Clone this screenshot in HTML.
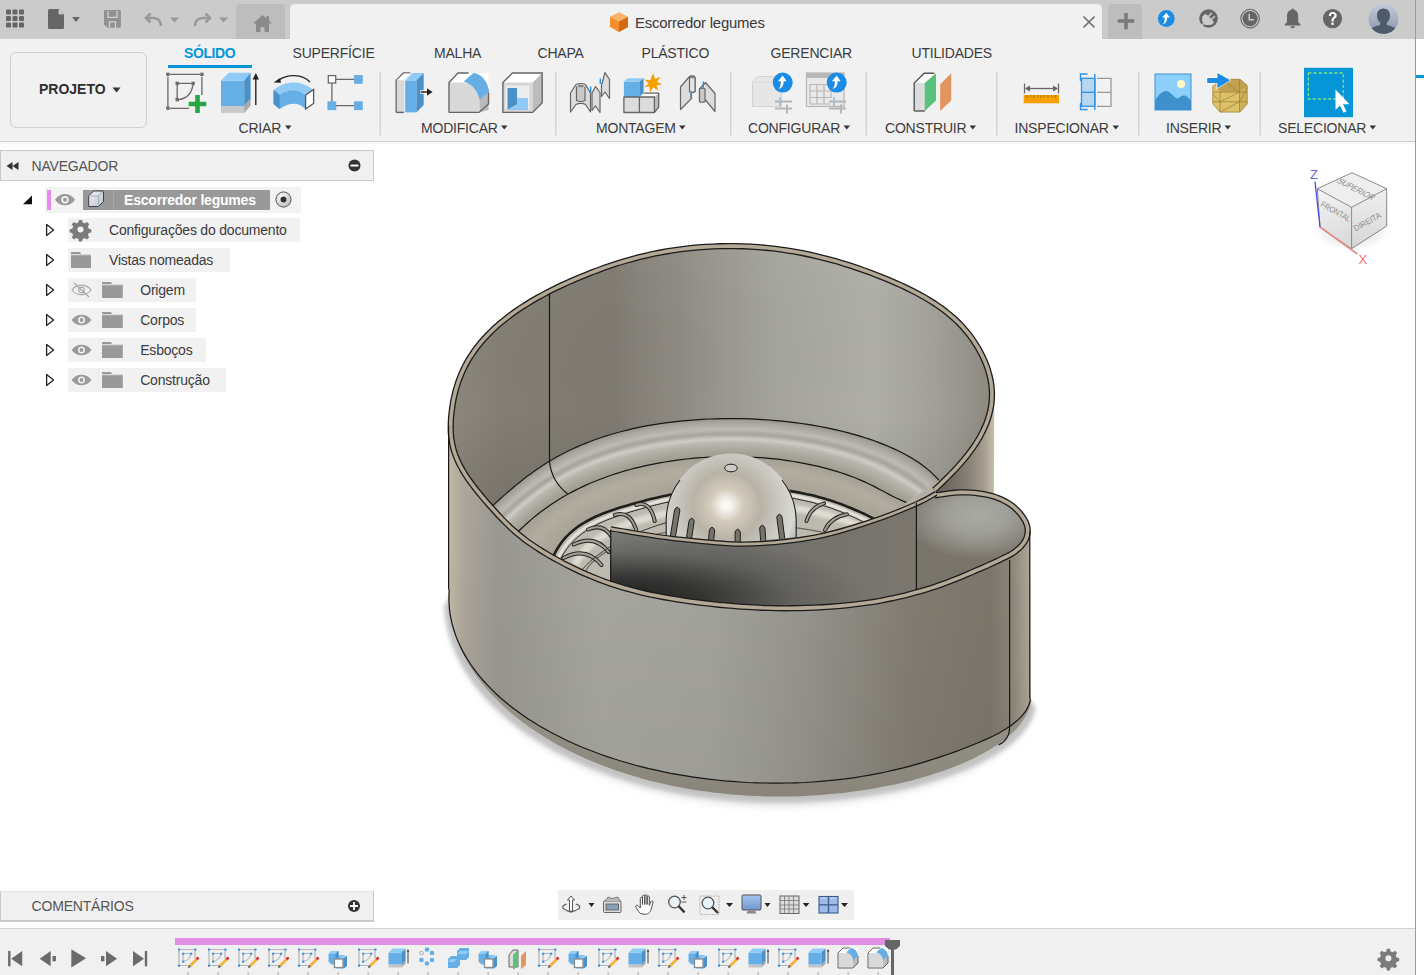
<!DOCTYPE html>
<html><head><meta charset="utf-8">
<style>
*{margin:0;padding:0;box-sizing:border-box}
html,body{width:1424px;height:975px;overflow:hidden;background:#fff;font-family:"Liberation Sans",sans-serif;color:#3c3c3c}
.a{position:absolute}
.t{position:absolute;white-space:nowrap;font-size:14px;letter-spacing:-0.2px;line-height:16px}
svg{position:absolute;overflow:visible}
</style></head><body>
<!-- top bar -->
<div class="a" style="left:0;top:0;width:1415px;height:39px;background:#cbcbcb"></div>
<div class="a" style="left:1416px;top:0;width:8px;height:39px;background:#cbcbcb"></div>
<div class="a" style="left:236px;top:4px;width:49px;height:35px;background:#bdbdbd;border-radius:4px 4px 0 0"></div>
<div class="a" style="left:290px;top:4px;width:812px;height:35px;background:#f1f1f1;border-radius:5px 5px 0 0"></div>
<div class="a" style="left:1108px;top:4px;width:34px;height:35px;background:#bdbdbd;border-radius:4px 4px 0 0"></div>
<!-- toolbar -->
<div class="a" style="left:0;top:39px;width:1415px;height:102px;background:#f1f1f1"></div>
<div class="a" style="left:0;top:141px;width:1415px;height:1px;background:#cdcdcd"></div>
<div class="a" style="left:0;top:142px;width:1415px;height:2px;background:#f7f7f7"></div>
<!-- right thin line -->
<div class="a" style="left:1415px;top:0;width:1px;height:975px;background:#9a9a9a"></div>
<div class="a" style="left:1416px;top:75px;width:8px;height:2.5px;background:#0696d7"></div>
<!-- top bar icons -->
<svg style="left:0;top:0" width="300" height="38">
 <g fill="#666">
  <rect x="6" y="9.5" width="5" height="5" rx="1"/><rect x="12.5" y="9.5" width="5" height="5" rx="1"/><rect x="19" y="9.5" width="5" height="5" rx="1"/>
  <rect x="6" y="16" width="5" height="5" rx="1"/><rect x="12.5" y="16" width="5" height="5" rx="1"/><rect x="19" y="16" width="5" height="5" rx="1"/>
  <rect x="6" y="22.5" width="5" height="5" rx="1"/><rect x="12.5" y="22.5" width="5" height="5" rx="1"/><rect x="19" y="22.5" width="5" height="5" rx="1"/>
  <path d="M48 10.5a1.5 1.5 0 0 1 1.5-1.5H59l5 5v13.5a1.5 1.5 0 0 1-1.5 1.5h-13a1.5 1.5 0 0 1-1.5-1.5z"/>
  <path d="M72 17h8l-4 5z"/>
 </g>
 <path d="M59 9v5h5" fill="#cbcbcb" stroke="#cbcbcb" stroke-width="0.8"/>
 <path d="M104 11.2a1.2 1.2 0 0 1 1.2-1.2h14.5a1.2 1.2 0 0 1 1.2 1.2v15.4a1.2 1.2 0 0 1-1.2 1.2H107.5L104 24.3z" fill="#919191"/>
 <path d="M108 11v6.3h9V11" fill="none" stroke="#cfcfcf" stroke-width="1.3"/>
 <path d="M109.5 27.8v-6h6v6" fill="none" stroke="#cfcfcf" stroke-width="1.3"/>
 <g fill="#999"><path d="M170 17.5h9l-4.5 5z"/><path d="M219 17.5h9l-4.5 5z"/></g>
 <g fill="none" stroke="#999" stroke-width="2.6" stroke-linejoin="miter">
  <path d="M161 26c0-5-3-8-8-8h-6"/><path d="M150.5 13.5l-4.5 4.5 4.5 4.5"/>
  <path d="M195 26c0-5 3-8 8-8h6"/><path d="M205.5 13.5l4.5 4.5-4.5 4.5"/>
 </g>
 <path fill="#8a8a8a" d="M262.5 15l-9.5 8.5h3v8.5h4.5v-5h4v5h4.5v-8.5h3l-3-2.7v-4.8h-2.5v2.6z"/>
</svg>
<!-- tab title -->
<svg style="left:600px;top:8px" width="40" height="30">
 <path d="M19 4.5l9 4.5v10l-9 5-9-5v-10z" fill="#f28e2b"/>
 <path d="M10 9l9 4.7 9-4.7-9-4.5z" fill="#fbb26a"/>
 <path d="M19 13.7v10.3l9-5v-10z" fill="#d46a12"/>
</svg>
<div class="t" style="left:635px;top:14px;font-size:14.9px;line-height:18px;color:#3a3a3a">Escorredor legumes</div>
<svg style="left:1080px;top:13px" width="20" height="20">
 <path d="M3.5 3.5l11 11M14.5 3.5l-11 11" stroke="#707070" stroke-width="1.7"/>
</svg>
<svg style="left:1108px;top:4px" width="316" height="34">
 <path d="M9.7 17h16.5M18 9v16.2" stroke="#7a7a7a" stroke-width="3.6"/>
 <circle cx="58.3" cy="14.5" r="8.4" fill="#1a8ce6"/>
 <path d="M58.3 8.8l-4.2 4.8h2.6c0 3-0.4 5-2 7 3-0.8 4.5-3.5 4.5-7h2.6z" fill="#fff"/>
 <circle cx="100.5" cy="14.5" r="9.3" fill="#666"/>
 <path d="M96.9 10l2.6 1.3 5 5 1.2 1.5c-0.3 2.2-1.5 3.2-4.7 3.2h-4l-2.7-3.2c-0.2-1.5-0.2-3.5 0-5z" fill="#cbcbcb"/>
 <path d="M100.5 12.5l3-3.3M103.3 15.5l3.2-3" stroke="#cbcbcb" stroke-width="1.5" stroke-linecap="round"/>
 <path d="M93 22.3l3-3" stroke="#cbcbcb" stroke-width="1.6"/>
 <circle cx="142.1" cy="14.6" r="9.3" fill="none" stroke="#666" stroke-width="1.1"/>
 <circle cx="142.1" cy="14.6" r="7.6" fill="#666"/>
 <path d="M141.2 9.8v5.9h4.8" fill="none" stroke="#cbcbcb" stroke-width="1.5"/>
 <path d="M183.6 5.5c0-0.6 0.5-1 1.1-1s1.1 0.4 1.1 1c3 0.8 4.4 3.2 4.4 6.6v5.8l2.3 2.6v0.9h-15.8v-0.9l2.3-2.6v-5.8c0-3.4 1.5-5.8 4.6-6.6z M182.3 22.2h4.8a2.4 2 0 0 1-4.8 0z" fill="#666"/>
 <circle cx="224.5" cy="14.6" r="9.6" fill="#666"/>
 <path d="M220.8 12c0-2.6 1.7-4.1 3.9-4.1 2.4 0 4 1.4 4 3.6 0 2.8-3.1 3-3.1 5.3v0.6h-2.1v-1c0-3.1 2.9-3.1 2.9-4.9 0-1-0.7-1.7-1.7-1.7-1.1 0-1.8 0.8-1.8 2.2z" fill="#fff"/>
 <rect x="223.4" y="18.6" width="2.3" height="2.3" fill="#fff"/>
 <defs><linearGradient id="av" x1="0" y1="0" x2="0" y2="1"><stop offset="0" stop-color="#c3cbd8"/><stop offset="1" stop-color="#8795ac"/></linearGradient>
 <clipPath id="avc"><circle cx="275.5" cy="15" r="15"/></clipPath></defs>
 <circle cx="275.5" cy="15" r="15" fill="url(#av)"/>
 <g clip-path="url(#avc)" fill="#4f5a6b">
  <path d="M275.5 4.5c-4.2 0-6.5 3-6.5 7 0 3 1.2 5.6 3.2 7.3v2.2c-4.5 1-9 2.5-10 5.5v5h26.6v-5c-1-3-5.5-4.5-10-5.5v-2.2c2-1.7 3.2-4.3 3.2-7.3 0-4-2.3-7-6.5-7z"/>
 </g>
</svg>

<!-- PROJETO -->
<div class="a" style="left:10px;top:52px;width:137px;height:76px;border:1.3px solid #cfcfcf;border-radius:6px;background:#f1f1f1"></div>
<div class="t" style="left:39px;top:81px;font-weight:bold;font-size:14px;color:#2f2f2f;letter-spacing:0px">PROJETO</div>
<svg style="left:0;top:0" width="10" height="10"><path d="M112.5 87.5h8l-4 5z" fill="#333"/></svg>

<!-- tabs -->
<div class="t" style="left:184px;top:45px;font-weight:bold;color:#0696d7;letter-spacing:-0.4px">SÓLIDO</div>
<div class="a" style="left:168px;top:64.5px;width:84px;height:3.5px;background:#0696d7"></div>
<div class="t" style="left:292.5px;top:45px">SUPERFÍCIE</div>
<div class="t" style="left:434px;top:45px">MALHA</div>
<div class="t" style="left:537.5px;top:45px">CHAPA</div>
<div class="t" style="left:641.5px;top:45px">PLÁSTICO</div>
<div class="t" style="left:770.5px;top:45px">GERENCIAR</div>
<div class="t" style="left:911.5px;top:45px">UTILIDADES</div>

<!-- group labels -->
<div class="t" style="left:238.5px;top:120px">CRIAR</div>
<div class="t" style="left:421px;top:120px">MODIFICAR</div>
<div class="t" style="left:596px;top:120px">MONTAGEM</div>
<div class="t" style="left:748px;top:120px">CONFIGURAR</div>
<div class="t" style="left:885px;top:120px">CONSTRUIR</div>
<div class="t" style="left:1014.5px;top:120px">INSPECIONAR</div>
<div class="t" style="left:1166px;top:120px">INSERIR</div>
<div class="t" style="left:1278px;top:120px">SELECIONAR</div>
<svg style="left:0;top:0" width="10" height="10"><g fill="#333">
 <path d="M285 125.5h6.5l-3.25 4z"/><path d="M501 125.5h6.5l-3.25 4z"/><path d="M679 125.5h6.5l-3.25 4z"/>
 <path d="M843.5 125.5h6.5l-3.25 4z"/><path d="M969.5 125.5h6.5l-3.25 4z"/><path d="M1112.5 125.5h6.5l-3.25 4z"/>
 <path d="M1224.5 125.5h6.5l-3.25 4z"/><path d="M1369.5 125.5h6.5l-3.25 4z"/>
</g>
<g fill="#d4d4d4">
 <rect x="379.5" y="72" width="1.5" height="63.5"/><rect x="555" y="72" width="1.5" height="63.5"/><rect x="730" y="72" width="1.5" height="63.5"/>
 <rect x="865.5" y="72" width="1.5" height="63.5"/><rect x="996" y="72" width="1.5" height="63.5"/><rect x="1138" y="72" width="1.5" height="63.5"/>
 <rect x="1259.5" y="72" width="1.5" height="63.5"/>
</g></svg>

<svg style="left:0;top:0" width="1424" height="145">
<defs>
 <linearGradient id="selg" x1="0" y1="0" x2="0" y2="1"><stop offset="0" stop-color="#0a9be0"/><stop offset="1" stop-color="#0590d4"/></linearGradient>
</defs>
<!-- CRIAR: sketch -->
<g fill="none" stroke="#6a6a6a" stroke-width="1.3">
 <path d="M170 74.4h30M167.9 77v29.5M170 108.3h19M201.9 77v18"/>
 <path d="M179 83.4h12.4M177.2 85v13M179 99.6c7-1 12.5-6 14-14.5"/>
</g>
<g fill="#6a6a6a">
 <rect x="166.2" y="72.7" width="3.4" height="3.4"/><rect x="200.2" y="72.7" width="3.4" height="3.4"/><rect x="166.2" y="106.4" width="3.4" height="3.4"/>
 <rect x="175.5" y="81.7" width="3.4" height="3.4"/><rect x="191.4" y="81.7" width="3.4" height="3.4"/><rect x="175.5" y="97.9" width="3.4" height="3.4"/>
</g>
<path d="M195.2 95h4.6v6.7h6.5v4.6h-6.5v6.7h-4.6v-6.7h-6.5v-4.6h6.5z" fill="#25a745"/>
<!-- extrude -->
<path d="M221 106h23.2v6.9H221z" fill="#c9c9c9"/>
<path d="M244.2 106l6.4-7.5v7l-6.4 7.4z" fill="#a9a9a9"/>
<path d="M221 80.5h23.2V106H221z" fill="#65aee6"/>
<path d="M221 80.5l8-7.8h21.6l-6.4 7.8z" fill="#8fcbf6"/>
<path d="M244.2 80.5l6.4-7.8v25.8l-6.4 7.5z" fill="#4b91c9"/>
<path d="M255.8 77v28" stroke="#222" stroke-width="1.4"/><path d="M252.6 79.5l3.2-6.5 3.2 6.5z" fill="#222"/>
<!-- revolve -->
<path d="M310 82c-8-8-22-8.5-32-1.5" fill="none" stroke="#222" stroke-width="1.3"/>
<path d="M273.6 82.5l6.5-4.5 0.8 4.8z" fill="#222"/>
<path d="M273.6 90c12-10 28-10 40 0v8c-12-8-28-8-40 0z" fill="#8fcbf6"/>
<path d="M273.6 90v14l6 5c10-7 19-7 26 0v-14c-8-6-17-6-26 0z" fill="#65aee6"/>
<path d="M273.6 90v14l6 5v-14z" fill="#4b91c9"/>
<path d="M305.6 95l8-5.5v14l-8 5.5z" fill="#fff" stroke="#555" stroke-width="1.3"/>
<!-- pattern -->
<g stroke="#6a6a6a" stroke-width="1.3" fill="none"><path d="M336 79.3h18M331.9 83.5v18M336 105.7h18"/></g>
<rect x="328.3" y="75.6" width="7.4" height="7.4" fill="#fff" stroke="#6a6a6a" stroke-width="1.3"/>
<g fill="#65aee6" stroke="#5aa0d8" stroke-width="0.6"><rect x="354.3" y="75.3" width="8" height="8"/><rect x="327.9" y="101.8" width="8" height="8"/><rect x="354.3" y="101.8" width="8" height="8"/></g>

<!-- MODIFICAR: press pull -->
<path d="M396.2 112.4V80.4l7.3-7.4h6.7" fill="none" stroke="#666" stroke-width="1.4"/>
<path d="M396.9 80.4h7.3v31.5h-7.3z" fill="#d9d9d9"/><path d="M396.2 112.4h7.8" stroke="#666" stroke-width="1.4"/>
<path d="M397 80l7-6.5h6l-6 6.5z" fill="#fff"/>
<path d="M405.2 80.4h11.2v32h-11.2z" fill="#65aee6"/>
<path d="M405.2 80.4l7.2-7.4h11.3l-7.3 7.4z" fill="#8fcbf6"/>
<path d="M416.4 80.4l7.3-7.4v32l-7.3 7.4z" fill="#4b91c9"/>
<path d="M420 92h8" stroke="#fff" stroke-width="3.4"/>
<path d="M420.5 92h7" stroke="#222" stroke-width="1.5"/><path d="M427 88.3l5.5 3.7-5.5 3.7z" fill="#222"/>
<!-- fillet -->
<path d="M449 82.5l9-9h30.5v25l-9.5 13.9H449z" fill="#fff"/>
<path d="M449.5 82.5h15c9 0 15 6 15 15v15h-30z" fill="#d9d9d9"/>
<path d="M479.5 97.5l9-7.5v20l-9 2.4z" fill="#b9b9b9"/>
<path d="M463.7 81.5c4-3.5 7.5-7 10-8.5 9 1 15 11 15.3 18.8l-9.5 8c-1.5-9-7.5-16-15.8-18.3z" fill="#65aee6"/>
<path d="M449 112.4V82.5l9-9.5h10.5M449 112.4h30l9.5-8.5V92.5" fill="none" stroke="#666" stroke-width="1.4"/>
<!-- shell -->
<path d="M502.9 82.6l9.5-9.6h29.8v29.8l-9.5 9.6h-29.8z" fill="#fff"/>
<path d="M502.9 82.6h29.8v29.8h-29.8z" fill="#d6d6d6"/>
<path d="M532.7 82.6l9.5-9.6v29.8l-9.5 9.6z" fill="#bcbcbc"/>
<path d="M505.5 85.5h24v24h-24z" fill="#ececec"/>
<path d="M507.5 88h9.5v16.5h11v5h-20.5z" fill="#4b91c9"/>
<path d="M517 98h11v6.5h-11v-6.5zM507.5 109.5l9.5-5.5h11v5.5z" fill="#8fcbf6"/>
<path d="M502.9 82.6l9.5-9.6h29.8v29.8l-9.5 9.6h-29.8z" fill="none" stroke="#666" stroke-width="1.4"/>

<!-- MONTAGEM joint -->
<g stroke="#666" stroke-width="1.2" stroke-linejoin="round" fill="#dcdcdc">
 <path d="M570.5 112V93l5.5-8.5c2.5-1.3 7-1.3 9.5 0l5 8.5v19l-5-7.5c-2.5-1.5-7-1.5-9.5 0z"/>
 <path d="M576.5 86.5v14c2.5 1.3 6.5 1.3 8.5 0v-14" fill="#c9c9c9"/>
 <path d="M592 93l3.5-6.5 4.5 6v20l-4.5-6.5-3.5 4.5z"/>
 <path d="M601.5 85.5l3.5-13 4.5 7v19l-4.5-6.5-3.5 4.5z"/>
</g>
<ellipse cx="580.7" cy="86" rx="3.2" ry="1.3" fill="#888"/>
<path d="M590.7 86.5v5.5M600.3 78.5v5.5" stroke="#1b8ee8" stroke-width="1.3"/>
<!-- new component -->
<path d="M623.9 81.6h15.5V97h-15.5z" fill="#65aee6"/>
<path d="M623.9 81.6l3.9-3.4h15.8l-4.2 3.4z" fill="#8fcbf6"/>
<path d="M639.4 81.6l4.2-3.4v15l-4.2 3.8z" fill="#4b91c9"/>
<path d="M639.4 97l4.2-3.8h15.1l-4.3 3.8z" fill="#fff"/>
<path d="M654.4 97l4.3-3.8v14l-4.3 5.3z" fill="#bcbcbc"/>
<path d="M623.9 97h30.5v15.5h-30.5z" fill="#dcdcdc"/>
<path d="M623.9 97h30.5v15.5h-30.5zM639.4 97v15.5M654.4 112.5l4.3-5.3v-14h-15.1" fill="none" stroke="#666" stroke-width="1.3" stroke-linejoin="round"/>
<path d="M653.2 73l1.8 6 5.5-2.3-3.5 5 5.3 2.5-5.8 1 1.8 5.5-5-3.5-3.2 5-0.5-6-5.5 1 4.5-3.8-4.2-4 5.8 0.8z" fill="#f5a000"/>
<!-- joint 2 -->
<g stroke="#666" stroke-width="1.2" stroke-linejoin="round" fill="#dcdcdc">
 <path d="M680.5 109.5V87l8.5-10c1.5-1.5 5-1.5 6 0v14.5c-1.5 1-3 1-4 0.5V99z"/>
 <path d="M689.5 77.5c1.3-1.5 4.5-1.5 5.5 0v14c-1.3 1-4.2 1-5.5 0z" fill="#e6e6e6"/>
 <path d="M699.5 89l6-6.5 9.5 11v18l-9.5-11.5-2.5 0.5c-1.5 1-3 1-3.5 0z"/>
 <path d="M699.5 89c1-1 4-1 5.5 0v12.5c-1.5 1-4.5 1-5.5 0z" fill="#c9c9c9"/>
</g>
<ellipse cx="692.3" cy="77.5" rx="2.4" ry="1" fill="#888"/>
<path d="M703.3 81.5v7M691.5 91.5v7.5" stroke="#1b8ee8" stroke-width="1.3"/>
<!-- CONFIGURAR -->
<path d="M752.5 81.5l5-5h24v30h-29z" fill="#e6e6e6" stroke="#d3d3d3" stroke-width="1"/>
<path d="M753 82h28" stroke="#ddd" stroke-width="1"/>
<circle cx="782.7" cy="82.6" r="10" fill="#1a8ce6"/>
<path d="M782.7 75.5l-4.8 5.7h2.9c0 3.4-0.3 5.5-2.2 7.8 3.5-0.9 5.1-4 5.1-7.8h2.9z" fill="#fff"/>
<path d="M775 101.5h17M775 108.5h17M780 97.5v8.5M787 104.5v9" stroke="#b5b5b5" stroke-width="2"/>
<path d="M780 98v7" stroke="#9ccaf0" stroke-width="1.5"/>
<rect x="806.5" y="73" width="37.5" height="33.5" fill="#e9e9e9" stroke="#b8b8b8" stroke-width="1.2"/>
<rect x="806.5" y="73" width="37.5" height="5" fill="#b8b8b8"/>
<g stroke="#b8b8b8" stroke-width="1.2" fill="none"><path d="M810 84.5h25M810 91h25M810 97.5h22M810 104h20M810 84v20M817 84v20M824 84v20M831 84v14"/></g>
<circle cx="836.7" cy="82.6" r="10" fill="#1a8ce6"/>
<path d="M836.7 75.5l-4.8 5.7h2.9c0 3.4-0.3 5.5-2.2 7.8 3.5-0.9 5.1-4 5.1-7.8h2.9z" fill="#fff"/>
<path d="M829 101.5h17M829 108.5h17M834 97.5v8.5M841 104.5v9" stroke="#b5b5b5" stroke-width="2"/>
<path d="M834 98v7" stroke="#9ccaf0" stroke-width="1.5"/>

<!-- CONSTRUIR plane -->
<path d="M914.2 83l10-9.7h11v27l-10.4 10.7h-10.6z" fill="#dcdcdc"/>
<path d="M914.2 83l10-9.7h11l-10.4 9.7z" fill="#fff"/>
<path d="M914.2 111V83l10-9.7h10" fill="none" stroke="#555" stroke-width="1.4"/><path d="M914.2 111h10.6" stroke="#555" stroke-width="1.4"/>
<path d="M924.8 83l11.2-9.7v27.2l-11.2 10.5z" fill="#58c27a"/>
<path d="M940.2 84.3l11-11v27.2l-11 10.5z" fill="#e39560"/>

<!-- INSPECIONAR measure -->
<path d="M1024.5 83.5v10M1058.5 83.5v10" stroke="#666" stroke-width="1.2"/>
<path d="M1026 88.5h31" stroke="#666" stroke-width="1.3"/>
<path d="M1025 88.5l5-3v6zM1058 88.5l-5-3v6z" fill="#666"/>
<rect x="1023.7" y="95" width="35.3" height="8.3" fill="#f5a000"/>
<path d="M1027 95v3M1030.5 95v2M1034 95v3M1037.5 95v2M1041 95v3M1044.5 95v2M1048 95v3M1051.5 95v2M1055 95v3" stroke="#8a6a20" stroke-width="0.8"/>
<!-- section -->
<rect x="1081.5" y="78.3" width="13.3" height="28" fill="#b7d6f0" stroke="#2c93e6" stroke-width="1.3"/>
<path d="M1081.5 92.3h13.3" stroke="#2c93e6" stroke-width="1.3"/>
<path d="M1094.8 74v36" stroke="#2c93e6" stroke-width="1.4"/>
<path d="M1080.5 81v-7h7M1080.5 103v6.5h7" fill="none" stroke="#2c93e6" stroke-width="1.4"/>
<path d="M1097 78.3h14v28h-14M1097 92.3h14" fill="none" stroke="#999" stroke-width="1.3"/>

<!-- INSERIR image -->
<rect x="1155" y="74" width="36" height="36" fill="#8ccffa"/>
<path d="M1155 101c4-7 9-12 14-9 5 3 7 9 11 5 4-3 8-1 11 4v9h-36z" fill="#3f91cd"/>
<rect x="1155" y="74" width="36" height="36" fill="none" stroke="#3f91cd" stroke-width="1"/>
<circle cx="1181" cy="84" r="4" fill="#fffbc7"/>
<!-- mesh -->
<path d="M1212.8 85.4V103.9l7.2 8.2h20l7.2-8.2V85.4l-7.2-6.1h-9.2z" fill="#dcc06a"/>
<path d="M1214 84l16.8-4.7h9.2l7.2 6.1-7.7 6.7h-19.5z" fill="#c1a14f"/>
<path d="M1239.5 92.1l7.7-6.7v18.5l-7.7 8.2z" fill="#cdb058"/>
<g fill="none" stroke="#9f8437" stroke-width="0.75">
 <path d="M1212.8 85.4V103.9l7.2 8.2h20l7.2-8.2V85.4l-7.2-6.1h-9.2"/>
 <path d="M1220 92.1v20M1239.5 79.3v32.8M1212.8 92.1h34.4M1212.8 101.8h34.4M1220 101.8l19.5-9.7M1220 112.1l19.5-10.3M1226.7 83.4l12.8 8.7M1212.8 94l7.2 7.8M1247.2 87.5l-7.7 14.3"/>
</g>
<path d="M1206.2 77h10.2v-5.6l14.9 8.9-14.9 8.9v-5.6h-10.2z" fill="#fff" opacity="0.9"/>
<path d="M1207.2 78h10.2v-5.1l12.9 7.4-12.9 7.7v-5.1h-10.2z" fill="#1a8ce6"/>

<!-- SELECIONAR -->
<rect x="1304" y="67.8" width="49" height="49.4" fill="#0696d7"/>
<rect x="1308.3" y="73" width="35" height="26" fill="none" stroke="#7ee37e" stroke-width="1.3" stroke-dasharray="3.2 2"/>
<path d="M1335.5 89.5v20.5l4.5-4.5 3.5 7.3 3-1.5-3.5-7h6.5z" fill="#fff"/>
</svg>

<!-- navigator header -->
<div class="a" style="left:0;top:150px;width:374px;height:30.5px;background:#f0f0f0;border:1.3px solid #c9c9c9"></div>
<svg style="left:0;top:0" width="10" height="10">
 <path d="M6.5 166l6-4v8zM12.5 166l6-4v8z" fill="#333"/>
 <circle cx="354.5" cy="165.5" r="6" fill="#333"/><rect x="350.5" y="164.6" width="8" height="1.9" fill="#fff"/>
</svg>
<div class="t" style="left:31.5px;top:157.5px;color:#555">NAVEGADOR</div>
<!-- root row -->
<div class="a" style="left:45px;top:187.3px;width:256px;height:25.4px;background:#f3f3f3"></div>
<div class="a" style="left:47.4px;top:190px;width:3.6px;height:19.7px;background:#e58be8"></div>
<div class="a" style="left:82.6px;top:190.3px;width:187px;height:19.4px;background:#999"></div>
<div class="a" style="left:113px;top:190.3px;width:1px;height:19.4px;background:#a8a8a8"></div>
<div class="t" style="left:124px;top:192px;color:#fff;font-weight:bold">Escorredor legumes</div>
<svg style="left:0;top:0" width="10" height="10">
 <defs><linearGradient id="cubeg" x1="0" y1="0" x2="1" y2="1"><stop offset="0" stop-color="#f2f4f8"/><stop offset="1" stop-color="#b9c0cc"/></linearGradient>
 <radialGradient id="radg" cx="0.4" cy="0.35" r="0.7"><stop offset="0" stop-color="#fff"/><stop offset="1" stop-color="#bbb"/></radialGradient></defs>
 <path d="M23 204.3l9-8.7v8.7z" fill="#111"/>
 <path d="M55 199.7c5-7.5 15-7.5 20 0c-5 7.5-15 7.5-20 0z" fill="#9a9a9a"/>
 <circle cx="65" cy="199.7" r="3.7" fill="#f3f3f3"/><circle cx="65" cy="199.7" r="2" fill="#9a9a9a"/>
 <path d="M88.7 196l5-5h9.8v10.5l-5 5h-9.8z" fill="url(#cubeg)" stroke="#333" stroke-width="0.9"/>
 <path d="M88.7 196h9.8l5-5M98.5 196v10.5" fill="none" stroke="#9aa2ae" stroke-width="0.8"/>
 <circle cx="283.5" cy="199.5" r="7.6" fill="url(#radg)" stroke="#555" stroke-width="1"/>
 <circle cx="283.5" cy="199.5" r="3" fill="#333"/>
</svg>
<!-- child rows -->
<div class="a" style="left:67.7px;top:217.5px;width:232.5px;height:24.6px;background:#f1f1f1"></div>
<div class="a" style="left:67.7px;top:247.6px;width:162px;height:24.6px;background:#f1f1f1"></div>
<div class="a" style="left:67.7px;top:277.7px;width:128.5px;height:24.6px;background:#f1f1f1"></div>
<div class="a" style="left:67.7px;top:307.7px;width:128.5px;height:24.6px;background:#f1f1f1"></div>
<div class="a" style="left:67.7px;top:337.7px;width:138.5px;height:24.6px;background:#f1f1f1"></div>
<div class="a" style="left:67.7px;top:367.7px;width:158.5px;height:24.6px;background:#f1f1f1"></div>
<svg style="left:0;top:0" width="10" height="10">
 <g fill="#ececec"><rect x="98" y="217.5" width="1" height="24.6"/><rect x="98" y="247.6" width="1" height="24.6"/><rect x="98" y="277.7" width="1" height="24.6"/><rect x="98" y="307.7" width="1" height="24.6"/><rect x="98" y="337.7" width="1" height="24.6"/><rect x="98" y="367.7" width="1" height="24.6"/></g>
 <g fill="none" stroke="#222" stroke-width="1.3" stroke-linejoin="round">
  <path d="M46.6 224.5v11l7-5.5z"/><path d="M46.6 254.5v11l7-5.5z"/><path d="M46.6 284.5v11l7-5.5z"/>
  <path d="M46.6 314.5v11l7-5.5z"/><path d="M46.6 344.5v11l7-5.5z"/><path d="M46.6 374.5v11l7-5.5z"/>
 </g>
 <!-- gear -->
 <g transform="translate(80.5 229.5)">
  <path fill="#7b7b7b" d="M-1.6-9.5h3.2l0.5 2.6a7 7 0 0 1 2.2 0.9l2.2-1.5 2.3 2.3-1.5 2.2a7 7 0 0 1 0.9 2.2l2.6 0.5v3.2l-2.6 0.5a7 7 0 0 1-0.9 2.2l1.5 2.2-2.3 2.3-2.2-1.5a7 7 0 0 1-2.2 0.9l-0.5 2.6h-3.2l-0.5-2.6a7 7 0 0 1-2.2-0.9l-2.2 1.5-2.3-2.3 1.5-2.2a7 7 0 0 1-0.9-2.2l-2.6-0.5v-3.2l2.6-0.5a7 7 0 0 1 0.9-2.2l-1.5-2.2 2.3-2.3 2.2 1.5a7 7 0 0 1 2.2-0.9z"/>
  <circle r="3" fill="#f1f1f1"/>
 </g>
 <!-- folders -->
 <g fill="#999">
  <path d="M71 252h9l1 2h10v14H71z"/>
  <path d="M102 282h9l1 2h10.8v14H102z"/><path d="M102 312h9l1 2h10.8v14H102z"/>
  <path d="M102 342h9l1 2h10.8v14H102z"/><path d="M102 372h9l1 2h10.8v14H102z"/>
 </g>
 <g fill="#f1f1f1"><rect x="71" y="254.3" width="20" height="0.9"/><rect x="102" y="284.3" width="20.8" height="0.9"/><rect x="102" y="314.3" width="20.8" height="0.9"/><rect x="102" y="344.3" width="20.8" height="0.9"/><rect x="102" y="374.3" width="20.8" height="0.9"/></g>
 <!-- eyes -->
 <g fill="#9a9a9a">
  <path d="M71.5 320c5-7 15-7 20 0c-5 7-15 7-20 0z"/><path d="M71.5 350c5-7 15-7 20 0c-5 7-15 7-20 0z"/><path d="M71.5 380c5-7 15-7 20 0c-5 7-15 7-20 0z"/>
 </g>
 <g fill="#f1f1f1"><circle cx="81.5" cy="320" r="3.5"/><circle cx="81.5" cy="350" r="3.5"/><circle cx="81.5" cy="380" r="3.5"/></g>
 <g fill="#9a9a9a"><circle cx="81.5" cy="320" r="1.9"/><circle cx="81.5" cy="350" r="1.9"/><circle cx="81.5" cy="380" r="1.9"/></g>
 <!-- eye hidden -->
 <path d="M72 290c5-6.5 14-6.5 19 0c-5 6.5-14 6.5-19 0z" fill="none" stroke="#aaa" stroke-width="1.2"/>
 <circle cx="81.5" cy="290" r="2.8" fill="none" stroke="#aaa" stroke-width="1.2"/>
 <path d="M74 283l15 14" stroke="#aaa" stroke-width="1.3"/>
</svg>
<div class="t" style="left:109px;top:222px">Configurações do documento</div>
<div class="t" style="left:109px;top:252px">Vistas nomeadas</div>
<div class="t" style="left:140.2px;top:282px">Origem</div>
<div class="t" style="left:140.2px;top:312px">Corpos</div>
<div class="t" style="left:140.2px;top:342px">Esboços</div>
<div class="t" style="left:140.2px;top:372px">Construção</div>

<svg style="left:0;top:0" width="1424" height="975">
<defs>
<linearGradient id="gBack" x1="448" y1="0" x2="994" y2="0" gradientUnits="userSpaceOnUse">
 <stop offset="0" stop-color="#8d887e"/><stop offset="0.1" stop-color="#837e74"/><stop offset="0.3" stop-color="#7f7a71"/><stop offset="0.42" stop-color="#8e8a82"/>
 <stop offset="0.6" stop-color="#a4a49d"/><stop offset="0.78" stop-color="#afafa8"/><stop offset="0.9" stop-color="#a09f97"/><stop offset="1" stop-color="#8c887f"/>
</linearGradient>
<linearGradient id="gBackV" x1="0" y1="250" x2="0" y2="520" gradientUnits="userSpaceOnUse">
 <stop offset="0" stop-color="#fff" stop-opacity="0.03"/><stop offset="0.6" stop-color="#000" stop-opacity="0"/><stop offset="1" stop-color="#000" stop-opacity="0.1"/>
</linearGradient>
<linearGradient id="gFront" x1="448" y1="0" x2="1030" y2="0" gradientUnits="userSpaceOnUse">
 <stop offset="0" stop-color="#c6bcab"/><stop offset="0.03" stop-color="#aea89c"/><stop offset="0.09" stop-color="#9c9a94"/>
 <stop offset="0.26" stop-color="#aaaaa3"/><stop offset="0.45" stop-color="#a7a7a0"/><stop offset="0.62" stop-color="#98968f"/>
 <stop offset="0.8" stop-color="#857f74"/><stop offset="0.93" stop-color="#7f786d"/><stop offset="0.97" stop-color="#8f897d"/><stop offset="1" stop-color="#b3ab9c"/>
</linearGradient>
<linearGradient id="gFrontV" x1="0" y1="520" x2="0" y2="790" gradientUnits="userSpaceOnUse">
 <stop offset="0" stop-color="#000" stop-opacity="0.02"/><stop offset="1" stop-color="#000" stop-opacity="0.06"/>
</linearGradient>
<linearGradient id="gDark" x1="610" y1="0" x2="936" y2="0" gradientUnits="userSpaceOnUse">
 <stop offset="0" stop-color="#7d7d7b"/><stop offset="0.4" stop-color="#71706c"/><stop offset="0.75" stop-color="#77746d"/><stop offset="1" stop-color="#7e786e"/>
</linearGradient>
<radialGradient id="gDarkV" cx="615" cy="600" r="230" gradientUnits="userSpaceOnUse" gradientTransform="translate(615 600) scale(1.1 0.3) translate(-615 -600)">
 <stop offset="0" stop-color="#000" stop-opacity="0.8"/><stop offset="0.35" stop-color="#000" stop-opacity="0.55"/><stop offset="0.7" stop-color="#000" stop-opacity="0.15"/><stop offset="1" stop-color="#000" stop-opacity="0"/>
</radialGradient>
<radialGradient id="gEnd" cx="978" cy="515" r="75" gradientUnits="userSpaceOnUse" gradientTransform="translate(978 515) scale(1 0.6) rotate(-15) translate(-978 -515)">
 <stop offset="0" stop-color="#a9aaa4"/><stop offset="0.4" stop-color="#a09f99"/><stop offset="0.75" stop-color="#8b877e"/><stop offset="1" stop-color="#79746a"/>
</radialGradient>
<linearGradient id="gRight" x1="945" y1="0" x2="994" y2="0" gradientUnits="userSpaceOnUse">
 <stop offset="0" stop-color="#6c675e"/><stop offset="0.45" stop-color="#857f74"/><stop offset="0.8" stop-color="#a59d8e"/><stop offset="1" stop-color="#c6bdab"/>
</linearGradient>
<linearGradient id="gBase" x1="0" y1="700" x2="0" y2="795" gradientUnits="userSpaceOnUse">
 <stop offset="0" stop-color="#99948a"/><stop offset="1" stop-color="#8a857b"/>
</linearGradient>
<linearGradient id="gTorus" x1="0" y1="418" x2="0" y2="470" gradientUnits="userSpaceOnUse">
 <stop offset="0" stop-color="#9f9c94"/><stop offset="0.15" stop-color="#c9c8c2"/><stop offset="0.3" stop-color="#e3e3de"/><stop offset="0.45" stop-color="#c2bfb6"/><stop offset="0.75" stop-color="#a9a59b"/><stop offset="1" stop-color="#b3afa5"/>
</linearGradient>
<radialGradient id="gDome" cx="728" cy="506" r="75" gradientUnits="userSpaceOnUse" fx="726" fy="505">
 <stop offset="0" stop-color="#ffffff"/><stop offset="0.08" stop-color="#f2f0ea"/><stop offset="0.22" stop-color="#d3cabb"/><stop offset="0.45" stop-color="#b9b3a7"/><stop offset="0.7" stop-color="#cac9c3"/><stop offset="0.88" stop-color="#d9d9d5"/><stop offset="1" stop-color="#b5b3ab"/>
</radialGradient>
<filter id="blur6" x="-20%" y="-50%" width="140%" height="200%"><feGaussianBlur stdDeviation="4"/></filter>
<filter id="blur2" x="-10%" y="-10%" width="120%" height="120%"><feGaussianBlur stdDeviation="2"/></filter>
<filter id="blur1" x="-10%" y="-10%" width="120%" height="120%"><feGaussianBlur stdDeviation="1.5"/></filter>
<clipPath id="cpTorus"><path d="M492.2 506.1 L494.9 503.6 L497.5 501.2 L500.2 498.8 L502.9 496.4 L505.5 494.1 L508.2 491.8 L510.9 489.5 L513.5 487.2 L516.3 484.9 L519.0 482.7 L521.8 480.5 L524.6 478.2 L527.5 476.1 L530.5 473.9 L533.5 471.7 L536.6 469.5 L539.8 467.4 L543.0 465.2 L546.4 463.1 L549.8 461.0 L553.3 458.9 L557.0 456.8 L560.8 454.8 L564.6 452.8 L568.6 450.8 L572.8 448.8 L577.0 446.9 L581.4 445.0 L586.0 443.1 L590.6 441.3 L595.4 439.5 L600.4 437.8 L605.4 436.1 L610.6 434.5 L616.0 433.0 L621.5 431.5 L627.1 430.1 L632.8 428.7 L638.7 427.4 L644.7 426.2 L650.8 425.1 L656.9 424.1 L663.2 423.2 L669.6 422.3 L676.0 421.6 L682.5 420.9 L689.0 420.3 L695.6 419.8 L702.3 419.4 L709.0 419.0 L715.7 418.8 L722.4 418.6 L729.1 418.6 L735.8 418.6 L742.5 418.7 L749.2 418.9 L755.9 419.2 L762.6 419.6 L769.2 420.0 L775.7 420.6 L782.2 421.2 L788.7 421.9 L795.0 422.6 L801.4 423.5 L807.6 424.4 L813.7 425.4 L819.8 426.5 L825.8 427.6 L831.6 428.9 L837.4 430.1 L843.0 431.5 L848.5 432.9 L853.9 434.4 L859.2 435.9 L864.4 437.5 L869.4 439.1 L874.3 440.8 L879.0 442.6 L883.6 444.4 L888.1 446.2 L892.4 448.1 L896.6 450.0 L900.6 452.0 L904.5 454.0 L908.2 456.0 L911.7 458.1 L915.1 460.2 L918.4 462.3 L921.5 464.5 L924.4 466.7 L927.2 468.9 L929.8 471.1 L932.3 473.4 L934.6 475.6 L936.8 477.9 L938.8 480.2 L906.2 502.4 L902.6 500.9 L899.2 499.3 L895.8 497.8 L892.6 496.2 L889.5 494.6 L886.4 493.0 L883.4 491.3 L880.3 489.7 L877.2 488.1 L874.1 486.4 L870.8 484.8 L867.5 483.2 L864.1 481.6 L860.5 480.1 L856.8 478.5 L853.0 477.0 L849.1 475.6 L845.1 474.1 L840.9 472.8 L836.6 471.4 L832.3 470.1 L827.8 468.8 L823.2 467.6 L818.5 466.4 L813.6 465.3 L808.7 464.3 L803.7 463.3 L798.6 462.3 L793.4 461.5 L788.1 460.6 L782.7 459.9 L777.3 459.2 L771.8 458.6 L766.2 458.1 L760.6 457.6 L755.0 457.3 L749.3 457.0 L743.5 456.7 L737.8 456.6 L732.0 456.6 L726.2 456.6 L720.5 456.7 L714.7 456.9 L709.0 457.2 L703.3 457.5 L697.7 457.9 L692.1 458.4 L686.5 459.0 L681.0 459.7 L675.6 460.4 L670.2 461.1 L664.9 462.0 L659.7 462.9 L654.6 463.9 L649.5 464.9 L644.6 465.9 L639.7 467.1 L634.9 468.2 L630.2 469.5 L625.7 470.7 L621.2 472.0 L616.8 473.4 L612.5 474.8 L608.3 476.2 L604.2 477.7 L600.3 479.2 L596.4 480.7 L592.6 482.2 L588.9 483.8 L585.3 485.4 L581.8 487.1 L578.3 488.7 L575.0 490.4 L571.7 492.1 L568.6 493.8 L565.5 495.6 L562.4 497.3 L559.5 499.1 L556.6 500.9 L553.8 502.7 L551.0 504.6 L548.3 506.4 L545.7 508.3 L543.1 510.2 L540.5 512.1 L538.0 514.0 L535.6 516.0 L533.2 517.9 L530.8 519.9 L528.5 522.0 L526.2 524.0 L523.9 526.1 L521.7 528.2 L519.5 530.3 L517.3 532.5 Z"/></clipPath>
</defs>
<path d="M448.7 609.0 L449.0 613.8 L449.5 618.5 L450.2 623.2 L451.1 628.0 L452.1 632.7 L453.3 637.4 L454.7 642.0 L456.2 646.7 L457.9 651.3 L459.9 655.9 L461.9 660.5 L464.2 665.0 L466.6 669.5 L469.2 674.0 L472.0 678.4 L474.9 682.8 L478.1 687.2 L481.4 691.5 L484.8 695.7 L488.4 700.0 L492.2 704.1 L496.2 708.3 L500.3 712.3 L504.6 716.3 L509.0 720.3 L513.6 724.2 L518.4 728.0 L523.3 731.8 L528.4 735.5 L533.6 739.1 L539.0 742.6 L544.5 746.1 L550.1 749.5 L556.0 752.9 L561.9 756.1 L568.0 759.2 L574.2 762.3 L580.6 765.3 L587.1 768.2 L593.7 771.0 L600.5 773.7 L607.3 776.3 L614.3 778.9 L621.5 781.3 L628.7 783.6 L636.0 785.8 L643.5 787.9 L651.0 789.9 L658.6 791.8 L666.4 793.5 L674.2 795.2 L682.1 796.7 L690.1 798.2 L698.2 799.5 L706.4 800.6 L714.6 801.7 L722.9 802.6 L731.3 803.4 L739.7 804.1 L748.1 804.7 L756.7 805.1 L765.2 805.4 L773.8 805.5 L782.4 805.5 L791.1 805.4 L799.7 805.2 L808.4 804.8 L817.1 804.3 L825.8 803.6 L834.5 802.8 L843.2 801.9 L851.9 800.8 L860.5 799.6 L869.2 798.2 L877.8 796.8 L886.3 795.1 L894.9 793.4 L903.3 791.4 L911.7 789.4 L920.1 787.1 L928.3 784.7 L936.4 782.1 L944.4 779.4 L952.3 776.5 L960.0 773.4 L967.5 770.2 L974.8 766.7 L981.9 763.1 L988.7 759.3 L995.2 755.3 L1001.3 751.1 L1007.0 746.7 L1012.3 742.0 L1017.1 737.2 L1021.3 732.1 L1024.8 726.8 L1027.7 721.4 L1029.9 715.7 L1031.2 709.9 L1020 690 L760 700 L455 590 Z" fill="#e0e0e0" filter="url(#blur6)"/>
<path d="M444.3 606.0 L444.6 610.8 L445.1 615.5 L445.8 620.2 L446.7 625.0 L447.7 629.7 L448.9 634.4 L450.3 639.0 L451.9 643.7 L453.7 648.3 L455.6 652.9 L457.7 657.5 L460.0 662.0 L462.5 666.5 L465.1 671.0 L468.0 675.4 L470.9 679.8 L474.1 684.2 L477.5 688.5 L481.0 692.7 L484.6 697.0 L488.5 701.1 L492.5 705.3 L496.7 709.3 L501.0 713.3 L505.5 717.3 L510.2 721.2 L515.0 725.0 L520.0 728.8 L525.1 732.5 L530.5 736.1 L535.9 739.6 L541.5 743.1 L547.3 746.5 L553.2 749.9 L559.2 753.1 L565.4 756.2 L571.7 759.3 L578.2 762.3 L584.8 765.2 L591.5 768.0 L598.3 770.7 L605.3 773.3 L612.4 775.9 L619.6 778.3 L627.0 780.6 L634.4 782.8 L642.0 784.9 L649.6 786.9 L657.4 788.8 L665.3 790.5 L673.2 792.2 L681.3 793.7 L689.4 795.2 L697.6 796.5 L705.9 797.6 L714.2 798.7 L722.6 799.6 L731.1 800.4 L739.7 801.1 L748.2 801.7 L756.9 802.1 L765.6 802.4 L774.3 802.5 L783.0 802.5 L791.8 802.4 L800.6 802.2 L809.4 801.8 L818.2 801.3 L827.1 800.6 L835.9 799.8 L844.7 798.9 L853.5 797.8 L862.3 796.6 L871.1 795.2 L879.8 793.8 L888.5 792.1 L897.2 790.4 L905.8 788.4 L914.3 786.4 L922.7 784.1 L931.1 781.7 L939.3 779.1 L947.5 776.4 L955.4 773.5 L963.2 770.4 L970.9 767.2 L978.3 763.7 L985.5 760.1 L992.4 756.3 L999.0 752.3 L1005.2 748.1 L1011.0 743.7 L1016.4 739.0 L1021.2 734.2 L1025.4 729.1 L1029.1 723.8 L1032.0 718.4 L1034.2 712.7 L1035.6 706.9 L1020 690 L760 700 L455 590 Z" fill="#c2c2c2" filter="url(#blur2)"/>
<path d="M934.6 493.0 L939.6 492.4 L944.6 491.7 L949.6 491.0 L954.6 490.4 L959.6 490.1 L964.6 490.0 L969.8 490.2 L975.1 490.6 L980.5 491.3 L985.7 492.1 L990.7 493.2 L995.4 494.6 L999.2 496.0 L1002.8 497.5 L1006.2 499.2 L1009.5 501.1 L1012.5 503.2 L1015.4 505.4 L1017.9 507.7 L1020.3 510.2 L1022.6 512.9 L1024.6 515.6 L1026.3 518.2 L1027.7 520.8 L1028.5 522.6 L1029.1 524.4 L1029.5 526.2 L1029.8 528.0 L1030.0 529.7 L1030.0 531.5 L1029.9 533.3 L1029.6 535.2 L1029.1 537.0 L1028.5 538.8 L1027.8 540.6 L1026.9 542.3 L1025.7 544.2 L1024.2 546.1 L1022.5 548.0 L1020.7 549.7 L1018.8 551.4 L1016.9 553.0 L1014.9 554.5 L1012.7 555.8 L1010.5 557.0 L1008.2 558.2 L1005.7 559.5 L1003.0 560.8 L998.6 562.9 L993.7 565.2 L988.4 567.6 L983.0 570.0 L977.6 572.3 L972.3 574.6 L967.2 576.8 L962.1 578.9 L956.9 581.0 L951.8 583.1 L946.7 585.0 L941.5 586.9 L936.4 588.6 L931.3 590.3 L926.3 591.9 L921.2 593.4 L916.0 594.8 L910.8 596.2 L905.3 597.6 L899.8 598.9 L894.1 600.2 L888.5 601.4 L883.1 602.5 L877.9 603.5 L873.7 604.2 L869.7 604.8 L865.8 605.3 L861.9 605.8 L858.0 606.3 L854.1 606.8 L846.2 607.6 L838.4 608.4 L830.5 609.0 L822.8 609.5 L815.0 609.9 L807.3 610.2 L799.7 610.4 L792.1 610.5 L784.5 610.5 L777.0 610.5 L769.5 610.3 L762.1 610.1 L754.8 609.7 L747.5 609.3 L740.2 608.9 L733.0 608.3 L725.8 607.7 L718.7 607.0 L711.6 606.3 L704.5 605.5 L697.5 604.6 L690.5 603.7 L683.6 602.8 L676.6 601.7 L669.8 600.6 L662.9 599.4 L656.1 598.1 L649.3 596.7 L642.6 595.2 L636.0 593.6 L629.4 591.8 L622.9 590.0 L616.5 588.0 L610.1 586.0 L603.9 583.8 L597.7 581.4 L591.7 579.0 L585.7 576.5 L579.9 573.9 L574.1 571.2 L568.5 568.4 L562.9 565.6 L557.4 562.7 L552.0 559.7 L546.6 556.6 L541.4 553.5 L536.3 550.2 L531.3 546.9 L526.4 543.5 L521.7 540.0 L517.2 536.4 L512.9 532.7 L508.7 528.9 L504.7 525.1 L500.8 521.1 L497.1 517.2 L493.4 513.2 L489.7 509.1 L486.1 505.1 L482.6 501.0 L479.0 496.8 L475.6 492.6 L472.2 488.4 L469.0 484.1 L465.9 479.7 L463.0 475.2 L460.3 470.7 L457.8 466.1 L455.6 461.5 L453.6 456.8 L451.9 452.0 L450.6 447.2 L449.6 442.3 L448.9 437.4 L448.5 432.5 L448.4 427.6 L448.5 422.7 L448.8 417.8 L449.2 412.9 L449.8 408.0 L450.6 403.1 L451.5 398.2 L452.6 393.4 L453.8 388.5 L455.3 383.6 L457.0 378.8 L458.9 374.0 L461.0 369.2 L463.3 364.5 L465.8 359.8 L468.6 355.2 L471.7 350.6 L475.0 346.1 L478.5 341.7 L482.2 337.3 L486.2 333.1 L490.4 328.9 L494.8 324.8 L499.4 320.9 L504.2 317.0 L509.1 313.2 L514.2 309.5 L519.5 305.9 L524.9 302.4 L530.5 299.1 L536.2 295.8 L542.0 292.6 L547.9 289.5 L553.8 286.5 L559.9 283.6 L566.1 280.7 L572.3 277.9 L578.6 275.2 L585.0 272.6 L591.4 270.1 L598.0 267.6 L604.6 265.2 L611.3 262.9 L618.0 260.7 L624.9 258.6 L631.9 256.7 L638.9 254.8 L646.0 253.2 L653.2 251.6 L660.5 250.2 L667.9 248.9 L675.2 247.7 L682.7 246.7 L690.2 245.9 L697.7 245.2 L705.3 244.6 L712.9 244.2 L720.5 243.9 L728.1 243.8 L735.7 243.8 L743.3 244.0 L750.9 244.3 L758.4 244.8 L765.9 245.5 L773.4 246.3 L780.9 247.2 L788.2 248.3 L795.6 249.5 L802.8 250.8 L810.0 252.3 L817.1 253.9 L824.1 255.7 L831.1 257.5 L838.0 259.4 L844.8 261.5 L851.5 263.6 L858.1 265.8 L864.7 268.1 L871.2 270.5 L877.6 272.9 L883.9 275.4 L890.2 278.0 L896.4 280.7 L902.5 283.4 L908.5 286.3 L914.4 289.2 L920.2 292.3 L925.9 295.5 L931.4 298.7 L936.7 302.1 L941.8 305.6 L946.7 309.3 L951.4 313.0 L955.9 316.9 L960.1 320.9 L964.0 325.0 L967.7 329.2 L971.1 333.5 L974.3 337.8 L977.2 342.2 L980.0 346.7 L982.5 351.1 L984.8 355.7 L986.8 360.2 L988.6 364.8 L990.2 369.4 L991.6 374.0 L992.6 378.7 L993.5 383.3 L994.0 388.0 L994.3 392.6 L994.2 397.3 L993.9 401.9 L993.3 406.5 L992.5 411.1 L991.3 415.6 L990.0 420.1 L988.4 424.5 L986.5 428.8 L984.5 433.1 L982.3 437.3 L979.9 441.5 L977.3 445.5 L974.6 449.5 L971.8 453.4 L968.8 457.2 L965.8 461.0 L962.6 464.6 L959.4 468.2 L956.2 471.7 L952.9 475.2 L949.5 478.6 L946.1 481.9 L942.8 485.2 L939.4 488.4 L936.0 491.6 L936 600 L1029.5 540 L1029.5 700 L1030.5 699.5 L1028.8 705.2 L1026.0 710.6 L1022.2 715.6 L1017.5 720.3 L1012.1 724.7 L1006.1 728.8 L999.6 732.7 L992.7 736.2 L985.5 739.6 L978.1 742.8 L970.6 745.8 L963.1 748.8 L955.6 751.6 L948.0 754.3 L940.3 756.9 L932.6 759.4 L924.9 761.8 L917.1 764.1 L909.3 766.3 L901.4 768.3 L893.5 770.2 L885.5 772.0 L877.5 773.6 L869.5 775.1 L861.4 776.5 L853.2 777.8 L845.1 778.9 L837.0 779.8 L828.8 780.7 L820.7 781.4 L812.5 782.0 L804.4 782.5 L796.2 782.8 L788.1 783.0 L780.0 783.2 L772.0 783.1 L764.0 783.0 L756.0 782.8 L748.0 782.5 L740.1 782.0 L732.2 781.4 L724.4 780.8 L716.6 780.0 L708.8 779.1 L701.1 778.2 L693.5 777.1 L685.9 775.9 L678.4 774.6 L671.0 773.3 L663.6 771.8 L656.2 770.2 L649.0 768.6 L641.8 766.8 L634.7 765.0 L627.7 763.0 L620.8 761.0 L613.9 758.8 L607.1 756.6 L600.4 754.2 L593.9 751.8 L587.4 749.3 L581.0 746.7 L574.7 744.0 L568.5 741.2 L562.5 738.3 L556.5 735.3 L550.7 732.3 L545.0 729.1 L539.4 725.9 L534.0 722.6 L528.6 719.2 L523.5 715.7 L518.4 712.1 L513.5 708.5 L508.8 704.8 L504.2 701.0 L499.8 697.2 L495.5 693.2 L491.4 689.2 L487.5 685.2 L483.7 681.0 L480.1 676.9 L476.7 672.6 L473.5 668.3 L470.4 664.0 L467.6 659.5 L464.9 655.1 L462.4 650.6 L460.2 646.0 L458.1 641.5 L456.2 636.9 L454.6 632.2 L453.1 627.5 L451.9 622.8 L450.8 618.1 L450.0 613.4 L449.4 608.6 L449.1 603.8 L448.9 599.1 L449.0 594.3 L449.2 589.5 Z" fill="#8a867e"/>
<path d="M448.7 600.0 L449.0 604.8 L449.5 609.5 L450.2 614.2 L451.1 619.0 L452.1 623.7 L453.3 628.4 L454.7 633.0 L456.2 637.7 L457.9 642.3 L459.9 646.9 L461.9 651.5 L464.2 656.0 L466.6 660.5 L469.2 665.0 L472.0 669.4 L474.9 673.8 L478.1 678.2 L481.4 682.5 L484.8 686.7 L488.4 691.0 L492.2 695.1 L496.2 699.3 L500.3 703.3 L504.6 707.3 L509.0 711.3 L513.6 715.2 L518.4 719.0 L523.3 722.8 L528.4 726.5 L533.6 730.1 L539.0 733.6 L544.5 737.1 L550.1 740.5 L556.0 743.9 L561.9 747.1 L568.0 750.2 L574.2 753.3 L580.6 756.3 L587.1 759.2 L593.7 762.0 L600.5 764.7 L607.3 767.3 L614.3 769.9 L621.5 772.3 L628.7 774.6 L636.0 776.8 L643.5 778.9 L651.0 780.9 L658.6 782.8 L666.4 784.5 L674.2 786.2 L682.1 787.7 L690.1 789.2 L698.2 790.5 L706.4 791.6 L714.6 792.7 L722.9 793.6 L731.3 794.4 L739.7 795.1 L748.1 795.7 L756.7 796.1 L765.2 796.4 L773.8 796.5 L782.4 796.5 L791.1 796.4 L799.7 796.2 L808.4 795.8 L817.1 795.3 L825.8 794.6 L834.5 793.8 L843.2 792.9 L851.9 791.8 L860.5 790.6 L869.2 789.2 L877.8 787.8 L886.3 786.1 L894.9 784.4 L903.3 782.4 L911.7 780.4 L920.1 778.1 L928.3 775.7 L936.4 773.1 L944.4 770.4 L952.3 767.5 L960.0 764.4 L967.5 761.2 L974.8 757.7 L981.9 754.1 L988.7 750.3 L995.2 746.3 L1001.3 742.1 L1007.0 737.7 L1012.3 733.0 L1017.1 728.2 L1021.3 723.1 L1024.8 717.8 L1027.7 712.4 L1029.9 706.7 L1031.2 700.9 L1030.3 690 L1030.5 699.5 L1028.8 705.2 L1026.0 710.6 L1022.2 715.6 L1017.5 720.3 L1012.1 724.7 L1006.1 728.8 L999.6 732.7 L992.7 736.2 L985.5 739.6 L978.1 742.8 L970.6 745.8 L963.1 748.8 L955.6 751.6 L948.0 754.3 L940.3 756.9 L932.6 759.4 L924.9 761.8 L917.1 764.1 L909.3 766.3 L901.4 768.3 L893.5 770.2 L885.5 772.0 L877.5 773.6 L869.5 775.1 L861.4 776.5 L853.2 777.8 L845.1 778.9 L837.0 779.8 L828.8 780.7 L820.7 781.4 L812.5 782.0 L804.4 782.5 L796.2 782.8 L788.1 783.0 L780.0 783.2 L772.0 783.1 L764.0 783.0 L756.0 782.8 L748.0 782.5 L740.1 782.0 L732.2 781.4 L724.4 780.8 L716.6 780.0 L708.8 779.1 L701.1 778.2 L693.5 777.1 L685.9 775.9 L678.4 774.6 L671.0 773.3 L663.6 771.8 L656.2 770.2 L649.0 768.6 L641.8 766.8 L634.7 765.0 L627.7 763.0 L620.8 761.0 L613.9 758.8 L607.1 756.6 L600.4 754.2 L593.9 751.8 L587.4 749.3 L581.0 746.7 L574.7 744.0 L568.5 741.2 L562.5 738.3 L556.5 735.3 L550.7 732.3 L545.0 729.1 L539.4 725.9 L534.0 722.6 L528.6 719.2 L523.5 715.7 L518.4 712.1 L513.5 708.5 L508.8 704.8 L504.2 701.0 L499.8 697.2 L495.5 693.2 L491.4 689.2 L487.5 685.2 L483.7 681.0 L480.1 676.9 L476.7 672.6 L473.5 668.3 L470.4 664.0 L467.6 659.5 L464.9 655.1 L462.4 650.6 L460.2 646.0 L458.1 641.5 L456.2 636.9 L454.6 632.2 L453.1 627.5 L451.9 622.8 L450.8 618.1 L450.0 613.4 L449.4 608.6 L449.1 603.8 L448.9 599.1 L449.0 594.3 L449.2 589.5 L448.8 589.5 Z" fill="url(#gBase)"/>
<path d="M448.4 427.6 L448.5 422.7 L448.8 417.8 L449.2 412.9 L449.8 408.0 L450.6 403.1 L451.5 398.2 L452.6 393.4 L453.8 388.5 L455.3 383.6 L457.0 378.8 L458.9 374.0 L461.0 369.2 L463.3 364.5 L465.8 359.8 L468.6 355.2 L471.7 350.6 L475.0 346.1 L478.5 341.7 L482.2 337.3 L486.2 333.1 L490.4 328.9 L494.8 324.8 L499.4 320.9 L504.2 317.0 L509.1 313.2 L514.2 309.5 L519.5 305.9 L524.9 302.4 L530.5 299.1 L536.2 295.8 L542.0 292.6 L547.9 289.5 L553.8 286.5 L559.9 283.6 L566.1 280.7 L572.3 277.9 L578.6 275.2 L585.0 272.6 L591.4 270.1 L598.0 267.6 L604.6 265.2 L611.3 262.9 L618.0 260.7 L624.9 258.6 L631.9 256.7 L638.9 254.8 L646.0 253.2 L653.2 251.6 L660.5 250.2 L667.9 248.9 L675.2 247.7 L682.7 246.7 L690.2 245.9 L697.7 245.2 L705.3 244.6 L712.9 244.2 L720.5 243.9 L728.1 243.8 L735.7 243.8 L743.3 244.0 L750.9 244.3 L758.4 244.8 L765.9 245.5 L773.4 246.3 L780.9 247.2 L788.2 248.3 L795.6 249.5 L802.8 250.8 L810.0 252.3 L817.1 253.9 L824.1 255.7 L831.1 257.5 L838.0 259.4 L844.8 261.5 L851.5 263.6 L858.1 265.8 L864.7 268.1 L871.2 270.5 L877.6 272.9 L883.9 275.4 L890.2 278.0 L896.4 280.7 L902.5 283.4 L908.5 286.3 L914.4 289.2 L920.2 292.3 L925.9 295.5 L931.4 298.7 L936.7 302.1 L941.8 305.6 L946.7 309.3 L951.4 313.0 L955.9 316.9 L960.1 320.9 L964.0 325.0 L967.7 329.2 L971.1 333.5 L974.3 337.8 L977.2 342.2 L980.0 346.7 L982.5 351.1 L984.8 355.7 L986.8 360.2 L988.6 364.8 L990.2 369.4 L991.6 374.0 L992.6 378.7 L993.5 383.3 L994.0 388.0 L994.3 392.6 L994.2 397.3 L993.9 401.9 L993.3 406.5 L992.5 411.1 L991.3 415.6 L990.0 420.1 L988.4 424.5 L986.5 428.8 L984.5 433.1 L982.3 437.3 L979.9 441.5 L977.3 445.5 L974.6 449.5 L971.8 453.4 L968.8 457.2 L965.8 461.0 L962.6 464.6 L959.4 468.2 L956.2 471.7 L952.9 475.2 L949.5 478.6 L946.1 481.9 L942.8 485.2 L939.4 488.4 L936.0 491.6 L936.1 491.6 L917.6 501.5 L874.6 518.5 L815.0 535.3 L743.3 542.3 L671.6 536.5 L610.7 527.0 L600 575 L520 560 L470 520 Z" fill="url(#gBack)"/>
<path d="M448.4 427.6 L448.5 422.7 L448.8 417.8 L449.2 412.9 L449.8 408.0 L450.6 403.1 L451.5 398.2 L452.6 393.4 L453.8 388.5 L455.3 383.6 L457.0 378.8 L458.9 374.0 L461.0 369.2 L463.3 364.5 L465.8 359.8 L468.6 355.2 L471.7 350.6 L475.0 346.1 L478.5 341.7 L482.2 337.3 L486.2 333.1 L490.4 328.9 L494.8 324.8 L499.4 320.9 L504.2 317.0 L509.1 313.2 L514.2 309.5 L519.5 305.9 L524.9 302.4 L530.5 299.1 L536.2 295.8 L542.0 292.6 L547.9 289.5 L553.8 286.5 L559.9 283.6 L566.1 280.7 L572.3 277.9 L578.6 275.2 L585.0 272.6 L591.4 270.1 L598.0 267.6 L604.6 265.2 L611.3 262.9 L618.0 260.7 L624.9 258.6 L631.9 256.7 L638.9 254.8 L646.0 253.2 L653.2 251.6 L660.5 250.2 L667.9 248.9 L675.2 247.7 L682.7 246.7 L690.2 245.9 L697.7 245.2 L705.3 244.6 L712.9 244.2 L720.5 243.9 L728.1 243.8 L735.7 243.8 L743.3 244.0 L750.9 244.3 L758.4 244.8 L765.9 245.5 L773.4 246.3 L780.9 247.2 L788.2 248.3 L795.6 249.5 L802.8 250.8 L810.0 252.3 L817.1 253.9 L824.1 255.7 L831.1 257.5 L838.0 259.4 L844.8 261.5 L851.5 263.6 L858.1 265.8 L864.7 268.1 L871.2 270.5 L877.6 272.9 L883.9 275.4 L890.2 278.0 L896.4 280.7 L902.5 283.4 L908.5 286.3 L914.4 289.2 L920.2 292.3 L925.9 295.5 L931.4 298.7 L936.7 302.1 L941.8 305.6 L946.7 309.3 L951.4 313.0 L955.9 316.9 L960.1 320.9 L964.0 325.0 L967.7 329.2 L971.1 333.5 L974.3 337.8 L977.2 342.2 L980.0 346.7 L982.5 351.1 L984.8 355.7 L986.8 360.2 L988.6 364.8 L990.2 369.4 L991.6 374.0 L992.6 378.7 L993.5 383.3 L994.0 388.0 L994.3 392.6 L994.2 397.3 L993.9 401.9 L993.3 406.5 L992.5 411.1 L991.3 415.6 L990.0 420.1 L988.4 424.5 L986.5 428.8 L984.5 433.1 L982.3 437.3 L979.9 441.5 L977.3 445.5 L974.6 449.5 L971.8 453.4 L968.8 457.2 L965.8 461.0 L962.6 464.6 L959.4 468.2 L956.2 471.7 L952.9 475.2 L949.5 478.6 L946.1 481.9 L942.8 485.2 L939.4 488.4 L936.0 491.6 L936.1 491.6 L917.6 501.5 L874.6 518.5 L815.0 535.3 L743.3 542.3 L671.6 536.5 L610.7 527.0 L600 575 L520 560 L470 520 Z" fill="url(#gBackV)"/>
<path d="M492.2 506.1 L494.9 503.6 L497.5 501.2 L500.2 498.8 L502.9 496.4 L505.5 494.1 L508.2 491.8 L510.9 489.5 L513.5 487.2 L516.3 484.9 L519.0 482.7 L521.8 480.5 L524.6 478.2 L527.5 476.1 L530.5 473.9 L533.5 471.7 L536.6 469.5 L539.8 467.4 L543.0 465.2 L546.4 463.1 L549.8 461.0 L553.3 458.9 L557.0 456.8 L560.8 454.8 L564.6 452.8 L568.6 450.8 L572.8 448.8 L577.0 446.9 L581.4 445.0 L586.0 443.1 L590.6 441.3 L595.4 439.5 L600.4 437.8 L605.4 436.1 L610.6 434.5 L616.0 433.0 L621.5 431.5 L627.1 430.1 L632.8 428.7 L638.7 427.4 L644.7 426.2 L650.8 425.1 L656.9 424.1 L663.2 423.2 L669.6 422.3 L676.0 421.6 L682.5 420.9 L689.0 420.3 L695.6 419.8 L702.3 419.4 L709.0 419.0 L715.7 418.8 L722.4 418.6 L729.1 418.6 L735.8 418.6 L742.5 418.7 L749.2 418.9 L755.9 419.2 L762.6 419.6 L769.2 420.0 L775.7 420.6 L782.2 421.2 L788.7 421.9 L795.0 422.6 L801.4 423.5 L807.6 424.4 L813.7 425.4 L819.8 426.5 L825.8 427.6 L831.6 428.9 L837.4 430.1 L843.0 431.5 L848.5 432.9 L853.9 434.4 L859.2 435.9 L864.4 437.5 L869.4 439.1 L874.3 440.8 L879.0 442.6 L883.6 444.4 L888.1 446.2 L892.4 448.1 L896.6 450.0 L900.6 452.0 L904.5 454.0 L908.2 456.0 L911.7 458.1 L915.1 460.2 L918.4 462.3 L921.5 464.5 L924.4 466.7 L927.2 468.9 L929.8 471.1 L932.3 473.4 L934.6 475.6 L936.8 477.9 L938.8 480.2 L950 520 L900 570 L620 600 L490 550 Z" fill="#b4b0a6"/>
<path d="M492.7 506.6 L495.7 503.8 L498.7 501.1 L501.7 498.4 L504.7 495.7 L507.8 493.1 L510.8 490.4 L513.9 487.8 L517.1 485.2 L520.2 482.6 L523.4 480.1 L526.6 477.7 L529.8 475.2 L533.1 472.8 L536.4 470.5 L539.8 468.2 L543.2 466.0 L546.6 463.8 L550.0 461.7 L553.5 459.6 L557.1 457.6 L560.6 455.7 L564.2 453.8 L567.8 452.0 L571.5 450.2 L575.2 448.5 L578.9 446.9 L582.6 445.3 L586.3 443.8 L590.1 442.3 L593.9 440.9 L597.7 439.5 L601.6 438.2 L605.4 436.9 L609.3 435.7 L613.2 434.6 L617.1 433.5 L621.0 432.4 L624.9 431.4 L628.8 430.4 L632.8 429.5 L636.8 428.6 L640.7 427.8 L644.7 427.0 L648.7 426.3 L652.7 425.6 L656.7 424.9 L660.7 424.3 L664.7 423.7 L668.7 423.2 L672.7 422.7 L676.8 422.2 L680.8 421.8 L684.8 421.4 L688.9 421.0 L692.9 420.7 L697.0 420.4 L701.0 420.2 L705.1 420.0 L709.1 419.8 L713.2 419.6 L717.2 419.5 L721.3 419.4 L725.3 419.4 L729.4 419.3 L733.4 419.3 L737.5 419.4 L741.5 419.4 L745.6 419.5 L749.6 419.7 L753.7 419.8 L757.7 420.0 L761.8 420.3 L765.8 420.5 L769.9 420.8 L773.9 421.1 L777.9 421.5 L782.0 421.9 L786.0 422.3 L790.0 422.8 L794.1 423.3 L798.1 423.8 L802.1 424.4 L806.1 424.9 L810.1 425.6 L814.1 426.2 L818.1 427.0 L822.1 427.7 L826.1 428.5 L830.0 429.3 L834.0 430.2 L837.9 431.1 L841.9 432.0 L845.8 433.0 L849.7 434.0 L853.6 435.1 L857.5 436.2 L861.4 437.4 L865.3 438.6 L869.1 439.9 L873.0 441.2 L876.8 442.6 L880.6 444.0 L884.3 445.5 L888.1 447.1 L891.8 448.7 L895.5 450.4 L899.1 452.2 L902.7 454.0 L906.3 455.9 L909.8 457.9 L913.3 460.0 L916.7 462.2 L920.0 464.5 L923.3 466.9 L926.5 469.4 L929.6 472.0 L932.6 474.8 L935.4 477.6 L938.1 480.7" fill="none" stroke="#98958d" stroke-width="2.68"/>
<path d="M493.6 507.6 L496.6 504.9 L499.6 502.2 L502.6 499.5 L505.6 496.8 L508.6 494.1 L511.7 491.5 L514.8 488.9 L517.9 486.3 L521.0 483.8 L524.2 481.3 L527.4 478.8 L530.6 476.4 L533.9 474.1 L537.2 471.7 L540.5 469.5 L543.9 467.2 L547.3 465.1 L550.7 463.0 L554.2 460.9 L557.7 459.0 L561.2 457.0 L564.8 455.2 L568.4 453.4 L572.0 451.6 L575.7 449.9 L579.4 448.3 L583.1 446.7 L586.8 445.2 L590.6 443.7 L594.4 442.3 L598.2 440.9 L602.0 439.6 L605.8 438.4 L609.7 437.2 L613.5 436.0 L617.4 434.9 L621.3 433.9 L625.2 432.9 L629.1 431.9 L633.0 431.0 L637.0 430.1 L640.9 429.3 L644.9 428.5 L648.8 427.8 L652.8 427.1 L656.8 426.4 L660.8 425.8 L664.8 425.2 L668.8 424.7 L672.8 424.2 L676.8 423.7 L680.8 423.3 L684.8 422.9 L688.8 422.5 L692.8 422.2 L696.8 421.9 L700.9 421.7 L704.9 421.4 L708.9 421.2 L713.0 421.1 L717.0 421.0 L721.0 420.9 L725.0 420.8 L729.1 420.8 L733.1 420.8 L737.1 420.8 L741.2 420.9 L745.2 421.0 L749.2 421.1 L753.3 421.3 L757.3 421.5 L761.3 421.7 L765.3 422.0 L769.4 422.2 L773.4 422.6 L777.4 422.9 L781.4 423.3 L785.4 423.7 L789.4 424.2 L793.4 424.7 L797.4 425.2 L801.4 425.8 L805.4 426.3 L809.4 427.0 L813.4 427.6 L817.3 428.3 L821.3 429.1 L825.3 429.8 L829.2 430.7 L833.1 431.5 L837.1 432.4 L841.0 433.4 L844.9 434.3 L848.8 435.4 L852.7 436.4 L856.6 437.6 L860.4 438.7 L864.3 439.9 L868.1 441.2 L871.9 442.5 L875.7 443.9 L879.5 445.3 L883.2 446.8 L886.9 448.3 L890.6 450.0 L894.3 451.7 L897.9 453.4 L901.5 455.2 L905.1 457.2 L908.6 459.1 L912.0 461.2 L915.4 463.4 L918.8 465.6 L922.0 468.0 L925.2 470.5 L928.3 473.0 L931.3 475.7 L934.2 478.6 L936.9 481.5" fill="none" stroke="#9e9c94" stroke-width="2.68"/>
<path d="M494.6 508.6 L497.6 505.9 L500.5 503.2 L503.5 500.5 L506.5 497.8 L509.5 495.2 L512.6 492.6 L515.6 490.0 L518.7 487.5 L521.8 484.9 L525.0 482.5 L528.2 480.0 L531.4 477.6 L534.6 475.3 L537.9 473.0 L541.2 470.7 L544.6 468.5 L548.0 466.4 L551.4 464.3 L554.8 462.2 L558.3 460.3 L561.9 458.4 L565.4 456.5 L569.0 454.7 L572.6 453.0 L576.3 451.3 L579.9 449.7 L583.6 448.1 L587.3 446.6 L591.1 445.1 L594.8 443.7 L598.6 442.4 L602.4 441.1 L606.2 439.8 L610.0 438.6 L613.9 437.5 L617.7 436.4 L621.6 435.3 L625.5 434.3 L629.4 433.4 L633.3 432.4 L637.2 431.6 L641.1 430.8 L645.0 430.0 L649.0 429.3 L652.9 428.6 L656.9 427.9 L660.9 427.3 L664.8 426.7 L668.8 426.2 L672.8 425.7 L676.8 425.2 L680.8 424.8 L684.7 424.4 L688.7 424.0 L692.7 423.7 L696.7 423.4 L700.7 423.2 L704.7 422.9 L708.7 422.7 L712.8 422.6 L716.8 422.4 L720.8 422.3 L724.8 422.3 L728.8 422.3 L732.8 422.3 L736.8 422.3 L740.8 422.3 L744.8 422.4 L748.8 422.6 L752.8 422.7 L756.8 422.9 L760.9 423.1 L764.9 423.4 L768.9 423.7 L772.9 424.0 L776.8 424.4 L780.8 424.7 L784.8 425.2 L788.8 425.6 L792.8 426.1 L796.8 426.6 L800.7 427.2 L804.7 427.7 L808.7 428.4 L812.6 429.0 L816.6 429.7 L820.5 430.5 L824.5 431.2 L828.4 432.0 L832.3 432.9 L836.2 433.8 L840.1 434.7 L844.0 435.7 L847.9 436.7 L851.7 437.8 L855.6 438.9 L859.4 440.0 L863.3 441.2 L867.1 442.5 L870.9 443.8 L874.6 445.2 L878.4 446.6 L882.1 448.1 L885.8 449.6 L889.5 451.2 L893.1 452.9 L896.7 454.6 L900.3 456.5 L903.8 458.4 L907.3 460.3 L910.8 462.4 L914.2 464.5 L917.5 466.8 L920.7 469.1 L923.9 471.5 L927.0 474.1 L930.0 476.7 L932.9 479.5 L935.6 482.4" fill="none" stroke="#a4a29a" stroke-width="2.68"/>
<path d="M495.6 509.6 L498.5 506.9 L501.4 504.2 L504.4 501.6 L507.4 498.9 L510.4 496.3 L513.4 493.7 L516.5 491.1 L519.5 488.6 L522.6 486.1 L525.8 483.6 L528.9 481.2 L532.1 478.8 L535.4 476.5 L538.6 474.2 L541.9 471.9 L545.3 469.8 L548.6 467.6 L552.1 465.6 L555.5 463.5 L559.0 461.6 L562.5 459.7 L566.0 457.8 L569.6 456.1 L573.2 454.3 L576.8 452.7 L580.5 451.1 L584.1 449.5 L587.8 448.0 L591.5 446.5 L595.3 445.2 L599.0 443.8 L602.8 442.5 L606.6 441.3 L610.4 440.1 L614.2 438.9 L618.1 437.8 L621.9 436.8 L625.8 435.8 L629.6 434.8 L633.5 433.9 L637.4 433.1 L641.3 432.3 L645.2 431.5 L649.1 430.7 L653.1 430.1 L657.0 429.4 L660.9 428.8 L664.9 428.2 L668.8 427.7 L672.8 427.2 L676.8 426.7 L680.7 426.3 L684.7 425.9 L688.7 425.5 L692.6 425.2 L696.6 424.9 L700.6 424.6 L704.6 424.4 L708.6 424.2 L712.6 424.0 L716.5 423.9 L720.5 423.8 L724.5 423.8 L728.5 423.7 L732.5 423.7 L736.5 423.7 L740.5 423.8 L744.5 423.9 L748.4 424.0 L752.4 424.2 L756.4 424.4 L760.4 424.6 L764.4 424.8 L768.3 425.1 L772.3 425.4 L776.3 425.8 L780.3 426.2 L784.2 426.6 L788.2 427.0 L792.2 427.5 L796.1 428.0 L800.1 428.6 L804.0 429.1 L807.9 429.8 L811.9 430.4 L815.8 431.1 L819.7 431.8 L823.6 432.6 L827.5 433.4 L831.4 434.3 L835.3 435.1 L839.2 436.1 L843.1 437.0 L846.9 438.1 L850.8 439.1 L854.6 440.2 L858.4 441.4 L862.2 442.6 L866.0 443.8 L869.8 445.1 L873.5 446.5 L877.3 447.9 L881.0 449.4 L884.7 450.9 L888.3 452.5 L891.9 454.1 L895.5 455.9 L899.1 457.7 L902.6 459.6 L906.1 461.5 L909.5 463.6 L912.9 465.7 L916.2 467.9 L919.5 470.2 L922.6 472.6 L925.7 475.1 L928.7 477.7 L931.6 480.4 L934.4 483.2" fill="none" stroke="#aaa8a0" stroke-width="2.68"/>
<path d="M496.5 510.6 L499.4 507.9 L502.4 505.3 L505.3 502.6 L508.3 500.0 L511.3 497.4 L514.3 494.8 L517.3 492.2 L520.4 489.7 L523.5 487.2 L526.6 484.8 L529.7 482.4 L532.9 480.0 L536.1 477.7 L539.4 475.4 L542.7 473.2 L546.0 471.0 L549.3 468.9 L552.7 466.8 L556.2 464.8 L559.6 462.9 L563.1 461.0 L566.6 459.2 L570.2 457.4 L573.8 455.7 L577.4 454.0 L581.0 452.4 L584.6 450.9 L588.3 449.4 L592.0 448.0 L595.7 446.6 L599.5 445.2 L603.2 444.0 L607.0 442.7 L610.8 441.5 L614.6 440.4 L618.4 439.3 L622.2 438.3 L626.0 437.3 L629.9 436.3 L633.8 435.4 L637.6 434.6 L641.5 433.7 L645.4 433.0 L649.3 432.2 L653.2 431.5 L657.1 430.9 L661.0 430.3 L665.0 429.7 L668.9 429.2 L672.8 428.7 L676.8 428.2 L680.7 427.8 L684.7 427.4 L688.6 427.0 L692.6 426.7 L696.5 426.4 L700.5 426.1 L704.4 425.9 L708.4 425.7 L712.4 425.5 L716.3 425.4 L720.3 425.3 L724.2 425.2 L728.2 425.2 L732.2 425.2 L736.1 425.2 L740.1 425.3 L744.1 425.4 L748.0 425.5 L752.0 425.6 L756.0 425.8 L759.9 426.0 L763.9 426.3 L767.8 426.6 L771.8 426.9 L775.7 427.2 L779.7 427.6 L783.6 428.0 L787.6 428.4 L791.5 428.9 L795.5 429.4 L799.4 430.0 L803.3 430.5 L807.2 431.2 L811.1 431.8 L815.0 432.5 L818.9 433.2 L822.8 434.0 L826.7 434.8 L830.6 435.6 L834.5 436.5 L838.3 437.4 L842.2 438.4 L846.0 439.4 L849.8 440.5 L853.6 441.6 L857.4 442.7 L861.2 443.9 L865.0 445.1 L868.7 446.4 L872.5 447.8 L876.2 449.2 L879.9 450.6 L883.5 452.2 L887.2 453.7 L890.8 455.4 L894.3 457.1 L897.9 458.9 L901.4 460.8 L904.8 462.7 L908.2 464.8 L911.6 466.9 L914.9 469.0 L918.2 471.3 L921.3 473.7 L924.4 476.1 L927.4 478.7 L930.3 481.3 L933.1 484.1" fill="none" stroke="#aeaca4" stroke-width="2.68"/>
<path d="M497.5 511.7 L500.4 509.0 L503.3 506.3 L506.2 503.7 L509.2 501.0 L512.1 498.5 L515.1 495.9 L518.1 493.3 L521.2 490.8 L524.3 488.4 L527.4 485.9 L530.5 483.5 L533.7 481.2 L536.9 478.9 L540.1 476.6 L543.4 474.4 L546.7 472.3 L550.0 470.2 L553.4 468.1 L556.8 466.2 L560.3 464.2 L563.7 462.3 L567.2 460.5 L570.8 458.8 L574.3 457.1 L577.9 455.4 L581.5 453.8 L585.1 452.3 L588.8 450.8 L592.5 449.4 L596.2 448.0 L599.9 446.7 L603.6 445.4 L607.4 444.2 L611.1 443.0 L614.9 441.9 L618.7 440.8 L622.5 439.7 L626.3 438.8 L630.2 437.8 L634.0 436.9 L637.8 436.0 L641.7 435.2 L645.6 434.4 L649.5 433.7 L653.3 433.0 L657.2 432.4 L661.1 431.8 L665.0 431.2 L668.9 430.6 L672.8 430.1 L676.8 429.7 L680.7 429.2 L684.6 428.8 L688.5 428.5 L692.5 428.2 L696.4 427.9 L700.3 427.6 L704.3 427.4 L708.2 427.2 L712.2 427.0 L716.1 426.9 L720.0 426.8 L724.0 426.7 L727.9 426.6 L731.9 426.6 L735.8 426.7 L739.8 426.7 L743.7 426.8 L747.6 426.9 L751.6 427.1 L755.5 427.3 L759.5 427.5 L763.4 427.7 L767.3 428.0 L771.3 428.3 L775.2 428.6 L779.1 429.0 L783.1 429.4 L787.0 429.9 L790.9 430.3 L794.8 430.8 L798.7 431.4 L802.6 431.9 L806.5 432.6 L810.4 433.2 L814.3 433.9 L818.2 434.6 L822.0 435.4 L825.9 436.2 L829.8 437.0 L833.6 437.9 L837.4 438.8 L841.3 439.7 L845.1 440.7 L848.9 441.8 L852.7 442.9 L856.4 444.0 L860.2 445.2 L864.0 446.4 L867.7 447.7 L871.4 449.1 L875.1 450.5 L878.8 451.9 L882.4 453.4 L886.0 455.0 L889.6 456.6 L893.1 458.4 L896.7 460.1 L900.1 462.0 L903.6 463.9 L907.0 465.9 L910.3 468.0 L913.6 470.2 L916.9 472.4 L920.0 474.7 L923.1 477.1 L926.2 479.6 L929.1 482.2 L931.9 484.9" fill="none" stroke="#b3b1a9" stroke-width="2.68"/>
<path d="M498.5 512.7 L501.3 510.0 L504.2 507.3 L507.1 504.7 L510.1 502.1 L513.0 499.5 L516.0 497.0 L519.0 494.4 L522.0 492.0 L525.1 489.5 L528.2 487.1 L531.3 484.7 L534.4 482.4 L537.6 480.1 L540.9 477.9 L544.1 475.7 L547.4 473.5 L550.7 471.4 L554.1 469.4 L557.5 467.5 L560.9 465.5 L564.4 463.7 L567.8 461.9 L571.4 460.1 L574.9 458.4 L578.5 456.8 L582.0 455.2 L585.7 453.7 L589.3 452.2 L592.9 450.8 L596.6 449.4 L600.3 448.1 L604.0 446.8 L607.8 445.6 L611.5 444.4 L615.3 443.3 L619.0 442.2 L622.8 441.2 L626.6 440.2 L630.4 439.3 L634.2 438.4 L638.1 437.5 L641.9 436.7 L645.7 435.9 L649.6 435.2 L653.5 434.5 L657.3 433.9 L661.2 433.3 L665.1 432.7 L669.0 432.1 L672.9 431.6 L676.8 431.2 L680.7 430.7 L684.6 430.3 L688.5 430.0 L692.4 429.6 L696.3 429.3 L700.2 429.1 L704.1 428.8 L708.0 428.6 L712.0 428.5 L715.9 428.3 L719.8 428.2 L723.7 428.2 L727.6 428.1 L731.6 428.1 L735.5 428.1 L739.4 428.2 L743.3 428.3 L747.2 428.4 L751.2 428.5 L755.1 428.7 L759.0 428.9 L762.9 429.2 L766.8 429.4 L770.7 429.7 L774.7 430.1 L778.6 430.4 L782.5 430.8 L786.4 431.3 L790.3 431.7 L794.1 432.3 L798.0 432.8 L801.9 433.4 L805.8 434.0 L809.7 434.6 L813.5 435.3 L817.4 436.0 L821.2 436.7 L825.1 437.5 L828.9 438.4 L832.7 439.2 L836.5 440.1 L840.3 441.1 L844.1 442.1 L847.9 443.1 L851.7 444.2 L855.5 445.3 L859.2 446.5 L862.9 447.7 L866.6 449.0 L870.3 450.4 L874.0 451.8 L877.6 453.2 L881.3 454.7 L884.9 456.3 L888.4 457.9 L892.0 459.6 L895.5 461.4 L898.9 463.2 L902.3 465.1 L905.7 467.1 L909.1 469.2 L912.3 471.3 L915.6 473.5 L918.8 475.8 L921.9 478.2 L924.9 480.6 L927.8 483.1 L930.6 485.8" fill="none" stroke="#b7b5ae" stroke-width="2.68"/>
<path d="M499.4 513.7 L502.3 511.0 L505.1 508.4 L508.0 505.8 L511.0 503.2 L513.9 500.6 L516.9 498.1 L519.8 495.6 L522.9 493.1 L525.9 490.6 L529.0 488.2 L532.1 485.9 L535.2 483.6 L538.4 481.3 L541.6 479.1 L544.8 476.9 L548.1 474.8 L551.4 472.7 L554.8 470.7 L558.1 468.8 L561.5 466.9 L565.0 465.0 L568.4 463.2 L571.9 461.5 L575.5 459.8 L579.0 458.2 L582.6 456.6 L586.2 455.1 L589.8 453.6 L593.4 452.2 L597.1 450.9 L600.8 449.5 L604.4 448.3 L608.1 447.1 L611.9 445.9 L615.6 444.8 L619.4 443.7 L623.1 442.7 L626.9 441.7 L630.7 440.8 L634.5 439.9 L638.3 439.0 L642.1 438.2 L645.9 437.4 L649.8 436.7 L653.6 436.0 L657.4 435.4 L661.3 434.7 L665.2 434.2 L669.0 433.6 L672.9 433.1 L676.8 432.7 L680.6 432.2 L684.5 431.8 L688.4 431.5 L692.3 431.1 L696.2 430.8 L700.1 430.6 L704.0 430.3 L707.9 430.1 L711.8 429.9 L715.7 429.8 L719.5 429.7 L723.4 429.6 L727.4 429.6 L731.3 429.6 L735.2 429.6 L739.1 429.6 L743.0 429.7 L746.9 429.8 L750.8 430.0 L754.6 430.1 L758.5 430.3 L762.4 430.6 L766.3 430.9 L770.2 431.2 L774.1 431.5 L778.0 431.9 L781.9 432.3 L785.7 432.7 L789.6 433.2 L793.5 433.7 L797.4 434.2 L801.2 434.8 L805.1 435.4 L808.9 436.0 L812.8 436.7 L816.6 437.4 L820.4 438.1 L824.2 438.9 L828.1 439.7 L831.9 440.6 L835.7 441.5 L839.4 442.5 L843.2 443.4 L847.0 444.5 L850.7 445.6 L854.5 446.7 L858.2 447.8 L861.9 449.1 L865.6 450.3 L869.2 451.7 L872.9 453.0 L876.5 454.5 L880.1 456.0 L883.7 457.5 L887.2 459.1 L890.8 460.8 L894.2 462.6 L897.7 464.4 L901.1 466.3 L904.5 468.3 L907.8 470.3 L911.1 472.4 L914.3 474.6 L917.5 476.9 L920.6 479.2 L923.6 481.6 L926.5 484.1 L929.4 486.6" fill="none" stroke="#bcbab3" stroke-width="2.68"/>
<path d="M500.4 514.7 L503.2 512.1 L506.1 509.4 L508.9 506.8 L511.8 504.2 L514.8 501.7 L517.7 499.2 L520.7 496.7 L523.7 494.2 L526.7 491.8 L529.8 489.4 L532.9 487.1 L536.0 484.8 L539.1 482.5 L542.3 480.3 L545.6 478.2 L548.8 476.0 L552.1 474.0 L555.4 472.0 L558.8 470.1 L562.2 468.2 L565.6 466.3 L569.0 464.6 L572.5 462.8 L576.0 461.2 L579.6 459.6 L583.1 458.0 L586.7 456.5 L590.3 455.0 L593.9 453.6 L597.5 452.3 L601.2 451.0 L604.9 449.7 L608.5 448.5 L612.2 447.4 L616.0 446.2 L619.7 445.2 L623.4 444.1 L627.2 443.2 L630.9 442.2 L634.7 441.3 L638.5 440.5 L642.3 439.7 L646.1 438.9 L649.9 438.2 L653.7 437.5 L657.6 436.8 L661.4 436.2 L665.2 435.7 L669.1 435.1 L672.9 434.6 L676.8 434.1 L680.6 433.7 L684.5 433.3 L688.3 432.9 L692.2 432.6 L696.1 432.3 L699.9 432.0 L703.8 431.8 L707.7 431.6 L711.6 431.4 L715.4 431.3 L719.3 431.2 L723.2 431.1 L727.1 431.0 L730.9 431.0 L734.8 431.0 L738.7 431.1 L742.6 431.2 L746.5 431.3 L750.3 431.4 L754.2 431.6 L758.1 431.8 L762.0 432.0 L765.8 432.3 L769.7 432.6 L773.6 432.9 L777.4 433.3 L781.3 433.7 L785.1 434.1 L789.0 434.6 L792.8 435.1 L796.7 435.6 L800.5 436.2 L804.3 436.8 L808.2 437.4 L812.0 438.1 L815.8 438.8 L819.6 439.5 L823.4 440.3 L827.2 441.1 L831.0 442.0 L834.8 442.9 L838.5 443.8 L842.3 444.8 L846.0 445.8 L849.7 446.9 L853.5 448.0 L857.2 449.2 L860.8 450.4 L864.5 451.6 L868.2 453.0 L871.8 454.3 L875.4 455.8 L879.0 457.2 L882.5 458.8 L886.1 460.4 L889.6 462.1 L893.0 463.8 L896.5 465.6 L899.8 467.5 L903.2 469.5 L906.5 471.5 L909.8 473.6 L913.0 475.7 L916.2 477.9 L919.3 480.2 L922.3 482.6 L925.3 485.0 L928.1 487.5" fill="none" stroke="#b8b5ae" stroke-width="2.68"/>
<path d="M501.4 515.7 L504.2 513.1 L507.0 510.5 L509.9 507.9 L512.7 505.3 L515.6 502.8 L518.6 500.3 L521.5 497.8 L524.5 495.3 L527.5 492.9 L530.6 490.6 L533.6 488.2 L536.8 486.0 L539.9 483.7 L543.1 481.5 L546.3 479.4 L549.5 477.3 L552.8 475.3 L556.1 473.3 L559.5 471.4 L562.8 469.5 L566.2 467.7 L569.7 465.9 L573.1 464.2 L576.6 462.5 L580.1 460.9 L583.6 459.4 L587.2 457.9 L590.8 456.4 L594.4 455.1 L598.0 453.7 L601.6 452.4 L605.3 451.2 L608.9 450.0 L612.6 448.8 L616.3 447.7 L620.0 446.6 L623.7 445.6 L627.5 444.6 L631.2 443.7 L635.0 442.8 L638.7 442.0 L642.5 441.2 L646.3 440.4 L650.1 439.7 L653.9 439.0 L657.7 438.3 L661.5 437.7 L665.3 437.2 L669.1 436.6 L672.9 436.1 L676.8 435.6 L680.6 435.2 L684.4 434.8 L688.3 434.4 L692.1 434.1 L696.0 433.8 L699.8 433.5 L703.6 433.3 L707.5 433.1 L711.4 432.9 L715.2 432.8 L719.1 432.6 L722.9 432.6 L726.8 432.5 L730.6 432.5 L734.5 432.5 L738.3 432.5 L742.2 432.6 L746.1 432.7 L749.9 432.9 L753.8 433.0 L757.6 433.2 L761.5 433.5 L765.3 433.7 L769.2 434.0 L773.0 434.4 L776.8 434.7 L780.7 435.1 L784.5 435.5 L788.3 436.0 L792.2 436.5 L796.0 437.0 L799.8 437.6 L803.6 438.2 L807.4 438.8 L811.2 439.4 L815.0 440.1 L818.8 440.9 L822.6 441.7 L826.4 442.5 L830.1 443.3 L833.9 444.2 L837.6 445.2 L841.3 446.1 L845.1 447.2 L848.8 448.2 L852.5 449.3 L856.1 450.5 L859.8 451.7 L863.5 452.9 L867.1 454.3 L870.7 455.6 L874.3 457.0 L877.8 458.5 L881.4 460.0 L884.9 461.6 L888.4 463.3 L891.8 465.1 L895.2 466.9 L898.6 468.7 L901.9 470.7 L905.2 472.7 L908.5 474.7 L911.7 476.8 L914.9 479.0 L918.0 481.2 L921.0 483.5 L924.0 485.9 L926.9 488.3" fill="none" stroke="#b0ada5" stroke-width="2.68"/>
<path d="M502.3 516.7 L505.1 514.1 L507.9 511.5 L510.8 508.9 L513.6 506.4 L516.5 503.8 L519.4 501.4 L522.4 498.9 L525.3 496.5 L528.3 494.1 L531.4 491.7 L534.4 489.4 L537.5 487.2 L540.7 484.9 L543.8 482.8 L547.0 480.6 L550.2 478.6 L553.5 476.5 L556.8 474.6 L560.1 472.7 L563.5 470.8 L566.8 469.0 L570.3 467.3 L573.7 465.6 L577.2 463.9 L580.7 462.3 L584.2 460.8 L587.7 459.3 L591.3 457.9 L594.8 456.5 L598.4 455.1 L602.0 453.8 L605.7 452.6 L609.3 451.4 L613.0 450.3 L616.7 449.2 L620.3 448.1 L624.0 447.1 L627.7 446.1 L631.5 445.2 L635.2 444.3 L638.9 443.5 L642.7 442.7 L646.4 441.9 L650.2 441.2 L654.0 440.5 L657.8 439.8 L661.6 439.2 L665.3 438.6 L669.1 438.1 L672.9 437.6 L676.8 437.1 L680.6 436.7 L684.4 436.3 L688.2 435.9 L692.0 435.6 L695.8 435.3 L699.7 435.0 L703.5 434.8 L707.3 434.5 L711.2 434.4 L715.0 434.2 L718.8 434.1 L722.7 434.0 L726.5 434.0 L730.3 433.9 L734.2 434.0 L738.0 434.0 L741.8 434.1 L745.7 434.2 L749.5 434.3 L753.3 434.5 L757.2 434.7 L761.0 434.9 L764.8 435.2 L768.6 435.4 L772.5 435.8 L776.3 436.1 L780.1 436.5 L783.9 436.9 L787.7 437.4 L791.5 437.9 L795.3 438.4 L799.1 439.0 L802.9 439.6 L806.7 440.2 L810.5 440.8 L814.2 441.5 L818.0 442.3 L821.8 443.0 L825.5 443.8 L829.2 444.7 L833.0 445.6 L836.7 446.5 L840.4 447.5 L844.1 448.5 L847.8 449.6 L851.5 450.7 L855.1 451.8 L858.8 453.0 L862.4 454.2 L866.0 455.6 L869.6 456.9 L873.2 458.3 L876.7 459.8 L880.2 461.3 L883.7 462.9 L887.2 464.6 L890.6 466.3 L894.0 468.1 L897.4 469.9 L900.7 471.8 L904.0 473.8 L907.2 475.8 L910.4 477.9 L913.6 480.1 L916.7 482.3 L919.7 484.5 L922.7 486.8 L925.6 489.2" fill="none" stroke="#a8a59d" stroke-width="2.68"/>
<path d="M503.3 517.8 L506.1 515.1 L508.8 512.5 L511.7 510.0 L514.5 507.4 L517.4 504.9 L520.3 502.4 L523.2 500.0 L526.2 497.6 L529.1 495.2 L532.2 492.9 L535.2 490.6 L538.3 488.3 L541.4 486.1 L544.6 484.0 L547.7 481.9 L550.9 479.8 L554.2 477.8 L557.5 475.9 L560.8 474.0 L564.1 472.1 L567.5 470.3 L570.9 468.6 L574.3 466.9 L577.7 465.3 L581.2 463.7 L584.7 462.2 L588.2 460.7 L591.8 459.3 L595.3 457.9 L598.9 456.6 L602.5 455.3 L606.1 454.0 L609.7 452.9 L613.3 451.7 L617.0 450.6 L620.7 449.6 L624.3 448.6 L628.0 447.6 L631.7 446.7 L635.4 445.8 L639.2 444.9 L642.9 444.1 L646.6 443.4 L650.4 442.7 L654.1 442.0 L657.9 441.3 L661.6 440.7 L665.4 440.1 L669.2 439.6 L673.0 439.1 L676.8 438.6 L680.5 438.2 L684.3 437.8 L688.1 437.4 L691.9 437.1 L695.7 436.8 L699.5 436.5 L703.3 436.2 L707.1 436.0 L711.0 435.8 L714.8 435.7 L718.6 435.6 L722.4 435.5 L726.2 435.4 L730.0 435.4 L733.8 435.4 L737.6 435.4 L741.5 435.5 L745.3 435.6 L749.1 435.8 L752.9 435.9 L756.7 436.1 L760.5 436.3 L764.3 436.6 L768.1 436.9 L771.9 437.2 L775.7 437.6 L779.5 437.9 L783.3 438.4 L787.1 438.8 L790.9 439.3 L794.6 439.8 L798.4 440.4 L802.2 440.9 L805.9 441.6 L809.7 442.2 L813.5 442.9 L817.2 443.6 L820.9 444.4 L824.7 445.2 L828.4 446.1 L832.1 446.9 L835.8 447.9 L839.5 448.8 L843.2 449.8 L846.8 450.9 L850.5 452.0 L854.1 453.1 L857.7 454.3 L861.3 455.6 L864.9 456.8 L868.5 458.2 L872.0 459.6 L875.6 461.1 L879.1 462.6 L882.5 464.1 L886.0 465.8 L889.4 467.5 L892.8 469.3 L896.1 471.1 L899.4 473.0 L902.7 475.0 L905.9 477.0 L909.1 479.0 L912.3 481.1 L915.4 483.3 L918.5 485.5 L921.5 487.7 L924.4 490.0" fill="none" stroke="#aca9a1" stroke-width="2.68"/>
<path d="M504.2 518.8 L507.0 516.2 L509.8 513.6 L512.6 511.0 L515.4 508.5 L518.3 506.0 L521.1 503.5 L524.0 501.1 L527.0 498.7 L530.0 496.4 L533.0 494.0 L536.0 491.8 L539.1 489.5 L542.2 487.4 L545.3 485.2 L548.5 483.1 L551.6 481.1 L554.9 479.1 L558.1 477.2 L561.4 475.3 L564.7 473.4 L568.1 471.7 L571.5 469.9 L574.9 468.3 L578.3 466.6 L581.8 465.1 L585.2 463.6 L588.7 462.1 L592.2 460.7 L595.8 459.3 L599.3 458.0 L602.9 456.7 L606.5 455.5 L610.1 454.3 L613.7 453.2 L617.3 452.1 L621.0 451.0 L624.6 450.0 L628.3 449.1 L632.0 448.1 L635.7 447.3 L639.4 446.4 L643.1 445.6 L646.8 444.9 L650.5 444.2 L654.3 443.5 L658.0 442.8 L661.7 442.2 L665.5 441.6 L669.2 441.1 L673.0 440.6 L676.8 440.1 L680.5 439.7 L684.3 439.3 L688.1 438.9 L691.8 438.6 L695.6 438.2 L699.4 438.0 L703.2 437.7 L707.0 437.5 L710.8 437.3 L714.5 437.2 L718.3 437.0 L722.1 437.0 L725.9 436.9 L729.7 436.9 L733.5 436.9 L737.3 436.9 L741.1 437.0 L744.9 437.1 L748.7 437.2 L752.4 437.4 L756.2 437.5 L760.0 437.8 L763.8 438.0 L767.6 438.3 L771.4 438.6 L775.1 439.0 L778.9 439.4 L782.7 439.8 L786.4 440.2 L790.2 440.7 L794.0 441.2 L797.7 441.8 L801.5 442.3 L805.2 443.0 L808.9 443.6 L812.7 444.3 L816.4 445.0 L820.1 445.8 L823.8 446.6 L827.5 447.4 L831.2 448.3 L834.9 449.2 L838.5 450.2 L842.2 451.2 L845.9 452.2 L849.5 453.3 L853.1 454.4 L856.7 455.6 L860.3 456.9 L863.9 458.1 L867.4 459.5 L870.9 460.9 L874.4 462.3 L877.9 463.8 L881.4 465.4 L884.8 467.0 L888.2 468.7 L891.5 470.5 L894.9 472.3 L898.2 474.2 L901.4 476.1 L904.6 478.1 L907.8 480.1 L911.0 482.2 L914.1 484.3 L917.2 486.5 L920.2 488.6 L923.1 490.9" fill="none" stroke="#b9b6af" stroke-width="2.68"/>
<path d="M505.2 519.8 L507.9 517.2 L510.7 514.6 L513.5 512.1 L516.3 509.6 L519.1 507.1 L522.0 504.6 L524.9 502.2 L527.8 499.8 L530.8 497.5 L533.8 495.2 L536.8 492.9 L539.8 490.7 L542.9 488.6 L546.0 486.4 L549.2 484.4 L552.4 482.3 L555.6 480.4 L558.8 478.4 L562.1 476.6 L565.4 474.8 L568.7 473.0 L572.1 471.3 L575.5 469.6 L578.9 468.0 L582.3 466.5 L585.8 465.0 L589.2 463.5 L592.7 462.1 L596.3 460.7 L599.8 459.4 L603.3 458.1 L606.9 456.9 L610.5 455.8 L614.1 454.6 L617.7 453.5 L621.3 452.5 L625.0 451.5 L628.6 450.5 L632.3 449.6 L635.9 448.7 L639.6 447.9 L643.3 447.1 L647.0 446.3 L650.7 445.6 L654.4 445.0 L658.1 444.3 L661.8 443.7 L665.5 443.1 L669.3 442.6 L673.0 442.1 L676.7 441.6 L680.5 441.2 L684.2 440.8 L688.0 440.4 L691.7 440.0 L695.5 439.7 L699.3 439.4 L703.0 439.2 L706.8 439.0 L710.6 438.8 L714.3 438.6 L718.1 438.5 L721.9 438.4 L725.6 438.4 L729.4 438.3 L733.2 438.3 L736.9 438.4 L740.7 438.4 L744.5 438.5 L748.2 438.6 L752.0 438.8 L755.8 439.0 L759.5 439.2 L763.3 439.5 L767.1 439.7 L770.8 440.1 L774.6 440.4 L778.3 440.8 L782.1 441.2 L785.8 441.6 L789.6 442.1 L793.3 442.6 L797.0 443.2 L800.7 443.7 L804.5 444.4 L808.2 445.0 L811.9 445.7 L815.6 446.4 L819.3 447.2 L823.0 448.0 L826.6 448.8 L830.3 449.7 L834.0 450.6 L837.6 451.5 L841.3 452.5 L844.9 453.6 L848.5 454.6 L852.1 455.8 L855.7 456.9 L859.2 458.2 L862.8 459.4 L866.3 460.8 L869.8 462.2 L873.3 463.6 L876.8 465.1 L880.2 466.6 L883.6 468.3 L887.0 470.0 L890.3 471.7 L893.6 473.5 L896.9 475.4 L900.1 477.3 L903.3 479.2 L906.5 481.2 L909.7 483.3 L912.8 485.3 L915.9 487.4 L918.9 489.6 L921.9 491.7" fill="none" stroke="#c5c3bd" stroke-width="2.68"/>
<path d="M506.2 520.8 L508.9 518.2 L511.6 515.7 L514.4 513.1 L517.2 510.6 L520.0 508.2 L522.9 505.7 L525.7 503.3 L528.6 501.0 L531.6 498.6 L534.6 496.4 L537.6 494.1 L540.6 491.9 L543.7 489.8 L546.8 487.7 L549.9 485.6 L553.1 483.6 L556.3 481.6 L559.5 479.7 L562.7 477.9 L566.0 476.1 L569.3 474.3 L572.7 472.6 L576.1 471.0 L579.4 469.4 L582.9 467.8 L586.3 466.3 L589.7 464.9 L593.2 463.5 L596.7 462.1 L600.2 460.8 L603.8 459.6 L607.3 458.4 L610.9 457.2 L614.5 456.1 L618.0 455.0 L621.6 454.0 L625.3 453.0 L628.9 452.0 L632.5 451.1 L636.2 450.2 L639.8 449.4 L643.5 448.6 L647.1 447.8 L650.8 447.1 L654.5 446.4 L658.2 445.8 L661.9 445.2 L665.6 444.6 L669.3 444.1 L673.0 443.6 L676.7 443.1 L680.5 442.6 L684.2 442.2 L687.9 441.9 L691.7 441.5 L695.4 441.2 L699.1 440.9 L702.9 440.7 L706.6 440.5 L710.4 440.3 L714.1 440.1 L717.8 440.0 L721.6 439.9 L725.3 439.8 L729.1 439.8 L732.8 439.8 L736.6 439.8 L740.3 439.9 L744.1 440.0 L747.8 440.1 L751.6 440.2 L755.3 440.4 L759.1 440.7 L762.8 440.9 L766.5 441.2 L770.3 441.5 L774.0 441.8 L777.7 442.2 L781.5 442.6 L785.2 443.0 L788.9 443.5 L792.6 444.0 L796.3 444.6 L800.0 445.1 L803.7 445.7 L807.4 446.4 L811.1 447.1 L814.8 447.8 L818.5 448.5 L822.1 449.3 L825.8 450.1 L829.4 451.0 L833.1 451.9 L836.7 452.9 L840.3 453.9 L843.9 454.9 L847.5 456.0 L851.1 457.1 L854.6 458.3 L858.2 459.5 L861.7 460.7 L865.2 462.1 L868.7 463.4 L872.2 464.9 L875.6 466.3 L879.0 467.9 L882.4 469.5 L885.8 471.2 L889.1 472.9 L892.4 474.7 L895.6 476.6 L898.9 478.4 L902.1 480.4 L905.2 482.3 L908.4 484.3 L911.5 486.4 L914.6 488.4 L917.6 490.5 L920.6 492.6" fill="none" stroke="#cdcbc6" stroke-width="2.68"/>
<path d="M507.1 521.8 L509.8 519.2 L512.6 516.7 L515.3 514.2 L518.1 511.7 L520.9 509.2 L523.7 506.8 L526.6 504.4 L529.5 502.1 L532.4 499.8 L535.4 497.5 L538.3 495.3 L541.4 493.1 L544.4 491.0 L547.5 488.9 L550.6 486.8 L553.8 484.9 L556.9 482.9 L560.2 481.0 L563.4 479.2 L566.7 477.4 L570.0 475.7 L573.3 474.0 L576.6 472.3 L580.0 470.8 L583.4 469.2 L586.8 467.7 L590.3 466.3 L593.7 464.9 L597.2 463.6 L600.7 462.3 L604.2 461.0 L607.7 459.8 L611.3 458.6 L614.8 457.5 L618.4 456.5 L622.0 455.4 L625.6 454.4 L629.2 453.5 L632.8 452.6 L636.4 451.7 L640.0 450.9 L643.7 450.1 L647.3 449.3 L651.0 448.6 L654.6 447.9 L658.3 447.3 L662.0 446.7 L665.7 446.1 L669.4 445.6 L673.1 445.1 L676.7 444.6 L680.4 444.1 L684.2 443.7 L687.9 443.3 L691.6 443.0 L695.3 442.7 L699.0 442.4 L702.7 442.2 L706.4 441.9 L710.2 441.7 L713.9 441.6 L717.6 441.5 L721.3 441.4 L725.1 441.3 L728.8 441.3 L732.5 441.3 L736.2 441.3 L740.0 441.3 L743.7 441.4 L747.4 441.5 L751.1 441.7 L754.9 441.9 L758.6 442.1 L762.3 442.3 L766.0 442.6 L769.7 442.9 L773.4 443.3 L777.1 443.6 L780.8 444.0 L784.5 444.5 L788.2 444.9 L791.9 445.4 L795.6 446.0 L799.3 446.5 L803.0 447.1 L806.7 447.8 L810.3 448.5 L814.0 449.2 L817.6 449.9 L821.3 450.7 L824.9 451.5 L828.5 452.4 L832.1 453.3 L835.8 454.2 L839.3 455.2 L842.9 456.2 L846.5 457.3 L850.1 458.4 L853.6 459.6 L857.1 460.8 L860.6 462.0 L864.1 463.3 L867.6 464.7 L871.0 466.1 L874.4 467.6 L877.8 469.1 L881.2 470.7 L884.5 472.4 L887.8 474.1 L891.1 475.9 L894.4 477.7 L897.6 479.6 L900.8 481.5 L904.0 483.4 L907.1 485.4 L910.2 487.4 L913.3 489.4 L916.4 491.4 L919.4 493.4" fill="none" stroke="#c6c3bd" stroke-width="2.68"/>
<path d="M508.1 522.8 L510.8 520.3 L513.5 517.7 L516.2 515.2 L519.0 512.8 L521.8 510.3 L524.6 507.9 L527.4 505.5 L530.3 503.2 L533.2 500.9 L536.2 498.7 L539.1 496.5 L542.1 494.3 L545.2 492.2 L548.2 490.1 L551.3 488.1 L554.5 486.1 L557.6 484.2 L560.8 482.3 L564.1 480.5 L567.3 478.7 L570.6 477.0 L573.9 475.3 L577.2 473.7 L580.6 472.1 L584.0 470.6 L587.4 469.1 L590.8 467.7 L594.2 466.3 L597.7 465.0 L601.1 463.7 L604.6 462.5 L608.1 461.3 L611.7 460.1 L615.2 459.0 L618.7 457.9 L622.3 456.9 L625.9 455.9 L629.4 455.0 L633.0 454.1 L636.6 453.2 L640.3 452.4 L643.9 451.6 L647.5 450.8 L651.1 450.1 L654.8 449.4 L658.4 448.8 L662.1 448.2 L665.7 447.6 L669.4 447.0 L673.1 446.5 L676.7 446.1 L680.4 445.6 L684.1 445.2 L687.8 444.8 L691.5 444.5 L695.2 444.2 L698.9 443.9 L702.6 443.6 L706.3 443.4 L710.0 443.2 L713.7 443.1 L717.4 442.9 L721.1 442.8 L724.8 442.8 L728.5 442.7 L732.2 442.7 L735.9 442.7 L739.6 442.8 L743.3 442.9 L747.0 443.0 L750.7 443.1 L754.4 443.3 L758.1 443.5 L761.8 443.8 L765.5 444.0 L769.2 444.3 L772.9 444.7 L776.5 445.0 L780.2 445.4 L783.9 445.9 L787.6 446.3 L791.3 446.8 L794.9 447.4 L798.6 447.9 L802.2 448.5 L805.9 449.2 L809.5 449.8 L813.2 450.5 L816.8 451.3 L820.4 452.1 L824.0 452.9 L827.6 453.7 L831.2 454.6 L834.8 455.6 L838.4 456.5 L842.0 457.6 L845.5 458.6 L849.0 459.7 L852.6 460.9 L856.1 462.1 L859.5 463.3 L863.0 464.6 L866.5 466.0 L869.9 467.4 L873.3 468.9 L876.7 470.4 L880.0 472.0 L883.3 473.6 L886.6 475.3 L889.9 477.1 L893.1 478.9 L896.3 480.8 L899.5 482.6 L902.7 484.5 L905.8 486.5 L908.9 488.4 L912.0 490.4 L915.1 492.3 L918.1 494.3" fill="none" stroke="#bebbb4" stroke-width="2.68"/>
<path d="M509.1 523.9 L511.7 521.3 L514.4 518.8 L517.1 516.3 L519.9 513.8 L522.6 511.4 L525.4 509.0 L528.3 506.7 L531.1 504.3 L534.0 502.1 L537.0 499.8 L539.9 497.6 L542.9 495.5 L545.9 493.4 L549.0 491.3 L552.1 489.3 L555.2 487.4 L558.3 485.5 L561.5 483.6 L564.7 481.8 L568.0 480.0 L571.2 478.3 L574.5 476.7 L577.8 475.0 L581.1 473.5 L584.5 472.0 L587.9 470.5 L591.3 469.1 L594.7 467.7 L598.1 466.4 L601.6 465.1 L605.1 463.9 L608.5 462.7 L612.0 461.5 L615.6 460.4 L619.1 459.4 L622.6 458.4 L626.2 457.4 L629.7 456.4 L633.3 455.5 L636.9 454.7 L640.5 453.8 L644.1 453.1 L647.7 452.3 L651.3 451.6 L654.9 450.9 L658.5 450.3 L662.2 449.7 L665.8 449.1 L669.4 448.5 L673.1 448.0 L676.7 447.6 L680.4 447.1 L684.1 446.7 L687.7 446.3 L691.4 446.0 L695.1 445.7 L698.7 445.4 L702.4 445.1 L706.1 444.9 L709.8 444.7 L713.4 444.5 L717.1 444.4 L720.8 444.3 L724.5 444.2 L728.2 444.2 L731.8 444.2 L735.5 444.2 L739.2 444.2 L742.9 444.3 L746.6 444.4 L750.2 444.6 L753.9 444.8 L757.6 445.0 L761.3 445.2 L765.0 445.5 L768.6 445.8 L772.3 446.1 L776.0 446.5 L779.6 446.9 L783.3 447.3 L786.9 447.8 L790.6 448.2 L794.2 448.8 L797.9 449.3 L801.5 449.9 L805.1 450.5 L808.7 451.2 L812.4 451.9 L816.0 452.6 L819.6 453.4 L823.2 454.2 L826.7 455.1 L830.3 456.0 L833.9 456.9 L837.4 457.9 L841.0 458.9 L844.5 459.9 L848.0 461.0 L851.5 462.2 L855.0 463.4 L858.5 464.6 L861.9 465.9 L865.3 467.3 L868.8 468.7 L872.1 470.1 L875.5 471.6 L878.8 473.2 L882.1 474.9 L885.4 476.6 L888.6 478.3 L891.8 480.1 L895.0 481.9 L898.2 483.8 L901.4 485.6 L904.5 487.5 L907.6 489.4 L910.7 491.3 L913.8 493.2 L916.9 495.1" fill="none" stroke="#b8b5ad" stroke-width="2.68"/>
<path d="M510.0 524.9 L512.7 522.3 L515.3 519.8 L518.0 517.3 L520.8 514.9 L523.5 512.5 L526.3 510.1 L529.1 507.8 L532.0 505.5 L534.8 503.2 L537.8 501.0 L540.7 498.8 L543.7 496.7 L546.7 494.6 L549.7 492.6 L552.8 490.6 L555.9 488.6 L559.0 486.7 L562.2 484.9 L565.4 483.1 L568.6 481.3 L571.8 479.6 L575.1 478.0 L578.4 476.4 L581.7 474.9 L585.1 473.4 L588.4 471.9 L591.8 470.5 L595.2 469.1 L598.6 467.8 L602.0 466.5 L605.5 465.3 L609.0 464.1 L612.4 463.0 L615.9 461.9 L619.4 460.8 L622.9 459.8 L626.5 458.8 L630.0 457.9 L633.6 457.0 L637.1 456.1 L640.7 455.3 L644.3 454.5 L647.8 453.8 L651.4 453.1 L655.0 452.4 L658.6 451.8 L662.3 451.2 L665.9 450.6 L669.5 450.0 L673.1 449.5 L676.7 449.0 L680.4 448.6 L684.0 448.2 L687.7 447.8 L691.3 447.5 L694.9 447.1 L698.6 446.8 L702.2 446.6 L705.9 446.4 L709.6 446.2 L713.2 446.0 L716.9 445.9 L720.5 445.8 L724.2 445.7 L727.8 445.6 L731.5 445.6 L735.2 445.6 L738.8 445.7 L742.5 445.8 L746.2 445.9 L749.8 446.0 L753.5 446.2 L757.1 446.4 L760.8 446.6 L764.4 446.9 L768.1 447.2 L771.7 447.5 L775.4 447.9 L779.0 448.3 L782.6 448.7 L786.3 449.2 L789.9 449.7 L793.5 450.2 L797.1 450.7 L800.8 451.3 L804.4 451.9 L808.0 452.6 L811.6 453.3 L815.1 454.0 L818.7 454.8 L822.3 455.6 L825.9 456.4 L829.4 457.3 L833.0 458.3 L836.5 459.2 L840.0 460.2 L843.5 461.3 L847.0 462.4 L850.5 463.5 L853.9 464.7 L857.4 465.9 L860.8 467.2 L864.2 468.6 L867.6 469.9 L871.0 471.4 L874.3 472.9 L877.6 474.5 L880.9 476.1 L884.2 477.8 L887.4 479.5 L890.6 481.3 L893.8 483.1 L896.9 484.9 L900.1 486.7 L903.2 488.6 L906.3 490.5 L909.5 492.3 L912.6 494.1 L915.6 496.0" fill="none" stroke="#b5b2a9" stroke-width="2.68"/>
<path d="M511.0 525.9 L513.6 523.4 L516.3 520.9 L518.9 518.4 L521.6 516.0 L524.4 513.6 L527.2 511.2 L530.0 508.9 L532.8 506.6 L535.7 504.4 L538.6 502.2 L541.5 500.0 L544.4 497.9 L547.4 495.8 L550.5 493.8 L553.5 491.8 L556.6 489.9 L559.7 488.0 L562.9 486.2 L566.0 484.4 L569.2 482.7 L572.5 481.0 L575.7 479.3 L579.0 477.8 L582.3 476.2 L585.6 474.7 L588.9 473.3 L592.3 471.9 L595.7 470.5 L599.1 469.2 L602.5 468.0 L605.9 466.8 L609.4 465.6 L612.8 464.4 L616.3 463.4 L619.8 462.3 L623.3 461.3 L626.8 460.3 L630.3 459.4 L633.8 458.5 L637.4 457.6 L640.9 456.8 L644.5 456.0 L648.0 455.3 L651.6 454.6 L655.2 453.9 L658.8 453.3 L662.3 452.6 L665.9 452.1 L669.5 451.5 L673.1 451.0 L676.7 450.5 L680.4 450.1 L684.0 449.7 L687.6 449.3 L691.2 448.9 L694.8 448.6 L698.5 448.3 L702.1 448.1 L705.7 447.8 L709.4 447.6 L713.0 447.5 L716.6 447.3 L720.3 447.2 L723.9 447.2 L727.5 447.1 L731.2 447.1 L734.8 447.1 L738.5 447.1 L742.1 447.2 L745.7 447.3 L749.4 447.5 L753.0 447.6 L756.6 447.8 L760.3 448.1 L763.9 448.3 L767.5 448.6 L771.1 449.0 L774.8 449.3 L778.4 449.7 L782.0 450.1 L785.6 450.6 L789.2 451.1 L792.8 451.6 L796.4 452.1 L800.0 452.7 L803.6 453.3 L807.2 454.0 L810.8 454.7 L814.3 455.4 L817.9 456.2 L821.4 457.0 L825.0 457.8 L828.5 458.7 L832.0 459.6 L835.5 460.6 L839.0 461.6 L842.5 462.6 L846.0 463.7 L849.4 464.8 L852.9 466.0 L856.3 467.2 L859.7 468.5 L863.1 469.8 L866.5 471.2 L869.8 472.6 L873.1 474.1 L876.4 475.7 L879.7 477.3 L882.9 479.0 L886.1 480.7 L889.3 482.5 L892.5 484.2 L895.6 486.0 L898.8 487.9 L901.9 489.7 L905.1 491.5 L908.2 493.3 L911.3 495.1 L914.4 496.8" fill="none" stroke="#b2aea5" stroke-width="2.68"/>
<path d="M512.0 526.9 L514.6 524.4 L517.2 521.9 L519.8 519.4 L522.5 517.0 L525.3 514.6 L528.0 512.3 L530.8 510.0 L533.6 507.7 L536.5 505.5 L539.3 503.3 L542.3 501.2 L545.2 499.1 L548.2 497.0 L551.2 495.0 L554.2 493.1 L557.3 491.1 L560.4 489.3 L563.5 487.5 L566.7 485.7 L569.9 484.0 L573.1 482.3 L576.3 480.7 L579.6 479.1 L582.9 477.6 L586.2 476.1 L589.5 474.7 L592.8 473.3 L596.2 471.9 L599.6 470.7 L602.9 469.4 L606.4 468.2 L609.8 467.0 L613.2 465.9 L616.7 464.8 L620.1 463.8 L623.6 462.8 L627.1 461.8 L630.6 460.9 L634.1 460.0 L637.6 459.1 L641.1 458.3 L644.7 457.5 L648.2 456.8 L651.7 456.1 L655.3 455.4 L658.9 454.7 L662.4 454.1 L666.0 453.6 L669.6 453.0 L673.2 452.5 L676.7 452.0 L680.3 451.6 L683.9 451.2 L687.5 450.8 L691.1 450.4 L694.7 450.1 L698.3 449.8 L701.9 449.6 L705.5 449.3 L709.2 449.1 L712.8 448.9 L716.4 448.8 L720.0 448.7 L723.6 448.6 L727.2 448.6 L730.8 448.5 L734.5 448.5 L738.1 448.6 L741.7 448.7 L745.3 448.8 L748.9 448.9 L752.5 449.1 L756.2 449.3 L759.8 449.5 L763.4 449.8 L767.0 450.1 L770.6 450.4 L774.2 450.7 L777.8 451.1 L781.4 451.5 L785.0 452.0 L788.5 452.5 L792.1 453.0 L795.7 453.5 L799.3 454.1 L802.8 454.7 L806.4 455.4 L809.9 456.1 L813.5 456.8 L817.0 457.5 L820.6 458.3 L824.1 459.2 L827.6 460.0 L831.1 460.9 L834.6 461.9 L838.1 462.9 L841.5 463.9 L845.0 465.0 L848.4 466.1 L851.8 467.3 L855.2 468.5 L858.6 469.8 L862.0 471.1 L865.3 472.5 L868.7 473.9 L872.0 475.4 L875.2 476.9 L878.5 478.5 L881.7 480.2 L884.9 481.9 L888.1 483.6 L891.2 485.4 L894.4 487.2 L897.5 489.0 L900.6 490.7 L903.8 492.5 L906.9 494.3 L910.0 496.0 L913.1 497.7" fill="none" stroke="#afaba2" stroke-width="2.68"/>
<path d="M512.9 527.9 L515.5 525.4 L518.1 522.9 L520.7 520.5 L523.4 518.1 L526.1 515.7 L528.9 513.4 L531.6 511.1 L534.4 508.8 L537.3 506.6 L540.1 504.5 L543.0 502.3 L546.0 500.3 L548.9 498.2 L551.9 496.2 L555.0 494.3 L558.0 492.4 L561.1 490.6 L564.2 488.8 L567.4 487.0 L570.5 485.3 L573.7 483.6 L576.9 482.0 L580.2 480.5 L583.4 479.0 L586.7 477.5 L590.0 476.1 L593.3 474.7 L596.7 473.4 L600.0 472.1 L603.4 470.8 L606.8 469.6 L610.2 468.5 L613.6 467.3 L617.0 466.3 L620.5 465.2 L623.9 464.2 L627.4 463.3 L630.9 462.3 L634.4 461.4 L637.8 460.6 L641.3 459.8 L644.9 459.0 L648.4 458.3 L651.9 457.6 L655.4 456.9 L659.0 456.2 L662.5 455.6 L666.1 455.1 L669.6 454.5 L673.2 454.0 L676.7 453.5 L680.3 453.1 L683.9 452.7 L687.5 452.3 L691.0 451.9 L694.6 451.6 L698.2 451.3 L701.8 451.0 L705.4 450.8 L709.0 450.6 L712.5 450.4 L716.1 450.3 L719.7 450.2 L723.3 450.1 L726.9 450.0 L730.5 450.0 L734.1 450.0 L737.7 450.1 L741.3 450.1 L744.9 450.2 L748.5 450.4 L752.1 450.5 L755.7 450.7 L759.3 450.9 L762.8 451.2 L766.4 451.5 L770.0 451.8 L773.6 452.2 L777.2 452.5 L780.7 452.9 L784.3 453.4 L787.9 453.9 L791.4 454.4 L795.0 454.9 L798.5 455.5 L802.1 456.1 L805.6 456.8 L809.1 457.4 L812.7 458.1 L816.2 458.9 L819.7 459.7 L823.2 460.5 L826.7 461.4 L830.2 462.3 L833.6 463.2 L837.1 464.2 L840.5 465.2 L844.0 466.3 L847.4 467.4 L850.8 468.6 L854.2 469.8 L857.5 471.1 L860.9 472.4 L864.2 473.8 L867.5 475.2 L870.8 476.6 L874.0 478.2 L877.3 479.8 L880.5 481.4 L883.6 483.1 L886.8 484.8 L889.9 486.6 L893.1 488.3 L896.2 490.1 L899.3 491.8 L902.5 493.5 L905.6 495.2 L908.7 496.9 L911.9 498.5" fill="none" stroke="#aca89e" stroke-width="2.68"/>
<path d="M513.9 528.9 L516.4 526.4 L519.0 524.0 L521.7 521.5 L524.3 519.2 L527.0 516.8 L529.7 514.5 L532.5 512.2 L535.3 510.0 L538.1 507.8 L540.9 505.6 L543.8 503.5 L546.7 501.5 L549.7 499.4 L552.7 497.5 L555.7 495.5 L558.7 493.7 L561.8 491.8 L564.9 490.0 L568.0 488.3 L571.2 486.6 L574.3 485.0 L577.5 483.4 L580.7 481.8 L584.0 480.3 L587.3 478.9 L590.5 477.5 L593.8 476.1 L597.2 474.8 L600.5 473.5 L603.9 472.3 L607.2 471.1 L610.6 469.9 L614.0 468.8 L617.4 467.7 L620.8 466.7 L624.3 465.7 L627.7 464.7 L631.2 463.8 L634.6 462.9 L638.1 462.1 L641.6 461.3 L645.1 460.5 L648.5 459.7 L652.1 459.0 L655.6 458.4 L659.1 457.7 L662.6 457.1 L666.1 456.5 L669.7 456.0 L673.2 455.5 L676.7 455.0 L680.3 454.6 L683.8 454.1 L687.4 453.8 L690.9 453.4 L694.5 453.1 L698.1 452.8 L701.6 452.5 L705.2 452.3 L708.8 452.1 L712.3 451.9 L715.9 451.7 L719.5 451.6 L723.0 451.5 L726.6 451.5 L730.2 451.5 L733.8 451.5 L737.3 451.5 L740.9 451.6 L744.5 451.7 L748.0 451.8 L751.6 452.0 L755.2 452.2 L758.8 452.4 L762.3 452.6 L765.9 452.9 L769.4 453.2 L773.0 453.6 L776.6 454.0 L780.1 454.4 L783.6 454.8 L787.2 455.3 L790.7 455.8 L794.3 456.3 L797.8 456.9 L801.3 457.5 L804.8 458.1 L808.3 458.8 L811.8 459.5 L815.3 460.3 L818.8 461.1 L822.3 461.9 L825.8 462.7 L829.2 463.6 L832.7 464.6 L836.1 465.6 L839.5 466.6 L842.9 467.6 L846.3 468.8 L849.7 469.9 L853.1 471.1 L856.4 472.4 L859.8 473.7 L863.1 475.0 L866.4 476.4 L869.6 477.9 L872.8 479.4 L876.1 481.0 L879.2 482.6 L882.4 484.3 L885.5 486.0 L888.7 487.7 L891.8 489.4 L894.9 491.2 L898.0 492.9 L901.2 494.6 L904.3 496.2 L907.5 497.8 L910.6 499.4" fill="none" stroke="#a9a59b" stroke-width="2.68"/>
<path d="M514.9 529.9 L517.4 527.5 L520.0 525.0 L522.6 522.6 L525.2 520.2 L527.9 517.9 L530.6 515.6 L533.3 513.3 L536.1 511.1 L538.9 508.9 L541.7 506.8 L544.6 504.7 L547.5 502.7 L550.5 500.7 L553.4 498.7 L556.4 496.8 L559.4 494.9 L562.5 493.1 L565.6 491.3 L568.7 489.6 L571.8 487.9 L575.0 486.3 L578.1 484.7 L581.3 483.2 L584.6 481.7 L587.8 480.2 L591.1 478.8 L594.3 477.5 L597.7 476.2 L601.0 474.9 L604.3 473.7 L607.6 472.5 L611.0 471.3 L614.4 470.2 L617.8 469.2 L621.2 468.1 L624.6 467.1 L628.0 466.2 L631.4 465.3 L634.9 464.4 L638.3 463.6 L641.8 462.8 L645.3 462.0 L648.7 461.2 L652.2 460.5 L655.7 459.9 L659.2 459.2 L662.7 458.6 L666.2 458.0 L669.7 457.5 L673.2 457.0 L676.7 456.5 L680.3 456.0 L683.8 455.6 L687.3 455.2 L690.8 454.9 L694.4 454.6 L697.9 454.3 L701.5 454.0 L705.0 453.8 L708.6 453.5 L712.1 453.4 L715.7 453.2 L719.2 453.1 L722.8 453.0 L726.3 452.9 L729.9 452.9 L733.4 452.9 L737.0 453.0 L740.5 453.0 L744.1 453.1 L747.6 453.2 L751.2 453.4 L754.7 453.6 L758.2 453.8 L761.8 454.1 L765.3 454.3 L768.9 454.7 L772.4 455.0 L775.9 455.4 L779.5 455.8 L783.0 456.2 L786.5 456.7 L790.0 457.2 L793.5 457.7 L797.0 458.3 L800.5 458.9 L804.0 459.5 L807.5 460.2 L811.0 460.9 L814.5 461.6 L817.9 462.4 L821.4 463.2 L824.9 464.1 L828.3 465.0 L831.7 465.9 L835.1 466.9 L838.5 467.9 L841.9 469.0 L845.3 470.1 L848.7 471.2 L852.0 472.4 L855.3 473.7 L858.6 475.0 L861.9 476.3 L865.2 477.7 L868.4 479.1 L871.7 480.7 L874.8 482.2 L878.0 483.8 L881.1 485.5 L884.3 487.2 L887.4 488.9 L890.5 490.6 L893.6 492.3 L896.7 493.9 L899.9 495.6 L903.0 497.2 L906.2 498.7 L909.4 500.3" fill="none" stroke="#a7a298" stroke-width="2.68"/>
<path d="M515.8 531.0 L518.3 528.5 L520.9 526.0 L523.5 523.6 L526.1 521.3 L528.8 519.0 L531.4 516.7 L534.2 514.4 L536.9 512.2 L539.7 510.1 L542.5 507.9 L545.4 505.9 L548.3 503.8 L551.2 501.9 L554.2 499.9 L557.1 498.0 L560.1 496.2 L563.2 494.4 L566.2 492.6 L569.3 490.9 L572.4 489.3 L575.6 487.6 L578.7 486.1 L581.9 484.5 L585.1 483.1 L588.4 481.6 L591.6 480.2 L594.9 478.9 L598.1 477.6 L601.4 476.3 L604.8 475.1 L608.1 473.9 L611.4 472.8 L614.8 471.7 L618.1 470.6 L621.5 469.6 L624.9 468.6 L628.3 467.7 L631.7 466.8 L635.1 465.9 L638.6 465.0 L642.0 464.2 L645.4 463.5 L648.9 462.7 L652.4 462.0 L655.8 461.4 L659.3 460.7 L662.8 460.1 L666.3 459.5 L669.7 459.0 L673.2 458.5 L676.7 458.0 L680.2 457.5 L683.7 457.1 L687.2 456.7 L690.8 456.4 L694.3 456.0 L697.8 455.7 L701.3 455.5 L704.8 455.2 L708.4 455.0 L711.9 454.8 L715.4 454.7 L718.9 454.6 L722.5 454.5 L726.0 454.4 L729.5 454.4 L733.1 454.4 L736.6 454.4 L740.1 454.5 L743.6 454.6 L747.2 454.7 L750.7 454.8 L754.2 455.0 L757.7 455.2 L761.3 455.5 L764.8 455.8 L768.3 456.1 L771.8 456.4 L775.3 456.8 L778.8 457.2 L782.3 457.6 L785.8 458.1 L789.3 458.6 L792.8 459.1 L796.3 459.7 L799.8 460.3 L803.3 460.9 L806.7 461.6 L810.2 462.3 L813.6 463.0 L817.1 463.8 L820.5 464.6 L823.9 465.4 L827.4 466.3 L830.8 467.3 L834.2 468.2 L837.5 469.2 L840.9 470.3 L844.3 471.4 L847.6 472.5 L850.9 473.7 L854.2 474.9 L857.5 476.2 L860.8 477.6 L864.0 478.9 L867.3 480.4 L870.5 481.9 L873.6 483.4 L876.8 485.0 L879.9 486.7 L883.0 488.4 L886.1 490.0 L889.2 491.7 L892.3 493.4 L895.5 495.0 L898.6 496.6 L901.8 498.1 L904.9 499.6 L908.1 501.1" fill="none" stroke="#a4a095" stroke-width="2.68"/>
<path d="M516.8 532.0 L519.3 529.5 L521.8 527.1 L524.4 524.7 L527.0 522.3 L529.6 520.0 L532.3 517.8 L535.0 515.5 L537.8 513.3 L540.5 511.2 L543.3 509.1 L546.2 507.0 L549.1 505.0 L552.0 503.1 L554.9 501.1 L557.9 499.3 L560.8 497.4 L563.9 495.6 L566.9 493.9 L570.0 492.2 L573.1 490.6 L576.2 489.0 L579.3 487.4 L582.5 485.9 L585.7 484.4 L588.9 483.0 L592.1 481.6 L595.4 480.3 L598.6 479.0 L601.9 477.7 L605.2 476.5 L608.5 475.4 L611.8 474.2 L615.2 473.1 L618.5 472.1 L621.9 471.1 L625.2 470.1 L628.6 469.1 L632.0 468.2 L635.4 467.4 L638.8 466.5 L642.2 465.7 L645.6 464.9 L649.1 464.2 L652.5 463.5 L656.0 462.8 L659.4 462.2 L662.9 461.6 L666.3 461.0 L669.8 460.5 L673.3 460.0 L676.7 459.5 L680.2 459.0 L683.7 458.6 L687.2 458.2 L690.7 457.9 L694.2 457.5 L697.7 457.2 L701.2 457.0 L704.7 456.7 L708.2 456.5 L711.7 456.3 L715.2 456.1 L718.7 456.0 L722.2 455.9 L725.7 455.9 L729.2 455.8 L732.7 455.8 L736.2 455.9 L739.7 455.9 L743.2 456.0 L746.7 456.1 L750.2 456.3 L753.7 456.5 L757.2 456.7 L760.7 456.9 L764.2 457.2 L767.7 457.5 L771.2 457.8 L774.7 458.2 L778.2 458.6 L781.7 459.0 L785.2 459.5 L788.6 460.0 L792.1 460.5 L795.6 461.1 L799.0 461.7 L802.5 462.3 L805.9 462.9 L809.4 463.6 L812.8 464.4 L816.2 465.1 L819.6 465.9 L823.0 466.8 L826.4 467.7 L829.8 468.6 L833.2 469.6 L836.5 470.6 L839.9 471.6 L843.2 472.7 L846.5 473.8 L849.9 475.0 L853.1 476.2 L856.4 477.5 L859.7 478.8 L862.9 480.2 L866.1 481.6 L869.3 483.1 L872.4 484.7 L875.5 486.3 L878.7 487.9 L881.7 489.5 L884.8 491.2 L887.9 492.8 L891.0 494.5 L894.2 496.1 L897.3 497.6 L900.5 499.1 L903.7 500.6 L906.9 502.0" fill="none" stroke="#a29d92" stroke-width="2.68"/>
<path d="M517.3 532.5 L519.5 530.3 L521.7 528.2 L523.9 526.1 L526.2 524.0 L528.5 522.0 L530.8 519.9 L533.2 517.9 L535.6 516.0 L538.0 514.0 L540.5 512.1 L543.1 510.2 L545.7 508.3 L548.3 506.4 L551.0 504.6 L553.8 502.7 L556.6 500.9 L559.5 499.1 L562.4 497.3 L565.5 495.6 L568.6 493.8 L571.7 492.1 L575.0 490.4 L578.3 488.7 L581.8 487.1 L585.3 485.4 L588.9 483.8 L592.6 482.2 L596.4 480.7 L600.3 479.2 L604.2 477.7 L608.3 476.2 L612.5 474.8 L616.8 473.4 L621.2 472.0 L625.7 470.7 L630.2 469.5 L634.9 468.2 L639.7 467.1 L644.6 465.9 L649.5 464.9 L654.6 463.9 L659.7 462.9 L664.9 462.0 L670.2 461.1 L675.6 460.4 L681.0 459.7 L686.5 459.0 L692.1 458.4 L697.7 457.9 L703.3 457.5 L709.0 457.2 L714.7 456.9 L720.5 456.7 L726.2 456.6 L732.0 456.6 L737.8 456.6 L743.5 456.7 L749.3 457.0 L755.0 457.3 L760.6 457.6 L766.2 458.1 L771.8 458.6 L777.3 459.2 L782.7 459.9 L788.1 460.6 L793.4 461.5 L798.6 462.3 L803.7 463.3 L808.7 464.3 L813.6 465.3 L818.5 466.4 L823.2 467.6 L827.8 468.8 L832.3 470.1 L836.6 471.4 L840.9 472.8 L845.1 474.1 L849.1 475.6 L853.0 477.0 L856.8 478.5 L860.5 480.1 L864.1 481.6 L867.5 483.2 L870.8 484.8 L874.1 486.4 L877.2 488.1 L880.3 489.7 L883.4 491.3 L886.4 493.0 L889.5 494.6 L892.6 496.2 L895.8 497.8 L899.2 499.3 L902.6 500.9 L906.2 502.4 L910 540 L620 600 L520 570 Z" fill="#b0ab9f"/>
<path d="M518.8 533.5 L521.2 531.0 L523.7 528.6 L526.2 526.2 L528.8 523.8 L531.4 521.5 L534.0 519.2 L536.7 517.0 L539.4 514.8 L542.1 512.7 L544.9 510.6 L547.7 508.5 L550.6 506.5 L553.5 504.6 L556.4 502.7 L559.3 500.8 L562.3 499.0 L565.3 497.2 L568.3 495.5 L571.4 493.9 L574.5 492.2 L577.6 490.7 L580.7 489.1 L583.8 487.6 L587.0 486.2 L590.2 484.8 L593.4 483.4 L596.6 482.1 L599.8 480.8 L603.1 479.6 L606.4 478.4 L609.7 477.3 L612.9 476.1 L616.3 475.1 L619.6 474.0 L622.9 473.0 L626.3 472.0 L629.6 471.1 L633.0 470.2 L636.3 469.3 L639.7 468.5 L643.1 467.7 L646.5 467.0 L649.9 466.2 L653.3 465.5 L656.7 464.9 L660.2 464.2 L663.6 463.6 L667.0 463.0 L670.5 462.5 L673.9 462.0 L677.4 461.5 L680.8 461.0 L684.3 460.6 L687.7 460.2 L691.2 459.9 L694.6 459.5 L698.1 459.2 L701.6 459.0 L705.1 458.7 L708.5 458.5 L712.0 458.3 L715.5 458.2 L719.0 458.0 L722.4 457.9 L725.9 457.9 L729.4 457.8 L732.9 457.8 L736.4 457.9 L739.8 457.9 L743.3 458.0 L746.8 458.1 L750.3 458.3 L753.8 458.5 L757.2 458.7 L760.7 458.9 L764.2 459.2 L767.6 459.5 L771.1 459.8 L774.6 460.2 L778.0 460.6 L781.5 461.0 L784.9 461.5 L788.4 461.9 L791.8 462.5 L795.3 463.0 L798.7 463.6 L802.1 464.2 L805.5 464.9 L808.9 465.6 L812.4 466.3 L815.7 467.1 L819.1 467.9 L822.5 468.7 L825.9 469.6 L829.2 470.5 L832.6 471.5 L835.9 472.5 L839.2 473.5 L842.6 474.6 L845.8 475.7 L849.1 476.9 L852.4 478.1 L855.6 479.4 L858.8 480.7 L862.0 482.1 L865.2 483.5 L868.4 485.0 L871.5 486.5 L874.6 488.1 L877.7 489.7 L880.8 491.3 L883.9 492.9 L886.9 494.6 L890.0 496.2 L893.1 497.7 L896.2 499.3 L899.4 500.8 L902.6 502.2 L905.8 503.5" fill="none" stroke="#a5a094" stroke-width="4.91"/>
<path d="M521.8 535.4 L524.1 532.9 L526.5 530.5 L529.0 528.0 L531.5 525.7 L534.0 523.3 L536.6 521.0 L539.2 518.8 L541.8 516.6 L544.5 514.5 L547.3 512.4 L550.1 510.4 L552.9 508.4 L555.7 506.4 L558.6 504.5 L561.5 502.7 L564.5 500.9 L567.5 499.2 L570.5 497.5 L573.5 495.8 L576.6 494.3 L579.6 492.7 L582.7 491.2 L585.9 489.7 L589.0 488.3 L592.2 487.0 L595.4 485.6 L598.6 484.4 L601.8 483.1 L605.0 481.9 L608.3 480.7 L611.5 479.6 L614.8 478.5 L618.1 477.5 L621.4 476.4 L624.7 475.5 L628.0 474.5 L631.3 473.6 L634.6 472.7 L638.0 471.8 L641.3 471.0 L644.7 470.2 L648.0 469.5 L651.4 468.7 L654.8 468.1 L658.2 467.4 L661.6 466.8 L665.0 466.2 L668.4 465.6 L671.8 465.0 L675.2 464.5 L678.6 464.1 L682.0 463.6 L685.4 463.2 L688.9 462.8 L692.3 462.4 L695.7 462.1 L699.2 461.8 L702.6 461.5 L706.0 461.3 L709.5 461.1 L712.9 460.9 L716.4 460.7 L719.8 460.6 L723.3 460.5 L726.7 460.4 L730.2 460.4 L733.6 460.4 L737.1 460.4 L740.5 460.5 L744.0 460.6 L747.4 460.7 L750.8 460.8 L754.3 461.0 L757.7 461.2 L761.2 461.5 L764.6 461.7 L768.0 462.0 L771.5 462.4 L774.9 462.7 L778.3 463.1 L781.8 463.5 L785.2 464.0 L788.6 464.5 L792.0 465.0 L795.4 465.6 L798.8 466.1 L802.2 466.8 L805.6 467.4 L809.0 468.1 L812.3 468.9 L815.7 469.6 L819.0 470.4 L822.4 471.3 L825.7 472.1 L829.1 473.0 L832.4 474.0 L835.7 475.0 L839.0 476.0 L842.2 477.1 L845.5 478.2 L848.7 479.4 L852.0 480.6 L855.2 481.9 L858.4 483.2 L861.5 484.5 L864.7 485.9 L867.8 487.4 L870.9 488.9 L874.0 490.5 L877.1 492.0 L880.1 493.7 L883.2 495.3 L886.2 496.9 L889.3 498.5 L892.3 500.0 L895.4 501.6 L898.5 503.0 L901.7 504.5 L904.8 505.8" fill="none" stroke="#a8a397" stroke-width="4.91"/>
<path d="M524.8 537.4 L527.1 534.9 L529.4 532.4 L531.7 529.9 L534.1 527.5 L536.6 525.2 L539.1 522.9 L541.7 520.6 L544.3 518.4 L546.9 516.3 L549.6 514.2 L552.4 512.2 L555.2 510.2 L558.0 508.3 L560.8 506.4 L563.7 504.6 L566.7 502.8 L569.6 501.1 L572.6 499.4 L575.6 497.8 L578.7 496.3 L581.7 494.8 L584.8 493.3 L587.9 491.9 L591.0 490.5 L594.2 489.2 L597.3 487.9 L600.5 486.6 L603.7 485.4 L606.9 484.2 L610.1 483.1 L613.4 482.0 L616.6 480.9 L619.9 479.9 L623.1 478.9 L626.4 477.9 L629.7 477.0 L633.0 476.1 L636.3 475.2 L639.6 474.3 L642.9 473.5 L646.2 472.8 L649.6 472.0 L652.9 471.3 L656.3 470.6 L659.6 469.9 L663.0 469.3 L666.3 468.7 L669.7 468.1 L673.1 467.6 L676.5 467.1 L679.8 466.6 L683.2 466.2 L686.6 465.7 L690.0 465.4 L693.4 465.0 L696.8 464.7 L700.2 464.4 L703.6 464.1 L707.0 463.8 L710.4 463.6 L713.8 463.4 L717.3 463.3 L720.7 463.2 L724.1 463.1 L727.5 463.0 L730.9 463.0 L734.3 462.9 L737.7 463.0 L741.2 463.0 L744.6 463.1 L748.0 463.2 L751.4 463.4 L754.8 463.6 L758.2 463.8 L761.6 464.0 L765.0 464.3 L768.4 464.6 L771.8 464.9 L775.2 465.3 L778.6 465.7 L782.0 466.1 L785.4 466.5 L788.8 467.0 L792.2 467.6 L795.5 468.1 L798.9 468.7 L802.3 469.3 L805.6 470.0 L809.0 470.6 L812.3 471.4 L815.6 472.1 L819.0 472.9 L822.3 473.8 L825.6 474.6 L828.9 475.6 L832.1 476.5 L835.4 477.5 L838.7 478.5 L841.9 479.6 L845.1 480.7 L848.4 481.9 L851.6 483.1 L854.7 484.3 L857.9 485.6 L861.0 487.0 L864.1 488.4 L867.2 489.8 L870.3 491.3 L873.4 492.8 L876.4 494.4 L879.4 496.0 L882.5 497.6 L885.5 499.2 L888.5 500.8 L891.5 502.3 L894.6 503.9 L897.7 505.3 L900.8 506.8 L903.9 508.1" fill="none" stroke="#aba69a" stroke-width="4.91"/>
<path d="M527.9 539.3 L530.0 536.8 L532.2 534.3 L534.5 531.8 L536.8 529.4 L539.2 527.0 L541.7 524.7 L544.2 522.4 L546.7 520.2 L549.3 518.1 L552.0 516.0 L554.7 514.0 L557.5 512.0 L560.2 510.1 L563.1 508.2 L565.9 506.4 L568.8 504.7 L571.8 503.0 L574.7 501.4 L577.7 499.8 L580.8 498.3 L583.8 496.8 L586.9 495.4 L589.9 494.0 L593.1 492.6 L596.2 491.3 L599.3 490.1 L602.5 488.9 L605.6 487.7 L608.8 486.5 L612.0 485.4 L615.2 484.3 L618.4 483.3 L621.7 482.3 L624.9 481.3 L628.1 480.3 L631.4 479.4 L634.7 478.5 L637.9 477.7 L641.2 476.8 L644.5 476.0 L647.8 475.3 L651.1 474.5 L654.4 473.8 L657.7 473.1 L661.0 472.5 L664.4 471.9 L667.7 471.3 L671.0 470.7 L674.4 470.2 L677.7 469.7 L681.1 469.2 L684.4 468.7 L687.8 468.3 L691.2 467.9 L694.5 467.6 L697.9 467.2 L701.3 466.9 L704.6 466.6 L708.0 466.4 L711.4 466.2 L714.8 466.0 L718.1 465.8 L721.5 465.7 L724.9 465.6 L728.3 465.5 L731.7 465.5 L735.1 465.5 L738.4 465.5 L741.8 465.6 L745.2 465.7 L748.6 465.8 L752.0 465.9 L755.3 466.1 L758.7 466.3 L762.1 466.5 L765.5 466.8 L768.8 467.1 L772.2 467.4 L775.6 467.8 L778.9 468.2 L782.3 468.6 L785.7 469.1 L789.0 469.6 L792.3 470.1 L795.7 470.6 L799.0 471.2 L802.3 471.8 L805.7 472.5 L809.0 473.2 L812.3 473.9 L815.6 474.7 L818.9 475.5 L822.1 476.3 L825.4 477.2 L828.7 478.1 L831.9 479.0 L835.2 480.0 L838.4 481.0 L841.6 482.1 L844.8 483.2 L848.0 484.4 L851.1 485.6 L854.3 486.8 L857.4 488.1 L860.5 489.4 L863.6 490.8 L866.7 492.3 L869.7 493.7 L872.8 495.2 L875.8 496.8 L878.8 498.4 L881.8 499.9 L884.7 501.5 L887.7 503.1 L890.8 504.6 L893.8 506.1 L896.8 507.6 L899.9 509.0 L903.0 510.4" fill="none" stroke="#afa99d" stroke-width="4.91"/>
<path d="M530.9 541.3 L532.9 538.7 L535.1 536.2 L537.3 533.7 L539.5 531.2 L541.8 528.8 L544.2 526.5 L546.7 524.2 L549.2 522.0 L551.7 519.9 L554.4 517.8 L557.0 515.8 L559.7 513.8 L562.5 511.9 L565.3 510.1 L568.2 508.3 L571.0 506.6 L573.9 504.9 L576.9 503.3 L579.9 501.8 L582.9 500.3 L585.9 498.8 L588.9 497.5 L592.0 496.1 L595.1 494.8 L598.2 493.5 L601.3 492.3 L604.4 491.1 L607.6 489.9 L610.7 488.8 L613.9 487.7 L617.1 486.7 L620.3 485.7 L623.5 484.7 L626.7 483.7 L629.9 482.8 L633.1 481.9 L636.4 481.0 L639.6 480.2 L642.8 479.3 L646.1 478.5 L649.4 477.8 L652.6 477.1 L655.9 476.3 L659.2 475.7 L662.5 475.0 L665.8 474.4 L669.1 473.8 L672.4 473.2 L675.7 472.7 L679.0 472.2 L682.3 471.7 L685.6 471.3 L689.0 470.9 L692.3 470.5 L695.6 470.1 L699.0 469.8 L702.3 469.5 L705.6 469.2 L709.0 469.0 L712.3 468.7 L715.7 468.6 L719.0 468.4 L722.4 468.3 L725.7 468.2 L729.1 468.1 L732.4 468.1 L735.8 468.0 L739.1 468.1 L742.5 468.1 L745.8 468.2 L749.2 468.3 L752.5 468.5 L755.9 468.7 L759.2 468.9 L762.6 469.1 L765.9 469.4 L769.2 469.7 L772.6 470.0 L775.9 470.4 L779.2 470.7 L782.6 471.2 L785.9 471.6 L789.2 472.1 L792.5 472.6 L795.8 473.2 L799.1 473.7 L802.4 474.4 L805.7 475.0 L809.0 475.7 L812.3 476.4 L815.5 477.2 L818.8 478.0 L822.0 478.8 L825.3 479.7 L828.5 480.6 L831.7 481.5 L834.9 482.5 L838.1 483.5 L841.3 484.6 L844.4 485.7 L847.6 486.9 L850.7 488.1 L853.8 489.3 L856.9 490.6 L860.0 491.9 L863.1 493.3 L866.1 494.7 L869.1 496.1 L872.1 497.6 L875.1 499.2 L878.1 500.7 L881.1 502.3 L884.0 503.8 L887.0 505.4 L890.0 506.9 L893.0 508.4 L896.0 509.9 L899.0 511.3 L902.0 512.7" fill="none" stroke="#b2aca0" stroke-width="4.91"/>
<path d="M533.9 543.3 L535.9 540.6 L537.9 538.1 L540.0 535.6 L542.2 533.1 L544.4 530.7 L546.8 528.3 L549.2 526.1 L551.6 523.8 L554.1 521.7 L556.7 519.6 L559.4 517.6 L562.0 515.6 L564.8 513.7 L567.5 511.9 L570.4 510.2 L573.2 508.5 L576.1 506.9 L579.0 505.3 L582.0 503.8 L585.0 502.3 L588.0 500.9 L591.0 499.5 L594.0 498.2 L597.1 496.9 L600.2 495.7 L603.3 494.5 L606.4 493.3 L609.5 492.2 L612.6 491.1 L615.8 490.1 L618.9 489.1 L622.1 488.1 L625.3 487.1 L628.4 486.1 L631.6 485.2 L634.8 484.3 L638.0 483.5 L641.3 482.6 L644.5 481.8 L647.7 481.1 L650.9 480.3 L654.2 479.6 L657.4 478.9 L660.7 478.2 L663.9 477.6 L667.2 476.9 L670.4 476.4 L673.7 475.8 L677.0 475.3 L680.3 474.8 L683.6 474.3 L686.9 473.8 L690.1 473.4 L693.4 473.0 L696.7 472.7 L700.0 472.3 L703.4 472.0 L706.7 471.8 L710.0 471.5 L713.3 471.3 L716.6 471.1 L719.9 470.9 L723.2 470.8 L726.5 470.7 L729.9 470.7 L733.2 470.6 L736.5 470.6 L739.8 470.6 L743.1 470.7 L746.5 470.8 L749.8 470.9 L753.1 471.0 L756.4 471.2 L759.7 471.4 L763.0 471.6 L766.3 471.9 L769.6 472.2 L772.9 472.5 L776.2 472.9 L779.5 473.3 L782.8 473.7 L786.1 474.2 L789.4 474.6 L792.7 475.2 L796.0 475.7 L799.2 476.3 L802.5 476.9 L805.7 477.5 L809.0 478.2 L812.2 479.0 L815.5 479.7 L818.7 480.5 L821.9 481.3 L825.1 482.2 L828.3 483.1 L831.5 484.0 L834.7 485.0 L837.8 486.1 L841.0 487.1 L844.1 488.2 L847.2 489.4 L850.3 490.5 L853.4 491.8 L856.5 493.0 L859.5 494.4 L862.5 495.7 L865.5 497.1 L868.5 498.5 L871.5 500.0 L874.5 501.5 L877.4 503.1 L880.4 504.6 L883.3 506.1 L886.2 507.7 L889.2 509.2 L892.1 510.7 L895.1 512.2 L898.1 513.6 L901.1 515.0" fill="none" stroke="#b2aca0" stroke-width="4.91"/>
<path d="M536.9 545.2 L538.8 542.6 L540.7 540.0 L542.8 537.4 L544.9 535.0 L547.1 532.5 L549.3 530.2 L551.7 527.9 L554.1 525.6 L556.5 523.5 L559.1 521.4 L561.7 519.4 L564.3 517.5 L567.0 515.6 L569.8 513.8 L572.6 512.0 L575.4 510.4 L578.3 508.8 L581.2 507.2 L584.1 505.7 L587.1 504.3 L590.0 502.9 L593.0 501.6 L596.1 500.3 L599.1 499.1 L602.2 497.9 L605.2 496.7 L608.3 495.6 L611.4 494.5 L614.5 493.4 L617.6 492.4 L620.8 491.4 L623.9 490.4 L627.1 489.5 L630.2 488.6 L633.4 487.7 L636.5 486.8 L639.7 486.0 L642.9 485.1 L646.1 484.3 L649.3 483.6 L652.5 482.8 L655.7 482.1 L658.9 481.4 L662.1 480.7 L665.4 480.1 L668.6 479.5 L671.8 478.9 L675.1 478.4 L678.3 477.8 L681.6 477.3 L684.8 476.9 L688.1 476.4 L691.3 476.0 L694.6 475.6 L697.9 475.2 L701.1 474.9 L704.4 474.6 L707.7 474.3 L711.0 474.1 L714.2 473.9 L717.5 473.7 L720.8 473.5 L724.1 473.4 L727.4 473.3 L730.7 473.2 L733.9 473.2 L737.2 473.1 L740.5 473.2 L743.8 473.2 L747.1 473.3 L750.4 473.4 L753.7 473.6 L756.9 473.8 L760.2 474.0 L763.5 474.2 L766.8 474.5 L770.0 474.8 L773.3 475.1 L776.6 475.4 L779.8 475.8 L783.1 476.2 L786.4 476.7 L789.6 477.2 L792.9 477.7 L796.1 478.2 L799.3 478.8 L802.6 479.4 L805.8 480.1 L809.0 480.8 L812.2 481.5 L815.4 482.2 L818.6 483.0 L821.8 483.9 L825.0 484.7 L828.1 485.6 L831.3 486.6 L834.4 487.5 L837.5 488.6 L840.6 489.6 L843.7 490.7 L846.8 491.9 L849.9 493.0 L852.9 494.3 L856.0 495.5 L859.0 496.8 L862.0 498.2 L865.0 499.5 L867.9 501.0 L870.9 502.4 L873.8 503.9 L876.7 505.4 L879.6 506.9 L882.6 508.5 L885.5 510.0 L888.4 511.5 L891.3 513.0 L894.3 514.5 L897.2 515.9 L900.2 517.3" fill="none" stroke="#b1ab9f" stroke-width="4.91"/>
<path d="M540.0 547.2 L541.7 544.5 L543.6 541.9 L545.5 539.3 L547.6 536.8 L549.7 534.4 L551.9 532.0 L554.2 529.7 L556.5 527.4 L558.9 525.3 L561.4 523.2 L564.0 521.2 L566.6 519.3 L569.3 517.4 L572.0 515.6 L574.8 513.9 L577.6 512.3 L580.4 510.7 L583.3 509.2 L586.2 507.7 L589.2 506.3 L592.1 505.0 L595.1 503.7 L598.1 502.4 L601.1 501.2 L604.2 500.1 L607.2 498.9 L610.3 497.8 L613.3 496.8 L616.4 495.7 L619.5 494.7 L622.6 493.8 L625.7 492.8 L628.9 491.9 L632.0 491.0 L635.1 490.1 L638.3 489.3 L641.4 488.4 L644.6 487.6 L647.7 486.8 L650.9 486.1 L654.1 485.3 L657.2 484.6 L660.4 483.9 L663.6 483.3 L666.8 482.6 L670.0 482.0 L673.2 481.5 L676.4 480.9 L679.6 480.4 L682.8 479.9 L686.0 479.4 L689.3 479.0 L692.5 478.5 L695.7 478.2 L699.0 477.8 L702.2 477.5 L705.4 477.2 L708.7 476.9 L711.9 476.6 L715.2 476.4 L718.4 476.2 L721.7 476.1 L724.9 475.9 L728.2 475.8 L731.4 475.8 L734.7 475.7 L737.9 475.7 L741.2 475.7 L744.5 475.8 L747.7 475.9 L751.0 476.0 L754.2 476.1 L757.5 476.3 L760.7 476.5 L764.0 476.7 L767.2 477.0 L770.4 477.3 L773.7 477.6 L776.9 478.0 L780.2 478.4 L783.4 478.8 L786.6 479.2 L789.8 479.7 L793.0 480.2 L796.2 480.8 L799.4 481.3 L802.6 482.0 L805.8 482.6 L809.0 483.3 L812.2 484.0 L815.4 484.8 L818.5 485.5 L821.7 486.4 L824.8 487.2 L827.9 488.1 L831.0 489.1 L834.1 490.0 L837.2 491.1 L840.3 492.1 L843.4 493.2 L846.4 494.3 L849.5 495.5 L852.5 496.7 L855.5 498.0 L858.5 499.3 L861.5 500.6 L864.4 502.0 L867.3 503.4 L870.3 504.8 L873.2 506.3 L876.1 507.8 L878.9 509.3 L881.8 510.8 L884.7 512.3 L887.6 513.8 L890.5 515.3 L893.4 516.8 L896.3 518.2 L899.2 519.6" fill="none" stroke="#afa99d" stroke-width="4.91"/>
<path d="M543.0 549.1 L544.7 546.4 L546.4 543.8 L548.3 541.2 L550.2 538.7 L552.3 536.2 L554.4 533.8 L556.6 531.5 L559.0 529.2 L561.3 527.1 L563.8 525.0 L566.3 523.0 L568.9 521.1 L571.6 519.2 L574.2 517.5 L577.0 515.8 L579.8 514.2 L582.6 512.6 L585.5 511.1 L588.3 509.7 L591.3 508.4 L594.2 507.0 L597.2 505.8 L600.2 504.6 L603.1 503.4 L606.2 502.3 L609.2 501.2 L612.2 500.1 L615.3 499.1 L618.3 498.1 L621.4 497.1 L624.5 496.1 L627.6 495.2 L630.7 494.3 L633.8 493.4 L636.9 492.6 L640.0 491.7 L643.1 490.9 L646.2 490.1 L649.3 489.3 L652.5 488.6 L655.6 487.9 L658.8 487.2 L661.9 486.5 L665.1 485.8 L668.2 485.2 L671.4 484.6 L674.6 484.0 L677.7 483.5 L680.9 482.9 L684.1 482.4 L687.3 482.0 L690.5 481.5 L693.7 481.1 L696.9 480.7 L700.1 480.4 L703.3 480.0 L706.5 479.7 L709.7 479.4 L712.9 479.2 L716.1 479.0 L719.3 478.8 L722.6 478.6 L725.8 478.5 L729.0 478.4 L732.2 478.3 L735.4 478.3 L738.7 478.3 L741.9 478.3 L745.1 478.3 L748.3 478.4 L751.6 478.5 L754.8 478.7 L758.0 478.8 L761.2 479.1 L764.4 479.3 L767.6 479.5 L770.8 479.8 L774.1 480.2 L777.3 480.5 L780.5 480.9 L783.6 481.3 L786.8 481.8 L790.0 482.2 L793.2 482.8 L796.4 483.3 L799.6 483.9 L802.7 484.5 L805.9 485.1 L809.0 485.8 L812.2 486.5 L815.3 487.3 L818.4 488.1 L821.5 488.9 L824.6 489.8 L827.7 490.6 L830.8 491.6 L833.9 492.6 L837.0 493.6 L840.0 494.6 L843.0 495.7 L846.1 496.8 L849.1 498.0 L852.0 499.2 L855.0 500.4 L858.0 501.7 L860.9 503.0 L863.8 504.4 L866.8 505.8 L869.6 507.2 L872.5 508.7 L875.4 510.1 L878.2 511.6 L881.1 513.1 L884.0 514.6 L886.8 516.1 L889.7 517.6 L892.5 519.0 L895.4 520.5 L898.3 521.9" fill="none" stroke="#aea89c" stroke-width="4.91"/>
<path d="M546.0 551.1 L547.6 548.4 L549.3 545.7 L551.1 543.1 L552.9 540.5 L554.9 538.0 L557.0 535.6 L559.1 533.3 L561.4 531.1 L563.7 528.9 L566.2 526.8 L568.6 524.8 L571.2 522.9 L573.8 521.1 L576.5 519.3 L579.2 517.7 L582.0 516.1 L584.8 514.5 L587.6 513.1 L590.5 511.7 L593.4 510.4 L596.3 509.1 L599.2 507.9 L602.2 506.7 L605.2 505.5 L608.2 504.4 L611.2 503.4 L614.2 502.3 L617.2 501.3 L620.2 500.4 L623.3 499.4 L626.3 498.5 L629.4 497.6 L632.5 496.7 L635.5 495.8 L638.6 495.0 L641.7 494.2 L644.8 493.4 L647.9 492.6 L651.0 491.8 L654.1 491.1 L657.2 490.4 L660.3 489.7 L663.4 489.0 L666.5 488.4 L669.7 487.7 L672.8 487.1 L675.9 486.6 L679.1 486.0 L682.2 485.5 L685.4 485.0 L688.5 484.5 L691.7 484.1 L694.9 483.7 L698.0 483.3 L701.2 482.9 L704.4 482.6 L707.5 482.3 L710.7 482.0 L713.9 481.7 L717.1 481.5 L720.3 481.3 L723.5 481.2 L726.6 481.0 L729.8 480.9 L733.0 480.9 L736.2 480.8 L739.4 480.8 L742.6 480.8 L745.8 480.9 L749.0 481.0 L752.2 481.1 L755.3 481.2 L758.5 481.4 L761.7 481.6 L764.9 481.8 L768.1 482.1 L771.2 482.4 L774.4 482.7 L777.6 483.1 L780.8 483.4 L783.9 483.9 L787.1 484.3 L790.2 484.8 L793.4 485.3 L796.5 485.8 L799.7 486.4 L802.8 487.0 L805.9 487.7 L809.0 488.3 L812.1 489.1 L815.2 489.8 L818.3 490.6 L821.4 491.4 L824.5 492.3 L827.6 493.2 L830.6 494.1 L833.6 495.1 L836.7 496.1 L839.7 497.1 L842.7 498.2 L845.7 499.3 L848.6 500.5 L851.6 501.7 L854.5 502.9 L857.5 504.2 L860.4 505.5 L863.3 506.8 L866.2 508.2 L869.0 509.6 L871.9 511.0 L874.7 512.5 L877.5 513.9 L880.4 515.4 L883.2 516.9 L886.0 518.4 L888.9 519.9 L891.7 521.3 L894.5 522.8 L897.4 524.2" fill="none" stroke="#aca69a" stroke-width="4.91"/>
<path d="M549.0 553.1 L550.5 550.3 L552.1 547.6 L553.8 545.0 L555.6 542.4 L557.5 539.9 L559.5 537.5 L561.6 535.1 L563.8 532.9 L566.1 530.7 L568.5 528.6 L571.0 526.6 L573.5 524.7 L576.1 522.9 L578.7 521.2 L581.4 519.5 L584.1 518.0 L586.9 516.5 L589.7 515.0 L592.6 513.7 L595.5 512.4 L598.4 511.1 L601.3 509.9 L604.2 508.8 L607.2 507.7 L610.2 506.6 L613.1 505.6 L616.1 504.6 L619.1 503.6 L622.1 502.7 L625.2 501.7 L628.2 500.9 L631.2 500.0 L634.3 499.1 L637.3 498.3 L640.4 497.5 L643.4 496.6 L646.5 495.9 L649.5 495.1 L652.6 494.3 L655.7 493.6 L658.7 492.9 L661.8 492.2 L664.9 491.5 L668.0 490.9 L671.1 490.3 L674.2 489.7 L677.3 489.1 L680.4 488.6 L683.5 488.0 L686.7 487.5 L689.8 487.1 L692.9 486.6 L696.0 486.2 L699.2 485.8 L702.3 485.5 L705.4 485.1 L708.6 484.8 L711.7 484.6 L714.9 484.3 L718.0 484.1 L721.2 483.9 L724.3 483.7 L727.5 483.6 L730.6 483.5 L733.8 483.4 L737.0 483.4 L740.1 483.4 L743.3 483.4 L746.4 483.4 L749.6 483.5 L752.7 483.6 L755.9 483.8 L759.1 483.9 L762.2 484.2 L765.4 484.4 L768.5 484.6 L771.6 484.9 L774.8 485.2 L777.9 485.6 L781.1 486.0 L784.2 486.4 L787.3 486.8 L790.4 487.3 L793.6 487.8 L796.7 488.4 L799.8 488.9 L802.9 489.5 L806.0 490.2 L809.0 490.9 L812.1 491.6 L815.2 492.3 L818.2 493.1 L821.3 493.9 L824.3 494.8 L827.4 495.7 L830.4 496.6 L833.4 497.6 L836.4 498.6 L839.4 499.6 L842.3 500.7 L845.3 501.8 L848.2 503.0 L851.1 504.2 L854.1 505.4 L857.0 506.6 L859.8 507.9 L862.7 509.3 L865.6 510.6 L868.4 512.0 L871.2 513.4 L874.0 514.8 L876.8 516.3 L879.6 517.7 L882.4 519.2 L885.2 520.7 L888.0 522.1 L890.8 523.6 L893.6 525.1 L896.4 526.5" fill="none" stroke="#aba599" stroke-width="4.91"/>
<path d="M552.0 555.0 L553.5 552.2 L555.0 549.5 L556.6 546.8 L558.3 544.2 L560.1 541.7 L562.1 539.3 L564.1 536.9 L566.3 534.7 L568.5 532.5 L570.9 530.4 L573.3 528.4 L575.8 526.5 L578.3 524.7 L580.9 523.0 L583.6 521.4 L586.3 519.8 L589.1 518.4 L591.9 517.0 L594.7 515.7 L597.6 514.4 L600.5 513.2 L603.4 512.0 L606.3 510.9 L609.2 509.8 L612.2 508.8 L615.1 507.8 L618.1 506.8 L621.1 505.9 L624.1 505.0 L627.0 504.1 L630.1 503.2 L633.1 502.4 L636.1 501.5 L639.1 500.7 L642.1 499.9 L645.1 499.1 L648.2 498.3 L651.2 497.6 L654.2 496.8 L657.3 496.1 L660.3 495.4 L663.4 494.7 L666.4 494.1 L669.5 493.4 L672.5 492.8 L675.6 492.2 L678.7 491.7 L681.8 491.1 L684.8 490.6 L687.9 490.1 L691.0 489.6 L694.1 489.2 L697.2 488.8 L700.3 488.4 L703.4 488.0 L706.5 487.7 L709.6 487.4 L712.7 487.1 L715.9 486.9 L719.0 486.6 L722.1 486.5 L725.2 486.3 L728.3 486.2 L731.5 486.0 L734.6 486.0 L737.7 485.9 L740.8 485.9 L744.0 485.9 L747.1 486.0 L750.2 486.1 L753.3 486.2 L756.5 486.3 L759.6 486.5 L762.7 486.7 L765.8 486.9 L768.9 487.2 L772.0 487.5 L775.2 487.8 L778.3 488.1 L781.4 488.5 L784.5 488.9 L787.6 489.4 L790.6 489.9 L793.7 490.4 L796.8 490.9 L799.9 491.5 L802.9 492.1 L806.0 492.7 L809.1 493.4 L812.1 494.1 L815.1 494.9 L818.2 495.6 L821.2 496.5 L824.2 497.3 L827.2 498.2 L830.2 499.1 L833.1 500.1 L836.1 501.1 L839.0 502.1 L842.0 503.2 L844.9 504.3 L847.8 505.5 L850.7 506.6 L853.6 507.9 L856.4 509.1 L859.3 510.4 L862.1 511.7 L865.0 513.0 L867.8 514.4 L870.6 515.8 L873.4 517.2 L876.1 518.6 L878.9 520.1 L881.7 521.5 L884.5 523.0 L887.2 524.4 L890.0 525.9 L892.7 527.4 L895.5 528.8" fill="none" stroke="#aaa498" stroke-width="4.91"/>
<path d="M553.6 556.0 L554.5 554.1 L555.4 552.2 L556.4 550.4 L557.5 548.5 L558.6 546.7 L559.9 544.8 L561.1 543.0 L562.5 541.2 L564.0 539.4 L565.5 537.6 L567.2 535.9 L569.0 534.1 L570.8 532.4 L572.8 530.7 L574.9 529.0 L577.1 527.3 L579.4 525.7 L581.9 524.1 L584.4 522.5 L587.1 521.0 L590.0 519.5 L592.9 518.0 L596.0 516.5 L599.1 515.2 L602.4 513.8 L605.8 512.5 L609.2 511.2 L612.8 510.0 L616.4 508.8 L620.0 507.6 L623.7 506.5 L627.5 505.4 L631.2 504.3 L635.0 503.2 L638.9 502.2 L642.8 501.2 L646.7 500.1 L650.6 499.1 L654.6 498.2 L658.7 497.2 L662.8 496.3 L666.9 495.4 L671.1 494.5 L675.4 493.7 L679.8 492.9 L684.2 492.1 L688.6 491.4 L693.2 490.7 L697.8 490.1 L702.4 489.5 L707.1 489.0 L711.9 488.5 L716.6 488.1 L721.5 487.8 L726.4 487.5 L731.2 487.3 L736.2 487.2 L741.1 487.2 L746.0 487.2 L750.9 487.4 L755.9 487.6 L760.7 487.8 L765.6 488.2 L770.4 488.6 L775.2 489.0 L779.9 489.6 L784.6 490.2 L789.2 490.9 L793.7 491.6 L798.2 492.4 L802.5 493.2 L806.8 494.2 L811.1 495.1 L815.2 496.1 L819.2 497.2 L823.2 498.3 L827.0 499.4 L830.8 500.6 L834.4 501.8 L838.0 503.1 L841.5 504.3 L844.9 505.6 L848.2 507.0 L851.5 508.3 L854.7 509.7 L857.8 511.0 L860.9 512.4 L863.9 513.8 L866.8 515.2 L869.7 516.7 L872.6 518.1 L875.4 519.6 L878.2 521.0 L881.0 522.5 L883.8 524.0 L886.6 525.5 L889.4 527.0 L892.2 528.5 L895.0 530.0 L905 545 L620 600 L553 575 Z" fill="#bfbab0"/>
<path d="M553.6 556.0 L554.5 554.1 L555.4 552.2 L556.4 550.4 L557.5 548.5 L558.6 546.7 L559.9 544.8 L561.1 543.0 L562.5 541.2 L564.0 539.4 L565.5 537.6 L567.2 535.9 L569.0 534.1 L570.8 532.4 L572.8 530.7 L574.9 529.0 L577.1 527.3 L579.4 525.7 L581.9 524.1 L584.4 522.5 L587.1 521.0 L590.0 519.5 L592.9 518.0 L596.0 516.5 L599.1 515.2 L602.4 513.8 L605.8 512.5 L609.2 511.2 L612.8 510.0 L616.4 508.8 L620.0 507.6 L623.7 506.5 L627.5 505.4 L631.2 504.3 L635.0 503.2 L638.9 502.2 L642.8 501.2 L646.7 500.1 L650.6 499.1 L654.6 498.2 L658.7 497.2 L662.8 496.3 L666.9 495.4 L671.1 494.5 L675.4 493.7 L679.8 492.9 L684.2 492.1 L688.6 491.4 L693.2 490.7 L697.8 490.1 L702.4 489.5 L707.1 489.0 L711.9 488.5 L716.6 488.1 L721.5 487.8 L726.4 487.5 L731.2 487.3 L736.2 487.2 L741.1 487.2 L746.0 487.2 L750.9 487.4 L755.9 487.6 L760.7 487.8 L765.6 488.2 L770.4 488.6 L775.2 489.0 L779.9 489.6 L784.6 490.2 L789.2 490.9 L793.7 491.6 L798.2 492.4 L802.5 493.2 L806.8 494.2 L811.1 495.1 L815.2 496.1 L819.2 497.2 L823.2 498.3 L827.0 499.4 L830.8 500.6 L834.4 501.8 L838.0 503.1 L841.5 504.3 L844.9 505.6 L848.2 507.0 L851.5 508.3 L854.7 509.7 L857.8 511.0 L860.9 512.4 L863.9 513.8 L866.8 515.2 L869.7 516.7 L872.6 518.1 L875.4 519.6 L878.2 521.0 L881.0 522.5 L883.8 524.0 L886.6 525.5 L889.4 527.0 L892.2 528.5 L895.0 530.0" fill="none" stroke="#1e1e1c" stroke-width="2.6"/>
<path d="M557.2 560.0 L558.1 558.1 L559.0 556.2 L560.0 554.4 L561.0 552.5 L562.2 550.7 L563.4 548.8 L564.6 547.0 L566.0 545.2 L567.4 543.4 L568.9 541.6 L570.6 539.9 L572.3 538.1 L574.1 536.4 L576.0 534.7 L578.1 533.0 L580.2 531.3 L582.5 529.7 L584.9 528.1 L587.4 526.5 L590.1 525.0 L592.9 523.5 L595.7 522.0 L598.8 520.5 L601.9 519.2 L605.1 517.8 L608.4 516.5 L611.8 515.2 L615.2 514.0 L618.7 512.8 L622.3 511.6 L625.9 510.5 L629.6 509.4 L633.3 508.3 L637.0 507.2 L640.8 506.2 L644.6 505.2 L648.4 504.1 L652.3 503.1 L656.2 502.2 L660.2 501.2 L664.2 500.3 L668.3 499.4 L672.4 498.5 L676.6 497.7 L680.9 496.9 L685.2 496.1 L689.6 495.4 L694.0 494.7 L698.5 494.1 L703.1 493.5 L707.7 493.0 L712.3 492.5 L717.0 492.1 L721.8 491.8 L726.5 491.5 L731.3 491.3 L736.1 491.2 L741.0 491.2 L745.8 491.2 L750.6 491.4 L755.4 491.6 L760.2 491.8 L765.0 492.2 L769.7 492.6 L774.4 493.0 L779.0 493.6 L783.6 494.2 L788.1 494.9 L792.5 495.6 L796.9 496.4 L801.2 497.2 L805.4 498.2 L809.5 499.1 L813.6 500.1 L817.5 501.2 L821.4 502.3 L825.2 503.4 L828.9 504.6 L832.5 505.8 L836.0 507.1 L839.4 508.3 L842.7 509.6 L846.0 511.0 L849.2 512.3 L852.3 513.7 L855.3 515.0 L858.3 516.4 L861.3 517.8 L864.2 519.2 L867.0 520.7 L869.8 522.1 L872.6 523.6 L875.3 525.0 L878.1 526.5 L880.8 528.0 L883.5 529.5 L886.3 531.0 L889.0 532.5 L891.8 534.0" fill="none" stroke="#e2e1dc" stroke-width="3"/>
<path d="M559.0 562.5 L559.9 560.6 L560.8 558.7 L561.8 556.9 L562.8 555.0 L563.9 553.2 L565.1 551.3 L566.4 549.5 L567.7 547.7 L569.1 545.9 L570.6 544.1 L572.2 542.4 L574.0 540.6 L575.8 538.9 L577.7 537.2 L579.7 535.5 L581.8 533.8 L584.1 532.2 L586.5 530.6 L588.9 529.0 L591.6 527.5 L594.3 526.0 L597.2 524.5 L600.1 523.0 L603.2 521.7 L606.4 520.3 L609.7 519.0 L613.0 517.8 L616.4 516.5 L619.9 515.3 L623.5 514.1 L627.0 513.0 L630.7 511.9 L634.3 510.8 L638.0 509.8 L641.8 508.7 L645.5 507.7 L649.3 506.6 L653.2 505.6 L657.0 504.7 L661.0 503.7 L664.9 502.8 L669.0 501.9 L673.1 501.0 L677.2 500.2 L681.4 499.4 L685.7 498.6 L690.0 497.9 L694.4 497.2 L698.9 496.6 L703.4 496.0 L707.9 495.5 L712.5 495.0 L717.2 494.6 L721.9 494.3 L726.6 494.0 L731.4 493.8 L736.1 493.7 L740.9 493.7 L745.7 493.7 L750.5 493.9 L755.2 494.1 L760.0 494.3 L764.7 494.7 L769.3 495.1 L774.0 495.5 L778.5 496.1 L783.1 496.7 L787.5 497.4 L791.9 498.1 L796.3 498.9 L800.5 499.8 L804.7 500.7 L808.8 501.6 L812.8 502.6 L816.7 503.7 L820.5 504.8 L824.2 505.9 L827.9 507.1 L831.5 508.3 L834.9 509.6 L838.3 510.8 L841.6 512.1 L844.9 513.5 L848.0 514.8 L851.1 516.2 L854.1 517.5 L857.1 518.9 L860.0 520.3 L862.8 521.8 L865.7 523.2 L868.4 524.6 L871.2 526.1 L873.9 527.5 L876.6 529.0 L879.3 530.5 L882.0 532.0 L884.7 533.5 L887.5 535.0 L890.2 536.5" fill="none" stroke="#2a2a28" stroke-width="1"/>
<path d="M575 565 C590 532 640 512 735 504 C810 505 860 520 890 545" fill="none" stroke="#dedbd3" stroke-width="7" filter="url(#blur1)"/>
<path d="M585 572 C600 545 650 530 735 524 C800 525 850 535 880 552" fill="none" stroke="#6b6860" stroke-width="1.2"/>
<path d="M563.5 558 Q586 546 601.5 565" fill="none" stroke="#242422" stroke-width="4" stroke-linecap="round"/>
<path d="M563.5 558 Q586 546 601.5 565" fill="none" stroke="#a29f98" stroke-width="2" stroke-linecap="round"/>
<path d="M573.7 544.5 Q595 534 608.6 552" fill="none" stroke="#242422" stroke-width="4" stroke-linecap="round"/>
<path d="M573.7 544.5 Q595 534 608.6 552" fill="none" stroke="#a29f98" stroke-width="2" stroke-linecap="round"/>
<path d="M588 529.5 Q603 523 611 536" fill="none" stroke="#242422" stroke-width="4" stroke-linecap="round"/>
<path d="M588 529.5 Q603 523 611 536" fill="none" stroke="#a29f98" stroke-width="2" stroke-linecap="round"/>
<path d="M614.7 515 Q630 510 636.3 530" fill="none" stroke="#242422" stroke-width="4" stroke-linecap="round"/>
<path d="M614.7 515 Q630 510 636.3 530" fill="none" stroke="#a29f98" stroke-width="2" stroke-linecap="round"/>
<path d="M636.3 505 Q650 500 654.7 521" fill="none" stroke="#242422" stroke-width="4" stroke-linecap="round"/>
<path d="M636.3 505 Q650 500 654.7 521" fill="none" stroke="#a29f98" stroke-width="2" stroke-linecap="round"/>
<path d="M806.5 521 Q811 507 824 503.4" fill="none" stroke="#242422" stroke-width="4" stroke-linecap="round"/>
<path d="M806.5 521 Q811 507 824 503.4" fill="none" stroke="#a29f98" stroke-width="2" stroke-linecap="round"/>
<path d="M825 530 Q831 517 846.9 514.2" fill="none" stroke="#242422" stroke-width="4" stroke-linecap="round"/>
<path d="M825 530 Q831 517 846.9 514.2" fill="none" stroke="#a29f98" stroke-width="2" stroke-linecap="round"/>
<path d="M575 580 C590 552 640 525 700 515" fill="none" stroke="#3a3a38" stroke-width="1"/>
<path d="M492.2 506.1 L494.9 503.6 L497.5 501.2 L500.2 498.8 L502.9 496.4 L505.5 494.1 L508.2 491.8 L510.9 489.5 L513.5 487.2 L516.3 484.9 L519.0 482.7 L521.8 480.5 L524.6 478.2 L527.5 476.1 L530.5 473.9 L533.5 471.7 L536.6 469.5 L539.8 467.4 L543.0 465.2 L546.4 463.1 L549.8 461.0 L553.3 458.9 L557.0 456.8 L560.8 454.8 L564.6 452.8 L568.6 450.8 L572.8 448.8 L577.0 446.9 L581.4 445.0 L586.0 443.1 L590.6 441.3 L595.4 439.5 L600.4 437.8 L605.4 436.1 L610.6 434.5 L616.0 433.0 L621.5 431.5 L627.1 430.1 L632.8 428.7 L638.7 427.4 L644.7 426.2 L650.8 425.1 L656.9 424.1 L663.2 423.2 L669.6 422.3 L676.0 421.6 L682.5 420.9 L689.0 420.3 L695.6 419.8 L702.3 419.4 L709.0 419.0 L715.7 418.8 L722.4 418.6 L729.1 418.6 L735.8 418.6 L742.5 418.7 L749.2 418.9 L755.9 419.2 L762.6 419.6 L769.2 420.0 L775.7 420.6 L782.2 421.2 L788.7 421.9 L795.0 422.6 L801.4 423.5 L807.6 424.4 L813.7 425.4 L819.8 426.5 L825.8 427.6 L831.6 428.9 L837.4 430.1 L843.0 431.5 L848.5 432.9 L853.9 434.4 L859.2 435.9 L864.4 437.5 L869.4 439.1 L874.3 440.8 L879.0 442.6 L883.6 444.4 L888.1 446.2 L892.4 448.1 L896.6 450.0 L900.6 452.0 L904.5 454.0 L908.2 456.0 L911.7 458.1 L915.1 460.2 L918.4 462.3 L921.5 464.5 L924.4 466.7 L927.2 468.9 L929.8 471.1 L932.3 473.4 L934.6 475.6 L936.8 477.9 L938.8 480.2" stroke="#161616" fill="none" stroke-width="1.2"/>
<path d="M517.3 532.5 L519.5 530.3 L521.7 528.2 L523.9 526.1 L526.2 524.0 L528.5 522.0 L530.8 519.9 L533.2 517.9 L535.6 516.0 L538.0 514.0 L540.5 512.1 L543.1 510.2 L545.7 508.3 L548.3 506.4 L551.0 504.6 L553.8 502.7 L556.6 500.9 L559.5 499.1 L562.4 497.3 L565.5 495.6 L568.6 493.8 L571.7 492.1 L575.0 490.4 L578.3 488.7 L581.8 487.1 L585.3 485.4 L588.9 483.8 L592.6 482.2 L596.4 480.7 L600.3 479.2 L604.2 477.7 L608.3 476.2 L612.5 474.8 L616.8 473.4 L621.2 472.0 L625.7 470.7 L630.2 469.5 L634.9 468.2 L639.7 467.1 L644.6 465.9 L649.5 464.9 L654.6 463.9 L659.7 462.9 L664.9 462.0 L670.2 461.1 L675.6 460.4 L681.0 459.7 L686.5 459.0 L692.1 458.4 L697.7 457.9 L703.3 457.5 L709.0 457.2 L714.7 456.9 L720.5 456.7 L726.2 456.6 L732.0 456.6 L737.8 456.6 L743.5 456.7 L749.3 457.0 L755.0 457.3 L760.6 457.6 L766.2 458.1 L771.8 458.6 L777.3 459.2 L782.7 459.9 L788.1 460.6 L793.4 461.5 L798.6 462.3 L803.7 463.3 L808.7 464.3 L813.6 465.3 L818.5 466.4 L823.2 467.6 L827.8 468.8 L832.3 470.1 L836.6 471.4 L840.9 472.8 L845.1 474.1 L849.1 475.6 L853.0 477.0 L856.8 478.5 L860.5 480.1 L864.1 481.6 L867.5 483.2 L870.8 484.8 L874.1 486.4 L877.2 488.1 L880.3 489.7 L883.4 491.3 L886.4 493.0 L889.5 494.6 L892.6 496.2 L895.8 497.8 L899.2 499.3 L902.6 500.9 L906.2 502.4" stroke="#161616" fill="none" stroke-width="1.2"/>
<path d="M549.5 291.5 V462 Q552 482 567.5 493.7" stroke="#161616" fill="none" stroke-width="1.2"/>
<path d="M666.2 548 V520 A65 66.5 0 0 1 796.2 520 V548 Z" fill="url(#gDome)"/>
<path d="M666.2 548 V520 A65 66.5 0 0 1 680 480 M796.2 548 V520 A65 66.5 0 0 0 782 480" fill="none" stroke="#1e1e1e" stroke-width="1.1"/>
<ellipse cx="731" cy="468" rx="6.3" ry="3.8" fill="#cfcdc7" stroke="#1e1e1e" stroke-width="1"/>
<path d="M668.4 548 L674.6 510 Q677.2 504.5 679.9 510 L673.6 548 Z" fill="#77746c" stroke="#1e1e1e" stroke-width="1"/>
<path d="M685.0 548 L689.0 521 Q691.6 515.5 694.2 521 L690.2 548 Z" fill="#77746c" stroke="#1e1e1e" stroke-width="1"/>
<path d="M707.9 548 L709.4 530 Q712.0 524.5 714.6 530 L713.1 548 Z" fill="#77746c" stroke="#1e1e1e" stroke-width="1"/>
<path d="M735.1 548 L735.1 532 Q737.7 526.5 740.3 532 L740.3 548 Z" fill="#77746c" stroke="#1e1e1e" stroke-width="1"/>
<path d="M761.2 548 L759.7 528 Q762.3 522.5 764.9 528 L766.4 548 Z" fill="#77746c" stroke="#1e1e1e" stroke-width="1"/>
<path d="M780.8 548 L776.8 517 Q779.4 511.5 782.0 517 L786.0 548 Z" fill="#77746c" stroke="#1e1e1e" stroke-width="1"/>
<path d="M610.7 527.0 L671.6 536.5 L743.3 542.3 L815.0 535.3 L874.6 518.5 L917.6 501.5 L936.1 491.6 L936.1 625 L610.7 625 Z" fill="url(#gDark)"/>
<path d="M610.7 527.0 L671.6 536.5 L743.3 542.3 L815.0 535.3 L874.6 518.5 L917.6 501.5 L936.1 491.6 L936.1 625 L610.7 625 Z" fill="url(#gDarkV)"/>
<path d="M994.3 392.6 L994.2 397.3 L993.9 401.9 L993.3 406.5 L992.5 411.1 L991.3 415.6 L990.0 420.1 L988.4 424.5 L986.5 428.8 L984.5 433.1 L982.3 437.3 L979.9 441.5 L977.3 445.5 L974.6 449.5 L971.8 453.4 L968.8 457.2 L965.8 461.0 L962.6 464.6 L959.4 468.2 L956.2 471.7 L952.9 475.2 L949.5 478.6 L946.1 481.9 L942.8 485.2 L939.4 488.4 L936.0 491.6 L993.9 500 Z" fill="url(#gRight)"/>
<path d="M934.6 493.0 L939.6 492.4 L944.6 491.7 L949.6 491.0 L954.6 490.4 L959.6 490.1 L964.6 490.0 L969.8 490.2 L975.1 490.6 L980.5 491.3 L985.7 492.1 L990.7 493.2 L995.4 494.6 L999.2 496.0 L1002.8 497.5 L1006.2 499.2 L1009.5 501.1 L1012.5 503.2 L1015.4 505.4 L1017.9 507.7 L1020.3 510.2 L1022.6 512.9 L1024.6 515.6 L1026.3 518.2 L1027.7 520.8 L1028.5 522.6 L1029.1 524.4 L1029.5 526.2 L1029.8 528.0 L1030.0 529.7 L1030.0 531.5 L1029.9 533.3 L1029.6 535.2 L1029.1 537.0 L1028.5 538.8 L1027.8 540.6 L1026.9 542.3 L1025.7 544.2 L1024.2 546.1 L1022.5 548.0 L1020.7 549.7 L1018.8 551.4 L1016.9 553.0 L1014.9 554.5 L1012.7 555.8 L1010.5 557.0 L1008.2 558.2 L1005.7 559.5 L1003.0 560.8 L998.6 562.9 L993.7 565.2 L988.4 567.6 L983.0 570.0 L977.6 572.3 L972.3 574.6 L967.2 576.8 L962.1 578.9 L956.9 581.0 L951.8 583.1 L946.7 585.0 L941.5 586.9 L936.4 588.6 L931.3 590.3 L926.3 591.9 L921.2 593.4 L916.0 594.8 L910.8 596.2 L905.3 597.6 L899.8 598.9 L894.1 600.2 L888.5 601.4 L883.1 602.5 L877.9 603.5 L873.7 604.2 L869.7 604.8 L865.8 605.3 L861.9 605.8 L858.0 606.3 L854.1 606.8 L916.6 600 L916.4 500.6 Z" fill="url(#gEnd)"/>
<path d="M1030.0 531.5 L1029.9 533.3 L1029.6 535.2 L1029.1 537.0 L1028.5 538.8 L1027.8 540.6 L1026.9 542.3 L1025.7 544.2 L1024.2 546.1 L1022.5 548.0 L1020.7 549.7 L1018.8 551.4 L1016.9 553.0 L1014.9 554.5 L1012.7 555.8 L1010.5 557.0 L1008.2 558.2 L1005.7 559.5 L1003.0 560.8 L998.6 562.9 L993.7 565.2 L988.4 567.6 L983.0 570.0 L977.6 572.3 L972.3 574.6 L967.2 576.8 L962.1 578.9 L956.9 581.0 L951.8 583.1 L946.7 585.0 L941.5 586.9 L936.4 588.6 L931.3 590.3 L926.3 591.9 L921.2 593.4 L916.0 594.8 L910.8 596.2 L905.3 597.6 L899.8 598.9 L894.1 600.2 L888.5 601.4 L883.1 602.5 L877.9 603.5 L873.7 604.2 L869.7 604.8 L865.8 605.3 L861.9 605.8 L858.0 606.3 L854.1 606.8 L846.2 607.6 L838.4 608.4 L830.5 609.0 L822.8 609.5 L815.0 609.9 L807.3 610.2 L799.7 610.4 L792.1 610.5 L784.5 610.5 L777.0 610.5 L769.5 610.3 L762.1 610.1 L754.8 609.7 L747.5 609.3 L740.2 608.9 L733.0 608.3 L725.8 607.7 L718.7 607.0 L711.6 606.3 L704.5 605.5 L697.5 604.6 L690.5 603.7 L683.6 602.8 L676.6 601.7 L669.8 600.6 L662.9 599.4 L656.1 598.1 L649.3 596.7 L642.6 595.2 L636.0 593.6 L629.4 591.8 L622.9 590.0 L616.5 588.0 L610.1 586.0 L603.9 583.8 L597.7 581.4 L591.7 579.0 L585.7 576.5 L579.9 573.9 L574.1 571.2 L568.5 568.4 L562.9 565.6 L557.4 562.7 L552.0 559.7 L546.6 556.6 L541.4 553.5 L536.3 550.2 L531.3 546.9 L526.4 543.5 L521.7 540.0 L517.2 536.4 L512.9 532.7 L508.7 528.9 L504.7 525.1 L500.8 521.1 L497.1 517.2 L493.4 513.2 L489.7 509.1 L486.1 505.1 L482.6 501.0 L479.0 496.8 L475.6 492.6 L472.2 488.4 L469.0 484.1 L465.9 479.7 L463.0 475.2 L460.3 470.7 L457.8 466.1 L455.6 461.5 L453.6 456.8 L451.9 452.0 L450.6 447.2 L449.6 442.3 L448.9 437.4 L448.5 432.5 L448.4 427.6 L448.8 589.5 L449.2 589.5 L449.0 594.3 L448.9 599.1 L449.1 603.8 L449.4 608.6 L450.0 613.4 L450.8 618.1 L451.9 622.8 L453.1 627.5 L454.6 632.2 L456.2 636.9 L458.1 641.5 L460.2 646.0 L462.4 650.6 L464.9 655.1 L467.6 659.5 L470.4 664.0 L473.5 668.3 L476.7 672.6 L480.1 676.9 L483.7 681.0 L487.5 685.2 L491.4 689.2 L495.5 693.2 L499.8 697.2 L504.2 701.0 L508.8 704.8 L513.5 708.5 L518.4 712.1 L523.5 715.7 L528.6 719.2 L534.0 722.6 L539.4 725.9 L545.0 729.1 L550.7 732.3 L556.5 735.3 L562.5 738.3 L568.5 741.2 L574.7 744.0 L581.0 746.7 L587.4 749.3 L593.9 751.8 L600.4 754.2 L607.1 756.6 L613.9 758.8 L620.8 761.0 L627.7 763.0 L634.7 765.0 L641.8 766.8 L649.0 768.6 L656.2 770.2 L663.6 771.8 L671.0 773.3 L678.4 774.6 L685.9 775.9 L693.5 777.1 L701.1 778.2 L708.8 779.1 L716.6 780.0 L724.4 780.8 L732.2 781.4 L740.1 782.0 L748.0 782.5 L756.0 782.8 L764.0 783.0 L772.0 783.1 L780.0 783.2 L788.1 783.0 L796.2 782.8 L804.4 782.5 L812.5 782.0 L820.7 781.4 L828.8 780.7 L837.0 779.8 L845.1 778.9 L853.2 777.8 L861.4 776.5 L869.5 775.1 L877.5 773.6 L885.5 772.0 L893.5 770.2 L901.4 768.3 L909.3 766.3 L917.1 764.1 L924.9 761.8 L932.6 759.4 L940.3 756.9 L948.0 754.3 L955.6 751.6 L963.1 748.8 L970.6 745.8 L978.1 742.8 L985.5 739.6 L992.7 736.2 L999.6 732.7 L1006.1 728.8 L1012.1 724.7 L1017.5 720.3 L1022.2 715.6 L1026.0 710.6 L1028.8 705.2 L1030.5 699.5 Z" fill="url(#gFront)"/>
<path d="M1030.0 531.5 L1029.9 533.3 L1029.6 535.2 L1029.1 537.0 L1028.5 538.8 L1027.8 540.6 L1026.9 542.3 L1025.7 544.2 L1024.2 546.1 L1022.5 548.0 L1020.7 549.7 L1018.8 551.4 L1016.9 553.0 L1014.9 554.5 L1012.7 555.8 L1010.5 557.0 L1008.2 558.2 L1005.7 559.5 L1003.0 560.8 L998.6 562.9 L993.7 565.2 L988.4 567.6 L983.0 570.0 L977.6 572.3 L972.3 574.6 L967.2 576.8 L962.1 578.9 L956.9 581.0 L951.8 583.1 L946.7 585.0 L941.5 586.9 L936.4 588.6 L931.3 590.3 L926.3 591.9 L921.2 593.4 L916.0 594.8 L910.8 596.2 L905.3 597.6 L899.8 598.9 L894.1 600.2 L888.5 601.4 L883.1 602.5 L877.9 603.5 L873.7 604.2 L869.7 604.8 L865.8 605.3 L861.9 605.8 L858.0 606.3 L854.1 606.8 L846.2 607.6 L838.4 608.4 L830.5 609.0 L822.8 609.5 L815.0 609.9 L807.3 610.2 L799.7 610.4 L792.1 610.5 L784.5 610.5 L777.0 610.5 L769.5 610.3 L762.1 610.1 L754.8 609.7 L747.5 609.3 L740.2 608.9 L733.0 608.3 L725.8 607.7 L718.7 607.0 L711.6 606.3 L704.5 605.5 L697.5 604.6 L690.5 603.7 L683.6 602.8 L676.6 601.7 L669.8 600.6 L662.9 599.4 L656.1 598.1 L649.3 596.7 L642.6 595.2 L636.0 593.6 L629.4 591.8 L622.9 590.0 L616.5 588.0 L610.1 586.0 L603.9 583.8 L597.7 581.4 L591.7 579.0 L585.7 576.5 L579.9 573.9 L574.1 571.2 L568.5 568.4 L562.9 565.6 L557.4 562.7 L552.0 559.7 L546.6 556.6 L541.4 553.5 L536.3 550.2 L531.3 546.9 L526.4 543.5 L521.7 540.0 L517.2 536.4 L512.9 532.7 L508.7 528.9 L504.7 525.1 L500.8 521.1 L497.1 517.2 L493.4 513.2 L489.7 509.1 L486.1 505.1 L482.6 501.0 L479.0 496.8 L475.6 492.6 L472.2 488.4 L469.0 484.1 L465.9 479.7 L463.0 475.2 L460.3 470.7 L457.8 466.1 L455.6 461.5 L453.6 456.8 L451.9 452.0 L450.6 447.2 L449.6 442.3 L448.9 437.4 L448.5 432.5 L448.4 427.6 L448.8 589.5 L449.2 589.5 L449.0 594.3 L448.9 599.1 L449.1 603.8 L449.4 608.6 L450.0 613.4 L450.8 618.1 L451.9 622.8 L453.1 627.5 L454.6 632.2 L456.2 636.9 L458.1 641.5 L460.2 646.0 L462.4 650.6 L464.9 655.1 L467.6 659.5 L470.4 664.0 L473.5 668.3 L476.7 672.6 L480.1 676.9 L483.7 681.0 L487.5 685.2 L491.4 689.2 L495.5 693.2 L499.8 697.2 L504.2 701.0 L508.8 704.8 L513.5 708.5 L518.4 712.1 L523.5 715.7 L528.6 719.2 L534.0 722.6 L539.4 725.9 L545.0 729.1 L550.7 732.3 L556.5 735.3 L562.5 738.3 L568.5 741.2 L574.7 744.0 L581.0 746.7 L587.4 749.3 L593.9 751.8 L600.4 754.2 L607.1 756.6 L613.9 758.8 L620.8 761.0 L627.7 763.0 L634.7 765.0 L641.8 766.8 L649.0 768.6 L656.2 770.2 L663.6 771.8 L671.0 773.3 L678.4 774.6 L685.9 775.9 L693.5 777.1 L701.1 778.2 L708.8 779.1 L716.6 780.0 L724.4 780.8 L732.2 781.4 L740.1 782.0 L748.0 782.5 L756.0 782.8 L764.0 783.0 L772.0 783.1 L780.0 783.2 L788.1 783.0 L796.2 782.8 L804.4 782.5 L812.5 782.0 L820.7 781.4 L828.8 780.7 L837.0 779.8 L845.1 778.9 L853.2 777.8 L861.4 776.5 L869.5 775.1 L877.5 773.6 L885.5 772.0 L893.5 770.2 L901.4 768.3 L909.3 766.3 L917.1 764.1 L924.9 761.8 L932.6 759.4 L940.3 756.9 L948.0 754.3 L955.6 751.6 L963.1 748.8 L970.6 745.8 L978.1 742.8 L985.5 739.6 L992.7 736.2 L999.6 732.7 L1006.1 728.8 L1012.1 724.7 L1017.5 720.3 L1022.2 715.6 L1026.0 710.6 L1028.8 705.2 L1030.5 699.5 Z" fill="url(#gFrontV)"/>
<path d="M934.9 495.3 L939.9 494.7 L944.9 494.0 L949.9 493.3 L954.8 492.7 L959.7 492.4 L964.6 492.3 L969.7 492.5 L974.9 492.9 L980.2 493.6 L985.3 494.4 L990.2 495.5 L994.7 496.8 L998.3 498.1 L1001.8 499.6 L1005.1 501.3 L1008.3 503.1 L1011.2 505.0 L1013.9 507.2 L1016.3 509.3 L1018.6 511.7 L1020.8 514.3 L1022.7 516.9 L1024.4 519.4 L1025.6 521.8 L1026.3 523.5 L1026.9 525.1 L1027.3 526.7 L1027.6 528.2 L1027.7 529.8 L1027.7 531.4 L1027.6 533.0 L1027.3 534.7 L1026.9 536.4 L1026.4 538.0 L1025.7 539.6 L1024.9 541.1 L1023.8 542.9 L1022.4 544.6 L1020.9 546.4 L1019.2 548.1 L1017.3 549.7 L1015.5 551.2 L1013.6 552.6 L1011.6 553.8 L1009.5 555.0 L1007.2 556.2 L1004.7 557.4 L1002.0 558.7 L997.6 560.9 L992.7 563.1 L987.5 565.5 L982.1 567.9 L976.7 570.2 L971.4 572.5 L966.3 574.6 L961.2 576.8 L956.1 578.9 L951.0 580.9 L945.9 582.9 L940.7 584.7 L935.7 586.5 L930.7 588.1 L925.6 589.7 L920.5 591.2 L915.4 592.6 L910.2 594.0 L904.8 595.4 L899.2 596.7 L893.6 598.0 L888.1 599.1 L882.7 600.2 L877.5 601.2 L873.4 601.9 L869.4 602.5 L865.5 603.0 L861.6 603.5 L857.7 604.0 L853.8 604.5 L846.0 605.4 L838.2 606.1 L830.4 606.7 L822.6 607.2 L814.9 607.6 L807.3 607.9 L799.6 608.1 L792.1 608.2 L784.5 608.3 L777.0 608.2 L769.6 608.0 L762.2 607.8 L754.9 607.4 L747.6 607.0 L740.4 606.6 L733.2 606.0 L726.0 605.4 L718.9 604.8 L711.8 604.0 L704.8 603.2 L697.8 602.4 L690.8 601.5 L683.9 600.5 L677.0 599.4 L670.1 598.3 L663.3 597.1 L656.5 595.8 L649.8 594.4 L643.2 592.9 L636.5 591.3 L630.0 589.6 L623.5 587.8 L617.1 585.8 L610.9 583.8 L604.7 581.6 L598.6 579.3 L592.6 576.9 L586.6 574.4 L580.8 571.8 L575.1 569.1 L569.5 566.4 L563.9 563.6 L558.5 560.6 L553.1 557.7 L547.8 554.6 L542.6 551.5 L537.5 548.3 L532.6 545.0 L527.8 541.7 L523.1 538.2 L518.7 534.6 L514.4 531.0 L510.3 527.3 L506.3 523.4 L502.5 519.6 L498.7 515.6 L495.1 511.6 L491.5 507.6 L487.9 503.6 L484.3 499.5 L480.8 495.3 L477.4 491.2 L474.1 487.0 L470.9 482.7 L467.8 478.4 L464.9 474.0 L462.3 469.6 L459.8 465.1 L457.6 460.5 L455.7 455.9 L454.1 451.3 L452.8 446.6 L451.9 441.9 L451.2 437.2 L450.8 432.4 L450.7 427.6 L450.8 422.8 L451.0 418.0 L451.5 413.2 L452.1 408.3 L452.8 403.5 L453.7 398.7 L454.8 393.9 L456.0 389.1 L457.5 384.3 L459.1 379.6 L461.0 374.9 L463.0 370.2 L465.3 365.5 L467.8 360.9 L470.6 356.4 L473.6 351.9 L476.8 347.5 L480.3 343.1 L484.0 338.9 L487.9 334.7 L492.0 330.6 L496.3 326.5 L500.9 322.6 L505.6 318.8 L510.5 315.0 L515.6 311.4 L520.8 307.8 L526.2 304.4 L531.7 301.0 L537.3 297.8 L543.1 294.6 L548.9 291.5 L554.9 288.5 L560.9 285.6 L567.0 282.8 L573.2 280.1 L579.5 277.4 L585.9 274.8 L592.3 272.2 L598.8 269.8 L605.3 267.4 L612.0 265.1 L618.7 262.9 L625.5 260.9 L632.5 258.9 L639.5 257.1 L646.5 255.4 L653.7 253.8 L660.9 252.4 L668.2 251.1 L675.6 250.0 L683.0 249.0 L690.4 248.1 L697.9 247.4 L705.4 246.9 L713.0 246.5 L720.5 246.2 L728.1 246.1 L735.6 246.1 L743.2 246.3 L750.7 246.6 L758.2 247.1 L765.7 247.8 L773.2 248.5 L780.5 249.5 L787.9 250.6 L795.2 251.8 L802.4 253.1 L809.5 254.6 L816.6 256.2 L823.6 257.9 L830.5 259.7 L837.3 261.6 L844.1 263.7 L850.8 265.8 L857.4 268.0 L863.9 270.3 L870.4 272.6 L876.7 275.1 L883.1 277.6 L889.3 280.1 L895.5 282.8 L901.6 285.5 L907.5 288.4 L913.4 291.3 L919.1 294.3 L924.7 297.4 L930.1 300.7 L935.4 304.0 L940.5 307.5 L945.3 311.1 L949.9 314.8 L954.3 318.6 L958.4 322.5 L962.3 326.6 L965.9 330.7 L969.3 334.9 L972.4 339.1 L975.3 343.5 L978.0 347.8 L980.4 352.2 L982.7 356.7 L984.7 361.1 L986.5 365.6 L988.0 370.1 L989.3 374.6 L990.4 379.1 L991.2 383.7 L991.7 388.2 L992.0 392.7 L991.9 397.2 L991.6 401.7 L991.1 406.1 L990.2 410.6 L989.1 415.0 L987.8 419.3 L986.2 423.6 L984.4 427.9 L982.4 432.1 L980.3 436.2 L977.9 440.3 L975.4 444.3 L972.7 448.2 L969.9 452.0 L967.0 455.8 L964.0 459.5 L960.9 463.1 L957.7 466.7 L954.5 470.2 L951.2 473.6 L947.9 476.9 L944.5 480.2 L941.2 483.5 L937.8 486.7 L934.4 489.9" fill="none" stroke="#1c1c1c" stroke-width="6.2" stroke-linejoin="round" transform="translate(0 0)"/>
<path d="M934.9 495.3 L939.9 494.7 L944.9 494.0 L949.9 493.3 L954.8 492.7 L959.7 492.4 L964.6 492.3 L969.7 492.5 L974.9 492.9 L980.2 493.6 L985.3 494.4 L990.2 495.5 L994.7 496.8 L998.3 498.1 L1001.8 499.6 L1005.1 501.3 L1008.3 503.1 L1011.2 505.0 L1013.9 507.2 L1016.3 509.3 L1018.6 511.7 L1020.8 514.3 L1022.7 516.9 L1024.4 519.4 L1025.6 521.8 L1026.3 523.5 L1026.9 525.1 L1027.3 526.7 L1027.6 528.2 L1027.7 529.8 L1027.7 531.4 L1027.6 533.0 L1027.3 534.7 L1026.9 536.4 L1026.4 538.0 L1025.7 539.6 L1024.9 541.1 L1023.8 542.9 L1022.4 544.6 L1020.9 546.4 L1019.2 548.1 L1017.3 549.7 L1015.5 551.2 L1013.6 552.6 L1011.6 553.8 L1009.5 555.0 L1007.2 556.2 L1004.7 557.4 L1002.0 558.7 L997.6 560.9 L992.7 563.1 L987.5 565.5 L982.1 567.9 L976.7 570.2 L971.4 572.5 L966.3 574.6 L961.2 576.8 L956.1 578.9 L951.0 580.9 L945.9 582.9 L940.7 584.7 L935.7 586.5 L930.7 588.1 L925.6 589.7 L920.5 591.2 L915.4 592.6 L910.2 594.0 L904.8 595.4 L899.2 596.7 L893.6 598.0 L888.1 599.1 L882.7 600.2 L877.5 601.2 L873.4 601.9 L869.4 602.5 L865.5 603.0 L861.6 603.5 L857.7 604.0 L853.8 604.5 L846.0 605.4 L838.2 606.1 L830.4 606.7 L822.6 607.2 L814.9 607.6 L807.3 607.9 L799.6 608.1 L792.1 608.2 L784.5 608.3 L777.0 608.2 L769.6 608.0 L762.2 607.8 L754.9 607.4 L747.6 607.0 L740.4 606.6 L733.2 606.0 L726.0 605.4 L718.9 604.8 L711.8 604.0 L704.8 603.2 L697.8 602.4 L690.8 601.5 L683.9 600.5 L677.0 599.4 L670.1 598.3 L663.3 597.1 L656.5 595.8 L649.8 594.4 L643.2 592.9 L636.5 591.3 L630.0 589.6 L623.5 587.8 L617.1 585.8 L610.9 583.8 L604.7 581.6 L598.6 579.3 L592.6 576.9 L586.6 574.4 L580.8 571.8 L575.1 569.1 L569.5 566.4 L563.9 563.6 L558.5 560.6 L553.1 557.7 L547.8 554.6 L542.6 551.5 L537.5 548.3 L532.6 545.0 L527.8 541.7 L523.1 538.2 L518.7 534.6 L514.4 531.0 L510.3 527.3 L506.3 523.4 L502.5 519.6 L498.7 515.6 L495.1 511.6 L491.5 507.6 L487.9 503.6 L484.3 499.5 L480.8 495.3 L477.4 491.2 L474.1 487.0 L470.9 482.7 L467.8 478.4 L464.9 474.0 L462.3 469.6 L459.8 465.1 L457.6 460.5 L455.7 455.9 L454.1 451.3 L452.8 446.6 L451.9 441.9 L451.2 437.2 L450.8 432.4 L450.7 427.6 L450.8 422.8 L451.0 418.0 L451.5 413.2 L452.1 408.3 L452.8 403.5 L453.7 398.7 L454.8 393.9 L456.0 389.1 L457.5 384.3 L459.1 379.6 L461.0 374.9 L463.0 370.2 L465.3 365.5 L467.8 360.9 L470.6 356.4 L473.6 351.9 L476.8 347.5 L480.3 343.1 L484.0 338.9 L487.9 334.7 L492.0 330.6 L496.3 326.5 L500.9 322.6 L505.6 318.8 L510.5 315.0 L515.6 311.4 L520.8 307.8 L526.2 304.4 L531.7 301.0 L537.3 297.8 L543.1 294.6 L548.9 291.5 L554.9 288.5 L560.9 285.6 L567.0 282.8 L573.2 280.1 L579.5 277.4 L585.9 274.8 L592.3 272.2 L598.8 269.8 L605.3 267.4 L612.0 265.1 L618.7 262.9 L625.5 260.9 L632.5 258.9 L639.5 257.1 L646.5 255.4 L653.7 253.8 L660.9 252.4 L668.2 251.1 L675.6 250.0 L683.0 249.0 L690.4 248.1 L697.9 247.4 L705.4 246.9 L713.0 246.5 L720.5 246.2 L728.1 246.1 L735.6 246.1 L743.2 246.3 L750.7 246.6 L758.2 247.1 L765.7 247.8 L773.2 248.5 L780.5 249.5 L787.9 250.6 L795.2 251.8 L802.4 253.1 L809.5 254.6 L816.6 256.2 L823.6 257.9 L830.5 259.7 L837.3 261.6 L844.1 263.7 L850.8 265.8 L857.4 268.0 L863.9 270.3 L870.4 272.6 L876.7 275.1 L883.1 277.6 L889.3 280.1 L895.5 282.8 L901.6 285.5 L907.5 288.4 L913.4 291.3 L919.1 294.3 L924.7 297.4 L930.1 300.7 L935.4 304.0 L940.5 307.5 L945.3 311.1 L949.9 314.8 L954.3 318.6 L958.4 322.5 L962.3 326.6 L965.9 330.7 L969.3 334.9 L972.4 339.1 L975.3 343.5 L978.0 347.8 L980.4 352.2 L982.7 356.7 L984.7 361.1 L986.5 365.6 L988.0 370.1 L989.3 374.6 L990.4 379.1 L991.2 383.7 L991.7 388.2 L992.0 392.7 L991.9 397.2 L991.6 401.7 L991.1 406.1 L990.2 410.6 L989.1 415.0 L987.8 419.3 L986.2 423.6 L984.4 427.9 L982.4 432.1 L980.3 436.2 L977.9 440.3 L975.4 444.3 L972.7 448.2 L969.9 452.0 L967.0 455.8 L964.0 459.5 L960.9 463.1 L957.7 466.7 L954.5 470.2 L951.2 473.6 L947.9 476.9 L944.5 480.2 L941.2 483.5 L937.8 486.7 L934.4 489.9" fill="none" stroke="#b3a996" stroke-width="3.6" stroke-linejoin="round" transform="translate(0 0)"/>
<path d="M610.7 527.0 C620.9 528.6 649.5 534.0 671.6 536.5 C693.7 539.0 719.4 542.5 743.3 542.3 C767.2 542.1 793.1 539.3 815.0 535.3 C836.9 531.3 857.5 524.1 874.6 518.5 C891.7 512.9 907.4 506.0 917.6 501.5 C927.9 497.0 933.0 493.2 936.1 491.6" fill="none" stroke="#1c1c1c" stroke-width="5.2" stroke-linejoin="round" transform="translate(0 1.8)"/>
<path d="M610.7 527.0 C620.9 528.6 649.5 534.0 671.6 536.5 C693.7 539.0 719.4 542.5 743.3 542.3 C767.2 542.1 793.1 539.3 815.0 535.3 C836.9 531.3 857.5 524.1 874.6 518.5 C891.7 512.9 907.4 506.0 917.6 501.5 C927.9 497.0 933.0 493.2 936.1 491.6" fill="none" stroke="#b3a996" stroke-width="2.7" stroke-linejoin="round" transform="translate(0 1.8)"/>
<path d="M449.2 589.5 L449.0 594.3 L448.9 599.1 L449.1 603.8 L449.4 608.6 L450.0 613.4 L450.8 618.1 L451.9 622.8 L453.1 627.5 L454.6 632.2 L456.2 636.9 L458.1 641.5 L460.2 646.0 L462.4 650.6 L464.9 655.1 L467.6 659.5 L470.4 664.0 L473.5 668.3 L476.7 672.6 L480.1 676.9 L483.7 681.0 L487.5 685.2 L491.4 689.2 L495.5 693.2 L499.8 697.2 L504.2 701.0 L508.8 704.8 L513.5 708.5 L518.4 712.1 L523.5 715.7 L528.6 719.2 L534.0 722.6 L539.4 725.9 L545.0 729.1 L550.7 732.3 L556.5 735.3 L562.5 738.3 L568.5 741.2 L574.7 744.0 L581.0 746.7 L587.4 749.3 L593.9 751.8 L600.4 754.2 L607.1 756.6 L613.9 758.8 L620.8 761.0 L627.7 763.0 L634.7 765.0 L641.8 766.8 L649.0 768.6 L656.2 770.2 L663.6 771.8 L671.0 773.3 L678.4 774.6 L685.9 775.9 L693.5 777.1 L701.1 778.2 L708.8 779.1 L716.6 780.0 L724.4 780.8 L732.2 781.4 L740.1 782.0 L748.0 782.5 L756.0 782.8 L764.0 783.0 L772.0 783.1 L780.0 783.2 L788.1 783.0 L796.2 782.8 L804.4 782.5 L812.5 782.0 L820.7 781.4 L828.8 780.7 L837.0 779.8 L845.1 778.9 L853.2 777.8 L861.4 776.5 L869.5 775.1 L877.5 773.6 L885.5 772.0 L893.5 770.2 L901.4 768.3 L909.3 766.3 L917.1 764.1 L924.9 761.8 L932.6 759.4 L940.3 756.9 L948.0 754.3 L955.6 751.6 L963.1 748.8 L970.6 745.8 L978.1 742.8 L985.5 739.6 L992.7 736.2 L999.6 732.7 L1006.1 728.8 L1012.1 724.7 L1017.5 720.3 L1022.2 715.6 L1026.0 710.6 L1028.8 705.2 L1030.5 699.5" stroke="#161616" fill="none" stroke-width="1.2"/>
<path d="M448.6 425 V589.5" stroke="#161616" fill="none" stroke-width="1.2"/>
<path d="M1029.8 531.5 V699.2" stroke="#161616" fill="none" stroke-width="1.2"/>
<path d="M610.7 530 V582" stroke="#161616" fill="none" stroke-width="1.2"/>
<path d="M916.4 503 V590" stroke="#161616" fill="none" stroke-width="1.2"/>
<path d="M1009.6 560 V728.7 Q1009 740 998.6 744.9" stroke="#161616" fill="none" stroke-width="1.2"/>
</svg>
<!-- comments -->
<div class="a" style="left:0;top:891px;width:374px;height:31px;background:#f0f0f0;border:1.3px solid #c9c9c9;border-top-color:#e4e4e4;border-bottom-width:2px"></div>
<div class="t" style="left:31.6px;top:898px;color:#555">COMENTÁRIOS</div>
<svg style="left:0;top:0" width="10" height="10">
 <circle cx="354" cy="906" r="6" fill="#333"/><path d="M350 906h8M354 902v8" stroke="#fff" stroke-width="1.8"/>
</svg>
<!-- timeline -->
<div class="a" style="left:0;top:928px;width:1415px;height:47px;background:#f0f0f0"></div>
<div class="a" style="left:0;top:928px;width:1415px;height:1.3px;background:#d2d2d2"></div>
<div class="a" style="left:175px;top:938px;width:715px;height:7px;background:#e18fe3"></div>
<svg style="left:0;top:0" width="1424" height="975">
<defs>
 <symbol id="sk" viewBox="0 0 20 20" overflow="visible">
  <g stroke="#b5b5b5" stroke-width="1.2" fill="none"><path d="M1 1h16M1 1v16M1 17h10M17 1v9"/><path d="M5 5h8M5 5v8M5 13c4-0.5 7-3 8-8"/></g>
  <g fill="#2a8ee8"><rect x="0" y="0" width="2" height="2"/><rect x="16.5" y="0" width="2" height="2"/><rect x="0" y="16.2" width="2" height="2"/><rect x="4.2" y="4.2" width="2" height="2"/><rect x="12.2" y="4.2" width="2" height="2"/><rect x="4.2" y="12.2" width="2" height="2"/></g>
  <path d="M11 16.5l6.5-6.5 2 2-6.5 6.5z" fill="#f3b33d"/><path d="M17.5 10l1.3-1.3a1.2 1.2 0 0 1 1.9 1.9l-1.2 1.4z" fill="#e8262a"/>
  <path d="M11 16.5l2 2-3 1z" fill="#444"/>
 </symbol>
 <symbol id="cb" viewBox="0 0 20 20" overflow="visible">
  <path d="M0.5 5.5l3-3h7v4h5.5l3 3v8l-3 2.5H8v-4H3.5l-3-3z" fill="#66aee6"/>
  <path d="M0.5 5.5l3-3h7l-3 3zM10.5 6.5l-0.5 0.5h6l3 3h-7z" fill="#92ccf6"/>
  <path d="M7.5 5.5l3-3v7h-3zM16 10l3-3v10l-3 3z" fill="#4b91c9"/>
  <rect x="6.5" y="10.5" width="8.5" height="8.5" fill="#fff" stroke="#8a8a8a" stroke-width="1.3"/>
 </symbol>
 <symbol id="ex" viewBox="0 0 20 20" overflow="visible">
  <path d="M0 16h13v3H0z" fill="#c5c5c5"/><path d="M13 16l4-4v3l-4 4z" fill="#a5a5a5"/>
  <path d="M0 4h13v12H0z" fill="#66aee6"/><path d="M0 4l4-4h13l-4 4z" fill="#92ccf6"/><path d="M13 4l4-4v12l-4 4z" fill="#4b91c9"/>
  <path d="M19.5 2v13" stroke="#333" stroke-width="0.9"/><path d="M18.2 3l1.3-2.6 1.3 2.6z" fill="#333"/>
 </symbol>
 <symbol id="fl" viewBox="0 0 20 20" overflow="visible">
  <path d="M0 5l5-5h15v14l-5 6H0z" fill="#fff"/>
  <path d="M0.5 5h8c4 0 6.5 3 6.5 7v7.5H0.5z" fill="#d9d9d9"/>
  <path d="M15 12l5-4v8l-5 4z" fill="#bdbdbd"/>
  <path d="M8 4.5l5-4.5c4 0.5 7 4 7 8l-5 4.5c0-4-3-7.5-7-8z" fill="#66aee6"/>
  <path d="M0 20V5l5-5h7M0 20h15l5-5v-7" fill="none" stroke="#666" stroke-width="1"/>
 </symbol>
</defs>
<!-- playback -->
<g fill="#6a6a6a">
 <rect x="8.1" y="951" width="2.4" height="15.3"/><path d="M22.2 951v15.3l-11-7.65z"/>
 <path d="M39.7 958.65l11-7.65v15.3z"/><rect x="52.5" y="956" width="3.4" height="5.3"/>
 <path d="M71.3 949.2v18.2l14.7-9.1z"/>
 <rect x="101" y="956" width="3.4" height="5.3"/><path d="M106 951v15.3l11-7.65z"/>
 <path d="M133 951v15.3l11-7.65z"/><rect x="144.8" y="951" width="2.4" height="15.3"/>
</g>
<!-- timeline icons -->
<g>
 <use href="#sk" x="178" y="948.5" width="20" height="20"/>
 <use href="#sk" x="208" y="948.5" width="20" height="20"/>
 <use href="#sk" x="238" y="948.5" width="20" height="20"/>
 <use href="#sk" x="268" y="948.5" width="20" height="20"/>
 <use href="#sk" x="298" y="948.5" width="20" height="20"/>
 <use href="#cb" x="328" y="948.5" width="20" height="20"/>
 <use href="#sk" x="358" y="948.5" width="20" height="20"/>
 <use href="#ex" x="388.5" y="948.5" width="20" height="20"/>
 <use href="#cb" x="478" y="948.5" width="20" height="20"/>
 <use href="#sk" x="538" y="948.5" width="20" height="20"/>
 <use href="#cb" x="568" y="948.5" width="20" height="20"/>
 <use href="#sk" x="598" y="948.5" width="20" height="20"/>
 <use href="#ex" x="628.5" y="948.5" width="20" height="20"/>
 <use href="#sk" x="658" y="948.5" width="20" height="20"/>
 <use href="#cb" x="688" y="948.5" width="20" height="20"/>
 <use href="#sk" x="718" y="948.5" width="20" height="20"/>
 <use href="#ex" x="748.5" y="948.5" width="20" height="20"/>
 <use href="#sk" x="778" y="948.5" width="20" height="20"/>
 <use href="#ex" x="808.5" y="948.5" width="20" height="20"/>
 <use href="#fl" x="838" y="948" width="20" height="20"/>
 <use href="#fl" x="868" y="948" width="20" height="20"/>
</g>
<!-- pattern -->
<g fill="#66aee6"><circle cx="427" cy="949.5" r="2.3"/><circle cx="432" cy="953" r="2.3"/><circle cx="432" cy="960" r="2.3"/><circle cx="427" cy="963.5" r="2.3"/><circle cx="421.5" cy="960" r="2.3"/></g>
<circle cx="421.5" cy="953" r="1.8" fill="none" stroke="#999" stroke-width="0.8"/>
<!-- union -->
<path d="M448 956l3-3h6v-5l3-3h9v9l-3 3v0h-6v5l-3 3h-9z" fill="#66aee6" transform="translate(0 3)"/>
<path d="M457 951l3-3h9l-3 3zM448 959l3-3h6l-3 3z" fill="#92ccf6" transform="translate(0 3)"/>
<!-- plane -->
<path d="M509 955l4-5h5v17h-9z" fill="#dcdcdc" stroke="#666" stroke-width="1"/>
<path d="M513 955l5-5v16l-5 4z" fill="#58c27a"/><path d="M521 956l5-5v14l-5 4z" fill="#e39560"/>
<!-- ticks -->
<g fill="#bbb">
 <rect x="187.5" y="972" width="1.3" height="3"/><rect x="217.5" y="972" width="1.3" height="3"/><rect x="247.5" y="972" width="1.3" height="3"/><rect x="277.5" y="972" width="1.3" height="3"/><rect x="307.5" y="972" width="1.3" height="3"/><rect x="337.5" y="972" width="1.3" height="3"/><rect x="367.5" y="972" width="1.3" height="3"/><rect x="397.5" y="972" width="1.3" height="3"/><rect x="427.5" y="972" width="1.3" height="3"/><rect x="457.5" y="972" width="1.3" height="3"/><rect x="487.5" y="972" width="1.3" height="3"/><rect x="517.5" y="972" width="1.3" height="3"/><rect x="547.5" y="972" width="1.3" height="3"/><rect x="577.5" y="972" width="1.3" height="3"/><rect x="607.5" y="972" width="1.3" height="3"/><rect x="637.5" y="972" width="1.3" height="3"/><rect x="667.5" y="972" width="1.3" height="3"/><rect x="697.5" y="972" width="1.3" height="3"/><rect x="727.5" y="972" width="1.3" height="3"/><rect x="757.5" y="972" width="1.3" height="3"/><rect x="787.5" y="972" width="1.3" height="3"/><rect x="817.5" y="972" width="1.3" height="3"/><rect x="847.5" y="972" width="1.3" height="3"/><rect x="877.5" y="972" width="1.3" height="3"/>
</g>
<!-- marker -->
<path d="M885 940h15v6l-4 3.5h-2v25.5h-3v-25.5h-2l-4-3.5z" fill="#666"/>
<!-- gear -->
<g transform="translate(1388.4 958.3)">
  <path fill="#7b7b7b" d="M-1.6-9.5h3.2l0.5 2.6a7 7 0 0 1 2.2 0.9l2.2-1.5 2.3 2.3-1.5 2.2a7 7 0 0 1 0.9 2.2l2.6 0.5v3.2l-2.6 0.5a7 7 0 0 1-0.9 2.2l1.5 2.2-2.3 2.3-2.2-1.5a7 7 0 0 1-2.2 0.9l-0.5 2.6h-3.2l-0.5-2.6a7 7 0 0 1-2.2-0.9l-2.2 1.5-2.3-2.3 1.5-2.2a7 7 0 0 1-0.9-2.2l-2.6-0.5v-3.2l2.6-0.5a7 7 0 0 1 0.9-2.2l-1.5-2.2 2.3-2.3 2.2 1.5a7 7 0 0 1 2.2-0.9z"/>
  <circle r="3" fill="#f0f0f0"/>
</g>
</svg>
<!-- nav toolbar -->
<div class="a" style="left:558px;top:890px;width:296px;height:29.5px;background:#efefef"></div>
<svg style="left:0;top:0" width="10" height="10">
 <defs>
  <linearGradient id="scr" x1="0" y1="0" x2="0" y2="1"><stop offset="0" stop-color="#a9c6ec"/><stop offset="1" stop-color="#6e96cf"/></linearGradient>
 </defs>
 <g fill="#222"><path d="M588.5 903h6l-3 4z"/><path d="M726 903h7l-3.5 4z"/><path d="M764.5 903h6l-3 4z"/><path d="M802.7 903h6.7l-3.35 4z"/><path d="M841 903h7l-3.5 4z"/></g>
 <!-- orbit -->
 <path d="M571 896l-3.5 4h2v12h3v-12h2z" fill="#fff" stroke="#555" stroke-width="1"/>
 <path d="M566.5 904c-5 1.5-5 5 0 6M576 904c5 1.5 5 5 0 6M566 910.5c3 1 7 1 10 0" fill="none" stroke="#555" stroke-width="1.1"/>
 <!-- look at -->
 <rect x="603.5" y="901" width="17.5" height="11.5" rx="1" fill="#ddd" stroke="#666" stroke-width="1"/>
 <rect x="606" y="904" width="12.5" height="6" fill="#8aa0b8" stroke="#555" stroke-width="0.8"/>
 <path d="M605 901l3-4 4 1.5 6-1.5 2 4" fill="#bbb" stroke="#666" stroke-width="0.8"/>
 <!-- pan -->
 <path d="M640.5 913.5c-2.5-2.5-4-5-4.7-6.8-0.4-1.2 1.2-2 2.3-1l2.2 2.3v-9.5c0-1.5 2.2-1.5 2.2 0v6v-8.2c0-1.6 2.3-1.6 2.3 0v8.2v-8.6c0-1.6 2.3-1.6 2.3 0v8.6v-7.5c0-1.5 2.2-1.5 2.2 0v8.3l1.6-3.6c0.6-1.3 2.4-0.8 2.1 0.6l-1.5 5.8c-0.9 3.6-2.8 6.2-6.3 6.2z" fill="#fff" stroke="#444" stroke-width="0.95" stroke-linejoin="round"/>
 <!-- zoom -->
 <circle cx="674.5" cy="902" r="5.8" fill="#e9f3fb" stroke="#555" stroke-width="1.3"/>
 <path d="M678.5 906l6 6.3" stroke="#333" stroke-width="2.4"/>
 <path d="M681.5 897.5h5M684 895v5M681.5 902h5" stroke="#444" stroke-width="0.9"/>
 <!-- zoom window -->
 <rect x="700" y="896" width="19" height="18.5" fill="none" stroke="#999" stroke-width="0.8" stroke-dasharray="1.5 1.2"/>
 <circle cx="708" cy="903" r="5.8" fill="#e9f3fb" stroke="#555" stroke-width="1.3"/>
 <path d="M712 907l6 6" stroke="#333" stroke-width="2.4"/>
 <!-- display -->
 <rect x="742" y="895" width="19" height="15" rx="1" fill="url(#scr)" stroke="#555" stroke-width="1"/>
 <path d="M748 910.5h7l1.5 3h-10z" fill="#888"/>
 <!-- grid -->
 <rect x="780" y="896" width="19" height="17.5" fill="#ddd" stroke="#666" stroke-width="1"/>
 <path d="M780 900.5h19M780 905h19M780 909h19M784.5 896v17.5M789 896v17.5M793.5 896v17.5" stroke="#777" stroke-width="0.8"/>
 <!-- viewports -->
 <rect x="819" y="896.5" width="19" height="16.5" fill="#9dbbe6" stroke="#3a5a8c" stroke-width="1.1"/>
 <path d="M828.5 896.5v16.5M819 904.8h19" stroke="#3a5a8c" stroke-width="1.3"/>
 <path d="M820.5 898h6.5M830 898h6.5" stroke="#d4e4f7" stroke-width="0.8"/>
</svg>
<!-- viewcube -->
<svg style="left:0;top:0" width="10" height="10">
 <defs>
  <radialGradient id="vcs" cx="0.5" cy="0.5" r="0.5"><stop offset="0" stop-color="#000" stop-opacity="0.18"/><stop offset="1" stop-color="#000" stop-opacity="0"/></radialGradient>
  <linearGradient id="vcl" x1="0" y1="0" x2="0.3" y2="1"><stop offset="0" stop-color="#f4f4f4"/><stop offset="1" stop-color="#dcdcdc"/></linearGradient>
  <linearGradient id="vcr" x1="0" y1="0" x2="0" y2="1"><stop offset="0" stop-color="#f0f0f0"/><stop offset="1" stop-color="#d6d6d6"/></linearGradient>
 </defs>
 <ellipse cx="1352" cy="232" rx="38" ry="18" fill="url(#vcs)"/>
 <path d="M1352 172.7l34.7 16v37.3l-35.1 22.7-31.6-21.4-2.7-38.6z" fill="#eee"/>
 <path d="M1317.3 188.7l34.3 18.6v41.4l-31.6-21.4z" fill="url(#vcl)"/>
 <path d="M1351.6 207.3l35.1-18.6v37.3l-35.1 22.7z" fill="url(#vcr)"/>
 <path d="M1352 172.7l34.7 16v37.3l-35.1 22.7-31.6-21.4-2.7-38.6zM1317.3 188.7l34.3 18.6 35.1-18.6M1351.6 207.3v41.4" fill="none" stroke="#707070" stroke-width="0.8"/>
 <path d="M1315 181.5l5 45.5" stroke="#4a4ae8" stroke-width="1.3"/>
 <path d="M1320 227l37.5 27" stroke="#e88a8a" stroke-width="1.6"/>
 <text x="1310" y="178.8" font-family="Liberation Sans" font-size="13" fill="#6a6ae8">Z</text>
 <text x="1358.5" y="263.5" font-family="Liberation Sans" font-size="13" fill="#f07070">X</text>
 <g font-family="Liberation Sans" font-size="8.4" fill="#8c8c8c">
  <text transform="translate(1336 182) rotate(27) skewX(-25)" textLength="40" lengthAdjust="spacingAndGlyphs">SUPERIOR</text>
  <text transform="translate(1320 206) rotate(29)" textLength="33" lengthAdjust="spacingAndGlyphs">FRONTAL</text>
  <text transform="translate(1355.5 231.5) rotate(-29)" textLength="30" lengthAdjust="spacingAndGlyphs">DIREITA</text>
 </g>
</svg>

</body></html>
